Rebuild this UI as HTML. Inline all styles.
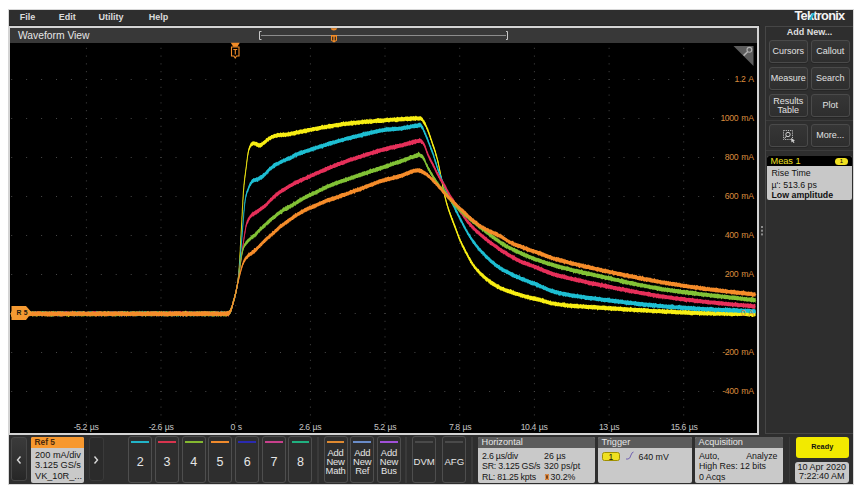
<!DOCTYPE html>
<html><head><meta charset="utf-8">
<style>
*{margin:0;padding:0;box-sizing:border-box}
html,body{width:864px;height:492px;background:#fff;overflow:hidden;font-family:"Liberation Sans",sans-serif}
.a{position:absolute}
#frame{left:9px;top:10px;width:844px;height:474px;background:#2e2e2e;box-shadow:0 0 0 1px #d8d8d8}
.menu{top:11px;font-size:9px;font-weight:bold;color:#dcdcdc;line-height:12px}
#wv{left:8px;top:26px;width:751px;height:409px;border:2px solid #d4d4d4;background:#000}
#tbar{left:10px;top:28px;width:747px;height:14.6px;background:#383838}
.ttl{left:18px;top:29px;font-size:10.3px;color:#e6e6e6;line-height:14px}
.ylab{font-size:8.7px;color:#d98a3c;line-height:8px;text-align:right;width:60px;letter-spacing:-0.4px;word-spacing:1.2px}
.xlab{font-size:8.7px;color:#c4c4c4;line-height:8px;text-align:center;width:50px;letter-spacing:-0.4px;word-spacing:0.8px}
.rbtn{width:38.5px;height:22.5px;border:1px solid #4a4a4a;border-radius:3px;background:linear-gradient(#363636,#2e2e2e);box-shadow:0 1px 0 #262626;color:#e2e2e2;font-size:9px;text-align:center;display:flex;align-items:center;justify-content:center;line-height:9px;padding-top:1px}
.ch{top:436px;width:24px;height:47px;border:1px solid #4e4e4e;border-radius:3px;background:#2e2e2e;color:#e6e6e6;text-align:center}
.ch i{position:absolute;left:2.2px;right:2.2px;top:4.2px;height:1.8px;display:block}
.ch b{position:absolute;left:0;right:0;top:18px;font-weight:normal;font-size:12.5px;line-height:14px}
.ch s{position:absolute;left:0;right:0;top:12.3px;text-decoration:none;font-size:9.4px;line-height:8.7px;letter-spacing:-0.2px}
.badge{top:437px;height:46px;background:#c9c9c9;border-radius:2px;overflow:hidden;color:#151515;font-size:8.8px;line-height:10.6px}
.badge .h{height:10.5px;background:#5b5b5b;color:#e6e6e6;font-size:9.2px;line-height:10.5px;padding-left:3.5px}
.sep{top:437px;width:2px;height:46px;background:#262626}
</style></head><body>
<div id="frame" class="a"></div>
<div class="a" style="left:9px;top:10px;width:844px;height:15px;background:#2e2e2e"></div>
<div class="a" style="left:9px;top:25px;width:751px;height:1.5px;background:#242424"></div>
<div class="a menu" style="left:19.8px">File</div>
<div class="a menu" style="left:58.8px">Edit</div>
<div class="a menu" style="left:98.5px">Utility</div>
<div class="a menu" style="left:148.8px">Help</div>

<div id="wv" class="a"></div>
<div id="tbar" class="a"></div>
<div class="a ttl">Waveform View</div>

<svg class="a" style="left:0;top:0" width="864" height="492" viewBox="0 0 864 492">
<g fill="#484848"><rect x="85.9" y="47.8" width="1" height="1"/><rect x="85.9" y="55.6" width="1" height="1"/><rect x="85.9" y="63.4" width="1" height="1"/><rect x="85.9" y="71.2" width="1" height="1"/><rect x="85.9" y="79.0" width="1" height="1"/><rect x="85.9" y="86.8" width="1" height="1"/><rect x="85.9" y="94.6" width="1" height="1"/><rect x="85.9" y="102.4" width="1" height="1"/><rect x="85.9" y="110.2" width="1" height="1"/><rect x="85.9" y="118.0" width="1" height="1"/><rect x="85.9" y="125.8" width="1" height="1"/><rect x="85.9" y="133.6" width="1" height="1"/><rect x="85.9" y="141.4" width="1" height="1"/><rect x="85.9" y="149.2" width="1" height="1"/><rect x="85.9" y="157.0" width="1" height="1"/><rect x="85.9" y="164.8" width="1" height="1"/><rect x="85.9" y="172.6" width="1" height="1"/><rect x="85.9" y="180.4" width="1" height="1"/><rect x="85.9" y="188.2" width="1" height="1"/><rect x="85.9" y="196.0" width="1" height="1"/><rect x="85.9" y="203.8" width="1" height="1"/><rect x="85.9" y="211.6" width="1" height="1"/><rect x="85.9" y="219.4" width="1" height="1"/><rect x="85.9" y="227.2" width="1" height="1"/><rect x="85.9" y="235.0" width="1" height="1"/><rect x="85.9" y="242.8" width="1" height="1"/><rect x="85.9" y="250.6" width="1" height="1"/><rect x="85.9" y="258.4" width="1" height="1"/><rect x="85.9" y="266.2" width="1" height="1"/><rect x="85.9" y="274.0" width="1" height="1"/><rect x="85.9" y="281.8" width="1" height="1"/><rect x="85.9" y="289.6" width="1" height="1"/><rect x="85.9" y="297.4" width="1" height="1"/><rect x="85.9" y="305.2" width="1" height="1"/><rect x="85.9" y="313.0" width="1" height="1"/><rect x="85.9" y="320.8" width="1" height="1"/><rect x="85.9" y="328.6" width="1" height="1"/><rect x="85.9" y="336.4" width="1" height="1"/><rect x="85.9" y="344.2" width="1" height="1"/><rect x="85.9" y="352.0" width="1" height="1"/><rect x="85.9" y="359.8" width="1" height="1"/><rect x="85.9" y="367.6" width="1" height="1"/><rect x="85.9" y="375.4" width="1" height="1"/><rect x="85.9" y="383.2" width="1" height="1"/><rect x="85.9" y="391.0" width="1" height="1"/><rect x="85.9" y="398.8" width="1" height="1"/><rect x="85.9" y="406.6" width="1" height="1"/><rect x="85.9" y="414.4" width="1" height="1"/><rect x="85.9" y="422.2" width="1" height="1"/><rect x="85.9" y="430.0" width="1" height="1"/><rect x="160.5" y="47.8" width="1" height="1"/><rect x="160.5" y="55.6" width="1" height="1"/><rect x="160.5" y="63.4" width="1" height="1"/><rect x="160.5" y="71.2" width="1" height="1"/><rect x="160.5" y="79.0" width="1" height="1"/><rect x="160.5" y="86.8" width="1" height="1"/><rect x="160.5" y="94.6" width="1" height="1"/><rect x="160.5" y="102.4" width="1" height="1"/><rect x="160.5" y="110.2" width="1" height="1"/><rect x="160.5" y="118.0" width="1" height="1"/><rect x="160.5" y="125.8" width="1" height="1"/><rect x="160.5" y="133.6" width="1" height="1"/><rect x="160.5" y="141.4" width="1" height="1"/><rect x="160.5" y="149.2" width="1" height="1"/><rect x="160.5" y="157.0" width="1" height="1"/><rect x="160.5" y="164.8" width="1" height="1"/><rect x="160.5" y="172.6" width="1" height="1"/><rect x="160.5" y="180.4" width="1" height="1"/><rect x="160.5" y="188.2" width="1" height="1"/><rect x="160.5" y="196.0" width="1" height="1"/><rect x="160.5" y="203.8" width="1" height="1"/><rect x="160.5" y="211.6" width="1" height="1"/><rect x="160.5" y="219.4" width="1" height="1"/><rect x="160.5" y="227.2" width="1" height="1"/><rect x="160.5" y="235.0" width="1" height="1"/><rect x="160.5" y="242.8" width="1" height="1"/><rect x="160.5" y="250.6" width="1" height="1"/><rect x="160.5" y="258.4" width="1" height="1"/><rect x="160.5" y="266.2" width="1" height="1"/><rect x="160.5" y="274.0" width="1" height="1"/><rect x="160.5" y="281.8" width="1" height="1"/><rect x="160.5" y="289.6" width="1" height="1"/><rect x="160.5" y="297.4" width="1" height="1"/><rect x="160.5" y="305.2" width="1" height="1"/><rect x="160.5" y="313.0" width="1" height="1"/><rect x="160.5" y="320.8" width="1" height="1"/><rect x="160.5" y="328.6" width="1" height="1"/><rect x="160.5" y="336.4" width="1" height="1"/><rect x="160.5" y="344.2" width="1" height="1"/><rect x="160.5" y="352.0" width="1" height="1"/><rect x="160.5" y="359.8" width="1" height="1"/><rect x="160.5" y="367.6" width="1" height="1"/><rect x="160.5" y="375.4" width="1" height="1"/><rect x="160.5" y="383.2" width="1" height="1"/><rect x="160.5" y="391.0" width="1" height="1"/><rect x="160.5" y="398.8" width="1" height="1"/><rect x="160.5" y="406.6" width="1" height="1"/><rect x="160.5" y="414.4" width="1" height="1"/><rect x="160.5" y="422.2" width="1" height="1"/><rect x="160.5" y="430.0" width="1" height="1"/><rect x="235.2" y="47.8" width="1" height="1"/><rect x="235.2" y="55.6" width="1" height="1"/><rect x="235.2" y="63.4" width="1" height="1"/><rect x="235.2" y="71.2" width="1" height="1"/><rect x="235.2" y="79.0" width="1" height="1"/><rect x="235.2" y="86.8" width="1" height="1"/><rect x="235.2" y="94.6" width="1" height="1"/><rect x="235.2" y="102.4" width="1" height="1"/><rect x="235.2" y="110.2" width="1" height="1"/><rect x="235.2" y="118.0" width="1" height="1"/><rect x="235.2" y="125.8" width="1" height="1"/><rect x="235.2" y="133.6" width="1" height="1"/><rect x="235.2" y="141.4" width="1" height="1"/><rect x="235.2" y="149.2" width="1" height="1"/><rect x="235.2" y="157.0" width="1" height="1"/><rect x="235.2" y="164.8" width="1" height="1"/><rect x="235.2" y="172.6" width="1" height="1"/><rect x="235.2" y="180.4" width="1" height="1"/><rect x="235.2" y="188.2" width="1" height="1"/><rect x="235.2" y="196.0" width="1" height="1"/><rect x="235.2" y="203.8" width="1" height="1"/><rect x="235.2" y="211.6" width="1" height="1"/><rect x="235.2" y="219.4" width="1" height="1"/><rect x="235.2" y="227.2" width="1" height="1"/><rect x="235.2" y="235.0" width="1" height="1"/><rect x="235.2" y="242.8" width="1" height="1"/><rect x="235.2" y="250.6" width="1" height="1"/><rect x="235.2" y="258.4" width="1" height="1"/><rect x="235.2" y="266.2" width="1" height="1"/><rect x="235.2" y="274.0" width="1" height="1"/><rect x="235.2" y="281.8" width="1" height="1"/><rect x="235.2" y="289.6" width="1" height="1"/><rect x="235.2" y="297.4" width="1" height="1"/><rect x="235.2" y="305.2" width="1" height="1"/><rect x="235.2" y="313.0" width="1" height="1"/><rect x="235.2" y="320.8" width="1" height="1"/><rect x="235.2" y="328.6" width="1" height="1"/><rect x="235.2" y="336.4" width="1" height="1"/><rect x="235.2" y="344.2" width="1" height="1"/><rect x="235.2" y="352.0" width="1" height="1"/><rect x="235.2" y="359.8" width="1" height="1"/><rect x="235.2" y="367.6" width="1" height="1"/><rect x="235.2" y="375.4" width="1" height="1"/><rect x="235.2" y="383.2" width="1" height="1"/><rect x="235.2" y="391.0" width="1" height="1"/><rect x="235.2" y="398.8" width="1" height="1"/><rect x="235.2" y="406.6" width="1" height="1"/><rect x="235.2" y="414.4" width="1" height="1"/><rect x="235.2" y="422.2" width="1" height="1"/><rect x="235.2" y="430.0" width="1" height="1"/><rect x="309.9" y="47.8" width="1" height="1"/><rect x="309.9" y="55.6" width="1" height="1"/><rect x="309.9" y="63.4" width="1" height="1"/><rect x="309.9" y="71.2" width="1" height="1"/><rect x="309.9" y="79.0" width="1" height="1"/><rect x="309.9" y="86.8" width="1" height="1"/><rect x="309.9" y="94.6" width="1" height="1"/><rect x="309.9" y="102.4" width="1" height="1"/><rect x="309.9" y="110.2" width="1" height="1"/><rect x="309.9" y="118.0" width="1" height="1"/><rect x="309.9" y="125.8" width="1" height="1"/><rect x="309.9" y="133.6" width="1" height="1"/><rect x="309.9" y="141.4" width="1" height="1"/><rect x="309.9" y="149.2" width="1" height="1"/><rect x="309.9" y="157.0" width="1" height="1"/><rect x="309.9" y="164.8" width="1" height="1"/><rect x="309.9" y="172.6" width="1" height="1"/><rect x="309.9" y="180.4" width="1" height="1"/><rect x="309.9" y="188.2" width="1" height="1"/><rect x="309.9" y="196.0" width="1" height="1"/><rect x="309.9" y="203.8" width="1" height="1"/><rect x="309.9" y="211.6" width="1" height="1"/><rect x="309.9" y="219.4" width="1" height="1"/><rect x="309.9" y="227.2" width="1" height="1"/><rect x="309.9" y="235.0" width="1" height="1"/><rect x="309.9" y="242.8" width="1" height="1"/><rect x="309.9" y="250.6" width="1" height="1"/><rect x="309.9" y="258.4" width="1" height="1"/><rect x="309.9" y="266.2" width="1" height="1"/><rect x="309.9" y="274.0" width="1" height="1"/><rect x="309.9" y="281.8" width="1" height="1"/><rect x="309.9" y="289.6" width="1" height="1"/><rect x="309.9" y="297.4" width="1" height="1"/><rect x="309.9" y="305.2" width="1" height="1"/><rect x="309.9" y="313.0" width="1" height="1"/><rect x="309.9" y="320.8" width="1" height="1"/><rect x="309.9" y="328.6" width="1" height="1"/><rect x="309.9" y="336.4" width="1" height="1"/><rect x="309.9" y="344.2" width="1" height="1"/><rect x="309.9" y="352.0" width="1" height="1"/><rect x="309.9" y="359.8" width="1" height="1"/><rect x="309.9" y="367.6" width="1" height="1"/><rect x="309.9" y="375.4" width="1" height="1"/><rect x="309.9" y="383.2" width="1" height="1"/><rect x="309.9" y="391.0" width="1" height="1"/><rect x="309.9" y="398.8" width="1" height="1"/><rect x="309.9" y="406.6" width="1" height="1"/><rect x="309.9" y="414.4" width="1" height="1"/><rect x="309.9" y="422.2" width="1" height="1"/><rect x="309.9" y="430.0" width="1" height="1"/><rect x="384.5" y="47.8" width="1" height="1"/><rect x="384.5" y="55.6" width="1" height="1"/><rect x="384.5" y="63.4" width="1" height="1"/><rect x="384.5" y="71.2" width="1" height="1"/><rect x="384.5" y="79.0" width="1" height="1"/><rect x="384.5" y="86.8" width="1" height="1"/><rect x="384.5" y="94.6" width="1" height="1"/><rect x="384.5" y="102.4" width="1" height="1"/><rect x="384.5" y="110.2" width="1" height="1"/><rect x="384.5" y="118.0" width="1" height="1"/><rect x="384.5" y="125.8" width="1" height="1"/><rect x="384.5" y="133.6" width="1" height="1"/><rect x="384.5" y="141.4" width="1" height="1"/><rect x="384.5" y="149.2" width="1" height="1"/><rect x="384.5" y="157.0" width="1" height="1"/><rect x="384.5" y="164.8" width="1" height="1"/><rect x="384.5" y="172.6" width="1" height="1"/><rect x="384.5" y="180.4" width="1" height="1"/><rect x="384.5" y="188.2" width="1" height="1"/><rect x="384.5" y="196.0" width="1" height="1"/><rect x="384.5" y="203.8" width="1" height="1"/><rect x="384.5" y="211.6" width="1" height="1"/><rect x="384.5" y="219.4" width="1" height="1"/><rect x="384.5" y="227.2" width="1" height="1"/><rect x="384.5" y="235.0" width="1" height="1"/><rect x="384.5" y="242.8" width="1" height="1"/><rect x="384.5" y="250.6" width="1" height="1"/><rect x="384.5" y="258.4" width="1" height="1"/><rect x="384.5" y="266.2" width="1" height="1"/><rect x="384.5" y="274.0" width="1" height="1"/><rect x="384.5" y="281.8" width="1" height="1"/><rect x="384.5" y="289.6" width="1" height="1"/><rect x="384.5" y="297.4" width="1" height="1"/><rect x="384.5" y="305.2" width="1" height="1"/><rect x="384.5" y="313.0" width="1" height="1"/><rect x="384.5" y="320.8" width="1" height="1"/><rect x="384.5" y="328.6" width="1" height="1"/><rect x="384.5" y="336.4" width="1" height="1"/><rect x="384.5" y="344.2" width="1" height="1"/><rect x="384.5" y="352.0" width="1" height="1"/><rect x="384.5" y="359.8" width="1" height="1"/><rect x="384.5" y="367.6" width="1" height="1"/><rect x="384.5" y="375.4" width="1" height="1"/><rect x="384.5" y="383.2" width="1" height="1"/><rect x="384.5" y="391.0" width="1" height="1"/><rect x="384.5" y="398.8" width="1" height="1"/><rect x="384.5" y="406.6" width="1" height="1"/><rect x="384.5" y="414.4" width="1" height="1"/><rect x="384.5" y="422.2" width="1" height="1"/><rect x="384.5" y="430.0" width="1" height="1"/><rect x="459.2" y="47.8" width="1" height="1"/><rect x="459.2" y="55.6" width="1" height="1"/><rect x="459.2" y="63.4" width="1" height="1"/><rect x="459.2" y="71.2" width="1" height="1"/><rect x="459.2" y="79.0" width="1" height="1"/><rect x="459.2" y="86.8" width="1" height="1"/><rect x="459.2" y="94.6" width="1" height="1"/><rect x="459.2" y="102.4" width="1" height="1"/><rect x="459.2" y="110.2" width="1" height="1"/><rect x="459.2" y="118.0" width="1" height="1"/><rect x="459.2" y="125.8" width="1" height="1"/><rect x="459.2" y="133.6" width="1" height="1"/><rect x="459.2" y="141.4" width="1" height="1"/><rect x="459.2" y="149.2" width="1" height="1"/><rect x="459.2" y="157.0" width="1" height="1"/><rect x="459.2" y="164.8" width="1" height="1"/><rect x="459.2" y="172.6" width="1" height="1"/><rect x="459.2" y="180.4" width="1" height="1"/><rect x="459.2" y="188.2" width="1" height="1"/><rect x="459.2" y="196.0" width="1" height="1"/><rect x="459.2" y="203.8" width="1" height="1"/><rect x="459.2" y="211.6" width="1" height="1"/><rect x="459.2" y="219.4" width="1" height="1"/><rect x="459.2" y="227.2" width="1" height="1"/><rect x="459.2" y="235.0" width="1" height="1"/><rect x="459.2" y="242.8" width="1" height="1"/><rect x="459.2" y="250.6" width="1" height="1"/><rect x="459.2" y="258.4" width="1" height="1"/><rect x="459.2" y="266.2" width="1" height="1"/><rect x="459.2" y="274.0" width="1" height="1"/><rect x="459.2" y="281.8" width="1" height="1"/><rect x="459.2" y="289.6" width="1" height="1"/><rect x="459.2" y="297.4" width="1" height="1"/><rect x="459.2" y="305.2" width="1" height="1"/><rect x="459.2" y="313.0" width="1" height="1"/><rect x="459.2" y="320.8" width="1" height="1"/><rect x="459.2" y="328.6" width="1" height="1"/><rect x="459.2" y="336.4" width="1" height="1"/><rect x="459.2" y="344.2" width="1" height="1"/><rect x="459.2" y="352.0" width="1" height="1"/><rect x="459.2" y="359.8" width="1" height="1"/><rect x="459.2" y="367.6" width="1" height="1"/><rect x="459.2" y="375.4" width="1" height="1"/><rect x="459.2" y="383.2" width="1" height="1"/><rect x="459.2" y="391.0" width="1" height="1"/><rect x="459.2" y="398.8" width="1" height="1"/><rect x="459.2" y="406.6" width="1" height="1"/><rect x="459.2" y="414.4" width="1" height="1"/><rect x="459.2" y="422.2" width="1" height="1"/><rect x="459.2" y="430.0" width="1" height="1"/><rect x="533.9" y="47.8" width="1" height="1"/><rect x="533.9" y="55.6" width="1" height="1"/><rect x="533.9" y="63.4" width="1" height="1"/><rect x="533.9" y="71.2" width="1" height="1"/><rect x="533.9" y="79.0" width="1" height="1"/><rect x="533.9" y="86.8" width="1" height="1"/><rect x="533.9" y="94.6" width="1" height="1"/><rect x="533.9" y="102.4" width="1" height="1"/><rect x="533.9" y="110.2" width="1" height="1"/><rect x="533.9" y="118.0" width="1" height="1"/><rect x="533.9" y="125.8" width="1" height="1"/><rect x="533.9" y="133.6" width="1" height="1"/><rect x="533.9" y="141.4" width="1" height="1"/><rect x="533.9" y="149.2" width="1" height="1"/><rect x="533.9" y="157.0" width="1" height="1"/><rect x="533.9" y="164.8" width="1" height="1"/><rect x="533.9" y="172.6" width="1" height="1"/><rect x="533.9" y="180.4" width="1" height="1"/><rect x="533.9" y="188.2" width="1" height="1"/><rect x="533.9" y="196.0" width="1" height="1"/><rect x="533.9" y="203.8" width="1" height="1"/><rect x="533.9" y="211.6" width="1" height="1"/><rect x="533.9" y="219.4" width="1" height="1"/><rect x="533.9" y="227.2" width="1" height="1"/><rect x="533.9" y="235.0" width="1" height="1"/><rect x="533.9" y="242.8" width="1" height="1"/><rect x="533.9" y="250.6" width="1" height="1"/><rect x="533.9" y="258.4" width="1" height="1"/><rect x="533.9" y="266.2" width="1" height="1"/><rect x="533.9" y="274.0" width="1" height="1"/><rect x="533.9" y="281.8" width="1" height="1"/><rect x="533.9" y="289.6" width="1" height="1"/><rect x="533.9" y="297.4" width="1" height="1"/><rect x="533.9" y="305.2" width="1" height="1"/><rect x="533.9" y="313.0" width="1" height="1"/><rect x="533.9" y="320.8" width="1" height="1"/><rect x="533.9" y="328.6" width="1" height="1"/><rect x="533.9" y="336.4" width="1" height="1"/><rect x="533.9" y="344.2" width="1" height="1"/><rect x="533.9" y="352.0" width="1" height="1"/><rect x="533.9" y="359.8" width="1" height="1"/><rect x="533.9" y="367.6" width="1" height="1"/><rect x="533.9" y="375.4" width="1" height="1"/><rect x="533.9" y="383.2" width="1" height="1"/><rect x="533.9" y="391.0" width="1" height="1"/><rect x="533.9" y="398.8" width="1" height="1"/><rect x="533.9" y="406.6" width="1" height="1"/><rect x="533.9" y="414.4" width="1" height="1"/><rect x="533.9" y="422.2" width="1" height="1"/><rect x="533.9" y="430.0" width="1" height="1"/><rect x="608.6" y="47.8" width="1" height="1"/><rect x="608.6" y="55.6" width="1" height="1"/><rect x="608.6" y="63.4" width="1" height="1"/><rect x="608.6" y="71.2" width="1" height="1"/><rect x="608.6" y="79.0" width="1" height="1"/><rect x="608.6" y="86.8" width="1" height="1"/><rect x="608.6" y="94.6" width="1" height="1"/><rect x="608.6" y="102.4" width="1" height="1"/><rect x="608.6" y="110.2" width="1" height="1"/><rect x="608.6" y="118.0" width="1" height="1"/><rect x="608.6" y="125.8" width="1" height="1"/><rect x="608.6" y="133.6" width="1" height="1"/><rect x="608.6" y="141.4" width="1" height="1"/><rect x="608.6" y="149.2" width="1" height="1"/><rect x="608.6" y="157.0" width="1" height="1"/><rect x="608.6" y="164.8" width="1" height="1"/><rect x="608.6" y="172.6" width="1" height="1"/><rect x="608.6" y="180.4" width="1" height="1"/><rect x="608.6" y="188.2" width="1" height="1"/><rect x="608.6" y="196.0" width="1" height="1"/><rect x="608.6" y="203.8" width="1" height="1"/><rect x="608.6" y="211.6" width="1" height="1"/><rect x="608.6" y="219.4" width="1" height="1"/><rect x="608.6" y="227.2" width="1" height="1"/><rect x="608.6" y="235.0" width="1" height="1"/><rect x="608.6" y="242.8" width="1" height="1"/><rect x="608.6" y="250.6" width="1" height="1"/><rect x="608.6" y="258.4" width="1" height="1"/><rect x="608.6" y="266.2" width="1" height="1"/><rect x="608.6" y="274.0" width="1" height="1"/><rect x="608.6" y="281.8" width="1" height="1"/><rect x="608.6" y="289.6" width="1" height="1"/><rect x="608.6" y="297.4" width="1" height="1"/><rect x="608.6" y="305.2" width="1" height="1"/><rect x="608.6" y="313.0" width="1" height="1"/><rect x="608.6" y="320.8" width="1" height="1"/><rect x="608.6" y="328.6" width="1" height="1"/><rect x="608.6" y="336.4" width="1" height="1"/><rect x="608.6" y="344.2" width="1" height="1"/><rect x="608.6" y="352.0" width="1" height="1"/><rect x="608.6" y="359.8" width="1" height="1"/><rect x="608.6" y="367.6" width="1" height="1"/><rect x="608.6" y="375.4" width="1" height="1"/><rect x="608.6" y="383.2" width="1" height="1"/><rect x="608.6" y="391.0" width="1" height="1"/><rect x="608.6" y="398.8" width="1" height="1"/><rect x="608.6" y="406.6" width="1" height="1"/><rect x="608.6" y="414.4" width="1" height="1"/><rect x="608.6" y="422.2" width="1" height="1"/><rect x="608.6" y="430.0" width="1" height="1"/><rect x="683.2" y="47.8" width="1" height="1"/><rect x="683.2" y="55.6" width="1" height="1"/><rect x="683.2" y="63.4" width="1" height="1"/><rect x="683.2" y="71.2" width="1" height="1"/><rect x="683.2" y="79.0" width="1" height="1"/><rect x="683.2" y="86.8" width="1" height="1"/><rect x="683.2" y="94.6" width="1" height="1"/><rect x="683.2" y="102.4" width="1" height="1"/><rect x="683.2" y="110.2" width="1" height="1"/><rect x="683.2" y="118.0" width="1" height="1"/><rect x="683.2" y="125.8" width="1" height="1"/><rect x="683.2" y="133.6" width="1" height="1"/><rect x="683.2" y="141.4" width="1" height="1"/><rect x="683.2" y="149.2" width="1" height="1"/><rect x="683.2" y="157.0" width="1" height="1"/><rect x="683.2" y="164.8" width="1" height="1"/><rect x="683.2" y="172.6" width="1" height="1"/><rect x="683.2" y="180.4" width="1" height="1"/><rect x="683.2" y="188.2" width="1" height="1"/><rect x="683.2" y="196.0" width="1" height="1"/><rect x="683.2" y="203.8" width="1" height="1"/><rect x="683.2" y="211.6" width="1" height="1"/><rect x="683.2" y="219.4" width="1" height="1"/><rect x="683.2" y="227.2" width="1" height="1"/><rect x="683.2" y="235.0" width="1" height="1"/><rect x="683.2" y="242.8" width="1" height="1"/><rect x="683.2" y="250.6" width="1" height="1"/><rect x="683.2" y="258.4" width="1" height="1"/><rect x="683.2" y="266.2" width="1" height="1"/><rect x="683.2" y="274.0" width="1" height="1"/><rect x="683.2" y="281.8" width="1" height="1"/><rect x="683.2" y="289.6" width="1" height="1"/><rect x="683.2" y="297.4" width="1" height="1"/><rect x="683.2" y="305.2" width="1" height="1"/><rect x="683.2" y="313.0" width="1" height="1"/><rect x="683.2" y="320.8" width="1" height="1"/><rect x="683.2" y="328.6" width="1" height="1"/><rect x="683.2" y="336.4" width="1" height="1"/><rect x="683.2" y="344.2" width="1" height="1"/><rect x="683.2" y="352.0" width="1" height="1"/><rect x="683.2" y="359.8" width="1" height="1"/><rect x="683.2" y="367.6" width="1" height="1"/><rect x="683.2" y="375.4" width="1" height="1"/><rect x="683.2" y="383.2" width="1" height="1"/><rect x="683.2" y="391.0" width="1" height="1"/><rect x="683.2" y="398.8" width="1" height="1"/><rect x="683.2" y="406.6" width="1" height="1"/><rect x="683.2" y="414.4" width="1" height="1"/><rect x="683.2" y="422.2" width="1" height="1"/><rect x="683.2" y="430.0" width="1" height="1"/><rect x="11.2" y="79.0" width="1" height="1"/><rect x="26.1" y="79.0" width="1" height="1"/><rect x="41.1" y="79.0" width="1" height="1"/><rect x="56.0" y="79.0" width="1" height="1"/><rect x="70.9" y="79.0" width="1" height="1"/><rect x="85.9" y="79.0" width="1" height="1"/><rect x="100.8" y="79.0" width="1" height="1"/><rect x="115.7" y="79.0" width="1" height="1"/><rect x="130.7" y="79.0" width="1" height="1"/><rect x="145.6" y="79.0" width="1" height="1"/><rect x="160.5" y="79.0" width="1" height="1"/><rect x="175.5" y="79.0" width="1" height="1"/><rect x="190.4" y="79.0" width="1" height="1"/><rect x="205.3" y="79.0" width="1" height="1"/><rect x="220.3" y="79.0" width="1" height="1"/><rect x="235.2" y="79.0" width="1" height="1"/><rect x="250.1" y="79.0" width="1" height="1"/><rect x="265.1" y="79.0" width="1" height="1"/><rect x="280.0" y="79.0" width="1" height="1"/><rect x="294.9" y="79.0" width="1" height="1"/><rect x="309.9" y="79.0" width="1" height="1"/><rect x="324.8" y="79.0" width="1" height="1"/><rect x="339.7" y="79.0" width="1" height="1"/><rect x="354.7" y="79.0" width="1" height="1"/><rect x="369.6" y="79.0" width="1" height="1"/><rect x="384.5" y="79.0" width="1" height="1"/><rect x="399.5" y="79.0" width="1" height="1"/><rect x="414.4" y="79.0" width="1" height="1"/><rect x="429.4" y="79.0" width="1" height="1"/><rect x="444.3" y="79.0" width="1" height="1"/><rect x="459.2" y="79.0" width="1" height="1"/><rect x="474.2" y="79.0" width="1" height="1"/><rect x="489.1" y="79.0" width="1" height="1"/><rect x="504.0" y="79.0" width="1" height="1"/><rect x="519.0" y="79.0" width="1" height="1"/><rect x="533.9" y="79.0" width="1" height="1"/><rect x="548.8" y="79.0" width="1" height="1"/><rect x="563.8" y="79.0" width="1" height="1"/><rect x="578.7" y="79.0" width="1" height="1"/><rect x="593.6" y="79.0" width="1" height="1"/><rect x="608.6" y="79.0" width="1" height="1"/><rect x="623.5" y="79.0" width="1" height="1"/><rect x="638.4" y="79.0" width="1" height="1"/><rect x="653.4" y="79.0" width="1" height="1"/><rect x="668.3" y="79.0" width="1" height="1"/><rect x="683.2" y="79.0" width="1" height="1"/><rect x="698.2" y="79.0" width="1" height="1"/><rect x="713.1" y="79.0" width="1" height="1"/><rect x="728.0" y="79.0" width="1" height="1"/><rect x="743.0" y="79.0" width="1" height="1"/><rect x="11.2" y="118.0" width="1" height="1"/><rect x="26.1" y="118.0" width="1" height="1"/><rect x="41.1" y="118.0" width="1" height="1"/><rect x="56.0" y="118.0" width="1" height="1"/><rect x="70.9" y="118.0" width="1" height="1"/><rect x="85.9" y="118.0" width="1" height="1"/><rect x="100.8" y="118.0" width="1" height="1"/><rect x="115.7" y="118.0" width="1" height="1"/><rect x="130.7" y="118.0" width="1" height="1"/><rect x="145.6" y="118.0" width="1" height="1"/><rect x="160.5" y="118.0" width="1" height="1"/><rect x="175.5" y="118.0" width="1" height="1"/><rect x="190.4" y="118.0" width="1" height="1"/><rect x="205.3" y="118.0" width="1" height="1"/><rect x="220.3" y="118.0" width="1" height="1"/><rect x="235.2" y="118.0" width="1" height="1"/><rect x="250.1" y="118.0" width="1" height="1"/><rect x="265.1" y="118.0" width="1" height="1"/><rect x="280.0" y="118.0" width="1" height="1"/><rect x="294.9" y="118.0" width="1" height="1"/><rect x="309.9" y="118.0" width="1" height="1"/><rect x="324.8" y="118.0" width="1" height="1"/><rect x="339.7" y="118.0" width="1" height="1"/><rect x="354.7" y="118.0" width="1" height="1"/><rect x="369.6" y="118.0" width="1" height="1"/><rect x="384.5" y="118.0" width="1" height="1"/><rect x="399.5" y="118.0" width="1" height="1"/><rect x="414.4" y="118.0" width="1" height="1"/><rect x="429.4" y="118.0" width="1" height="1"/><rect x="444.3" y="118.0" width="1" height="1"/><rect x="459.2" y="118.0" width="1" height="1"/><rect x="474.2" y="118.0" width="1" height="1"/><rect x="489.1" y="118.0" width="1" height="1"/><rect x="504.0" y="118.0" width="1" height="1"/><rect x="519.0" y="118.0" width="1" height="1"/><rect x="533.9" y="118.0" width="1" height="1"/><rect x="548.8" y="118.0" width="1" height="1"/><rect x="563.8" y="118.0" width="1" height="1"/><rect x="578.7" y="118.0" width="1" height="1"/><rect x="593.6" y="118.0" width="1" height="1"/><rect x="608.6" y="118.0" width="1" height="1"/><rect x="623.5" y="118.0" width="1" height="1"/><rect x="638.4" y="118.0" width="1" height="1"/><rect x="653.4" y="118.0" width="1" height="1"/><rect x="668.3" y="118.0" width="1" height="1"/><rect x="683.2" y="118.0" width="1" height="1"/><rect x="698.2" y="118.0" width="1" height="1"/><rect x="713.1" y="118.0" width="1" height="1"/><rect x="728.0" y="118.0" width="1" height="1"/><rect x="743.0" y="118.0" width="1" height="1"/><rect x="11.2" y="157.0" width="1" height="1"/><rect x="26.1" y="157.0" width="1" height="1"/><rect x="41.1" y="157.0" width="1" height="1"/><rect x="56.0" y="157.0" width="1" height="1"/><rect x="70.9" y="157.0" width="1" height="1"/><rect x="85.9" y="157.0" width="1" height="1"/><rect x="100.8" y="157.0" width="1" height="1"/><rect x="115.7" y="157.0" width="1" height="1"/><rect x="130.7" y="157.0" width="1" height="1"/><rect x="145.6" y="157.0" width="1" height="1"/><rect x="160.5" y="157.0" width="1" height="1"/><rect x="175.5" y="157.0" width="1" height="1"/><rect x="190.4" y="157.0" width="1" height="1"/><rect x="205.3" y="157.0" width="1" height="1"/><rect x="220.3" y="157.0" width="1" height="1"/><rect x="235.2" y="157.0" width="1" height="1"/><rect x="250.1" y="157.0" width="1" height="1"/><rect x="265.1" y="157.0" width="1" height="1"/><rect x="280.0" y="157.0" width="1" height="1"/><rect x="294.9" y="157.0" width="1" height="1"/><rect x="309.9" y="157.0" width="1" height="1"/><rect x="324.8" y="157.0" width="1" height="1"/><rect x="339.7" y="157.0" width="1" height="1"/><rect x="354.7" y="157.0" width="1" height="1"/><rect x="369.6" y="157.0" width="1" height="1"/><rect x="384.5" y="157.0" width="1" height="1"/><rect x="399.5" y="157.0" width="1" height="1"/><rect x="414.4" y="157.0" width="1" height="1"/><rect x="429.4" y="157.0" width="1" height="1"/><rect x="444.3" y="157.0" width="1" height="1"/><rect x="459.2" y="157.0" width="1" height="1"/><rect x="474.2" y="157.0" width="1" height="1"/><rect x="489.1" y="157.0" width="1" height="1"/><rect x="504.0" y="157.0" width="1" height="1"/><rect x="519.0" y="157.0" width="1" height="1"/><rect x="533.9" y="157.0" width="1" height="1"/><rect x="548.8" y="157.0" width="1" height="1"/><rect x="563.8" y="157.0" width="1" height="1"/><rect x="578.7" y="157.0" width="1" height="1"/><rect x="593.6" y="157.0" width="1" height="1"/><rect x="608.6" y="157.0" width="1" height="1"/><rect x="623.5" y="157.0" width="1" height="1"/><rect x="638.4" y="157.0" width="1" height="1"/><rect x="653.4" y="157.0" width="1" height="1"/><rect x="668.3" y="157.0" width="1" height="1"/><rect x="683.2" y="157.0" width="1" height="1"/><rect x="698.2" y="157.0" width="1" height="1"/><rect x="713.1" y="157.0" width="1" height="1"/><rect x="728.0" y="157.0" width="1" height="1"/><rect x="743.0" y="157.0" width="1" height="1"/><rect x="11.2" y="196.0" width="1" height="1"/><rect x="26.1" y="196.0" width="1" height="1"/><rect x="41.1" y="196.0" width="1" height="1"/><rect x="56.0" y="196.0" width="1" height="1"/><rect x="70.9" y="196.0" width="1" height="1"/><rect x="85.9" y="196.0" width="1" height="1"/><rect x="100.8" y="196.0" width="1" height="1"/><rect x="115.7" y="196.0" width="1" height="1"/><rect x="130.7" y="196.0" width="1" height="1"/><rect x="145.6" y="196.0" width="1" height="1"/><rect x="160.5" y="196.0" width="1" height="1"/><rect x="175.5" y="196.0" width="1" height="1"/><rect x="190.4" y="196.0" width="1" height="1"/><rect x="205.3" y="196.0" width="1" height="1"/><rect x="220.3" y="196.0" width="1" height="1"/><rect x="235.2" y="196.0" width="1" height="1"/><rect x="250.1" y="196.0" width="1" height="1"/><rect x="265.1" y="196.0" width="1" height="1"/><rect x="280.0" y="196.0" width="1" height="1"/><rect x="294.9" y="196.0" width="1" height="1"/><rect x="309.9" y="196.0" width="1" height="1"/><rect x="324.8" y="196.0" width="1" height="1"/><rect x="339.7" y="196.0" width="1" height="1"/><rect x="354.7" y="196.0" width="1" height="1"/><rect x="369.6" y="196.0" width="1" height="1"/><rect x="384.5" y="196.0" width="1" height="1"/><rect x="399.5" y="196.0" width="1" height="1"/><rect x="414.4" y="196.0" width="1" height="1"/><rect x="429.4" y="196.0" width="1" height="1"/><rect x="444.3" y="196.0" width="1" height="1"/><rect x="459.2" y="196.0" width="1" height="1"/><rect x="474.2" y="196.0" width="1" height="1"/><rect x="489.1" y="196.0" width="1" height="1"/><rect x="504.0" y="196.0" width="1" height="1"/><rect x="519.0" y="196.0" width="1" height="1"/><rect x="533.9" y="196.0" width="1" height="1"/><rect x="548.8" y="196.0" width="1" height="1"/><rect x="563.8" y="196.0" width="1" height="1"/><rect x="578.7" y="196.0" width="1" height="1"/><rect x="593.6" y="196.0" width="1" height="1"/><rect x="608.6" y="196.0" width="1" height="1"/><rect x="623.5" y="196.0" width="1" height="1"/><rect x="638.4" y="196.0" width="1" height="1"/><rect x="653.4" y="196.0" width="1" height="1"/><rect x="668.3" y="196.0" width="1" height="1"/><rect x="683.2" y="196.0" width="1" height="1"/><rect x="698.2" y="196.0" width="1" height="1"/><rect x="713.1" y="196.0" width="1" height="1"/><rect x="728.0" y="196.0" width="1" height="1"/><rect x="743.0" y="196.0" width="1" height="1"/><rect x="11.2" y="235.0" width="1" height="1"/><rect x="26.1" y="235.0" width="1" height="1"/><rect x="41.1" y="235.0" width="1" height="1"/><rect x="56.0" y="235.0" width="1" height="1"/><rect x="70.9" y="235.0" width="1" height="1"/><rect x="85.9" y="235.0" width="1" height="1"/><rect x="100.8" y="235.0" width="1" height="1"/><rect x="115.7" y="235.0" width="1" height="1"/><rect x="130.7" y="235.0" width="1" height="1"/><rect x="145.6" y="235.0" width="1" height="1"/><rect x="160.5" y="235.0" width="1" height="1"/><rect x="175.5" y="235.0" width="1" height="1"/><rect x="190.4" y="235.0" width="1" height="1"/><rect x="205.3" y="235.0" width="1" height="1"/><rect x="220.3" y="235.0" width="1" height="1"/><rect x="235.2" y="235.0" width="1" height="1"/><rect x="250.1" y="235.0" width="1" height="1"/><rect x="265.1" y="235.0" width="1" height="1"/><rect x="280.0" y="235.0" width="1" height="1"/><rect x="294.9" y="235.0" width="1" height="1"/><rect x="309.9" y="235.0" width="1" height="1"/><rect x="324.8" y="235.0" width="1" height="1"/><rect x="339.7" y="235.0" width="1" height="1"/><rect x="354.7" y="235.0" width="1" height="1"/><rect x="369.6" y="235.0" width="1" height="1"/><rect x="384.5" y="235.0" width="1" height="1"/><rect x="399.5" y="235.0" width="1" height="1"/><rect x="414.4" y="235.0" width="1" height="1"/><rect x="429.4" y="235.0" width="1" height="1"/><rect x="444.3" y="235.0" width="1" height="1"/><rect x="459.2" y="235.0" width="1" height="1"/><rect x="474.2" y="235.0" width="1" height="1"/><rect x="489.1" y="235.0" width="1" height="1"/><rect x="504.0" y="235.0" width="1" height="1"/><rect x="519.0" y="235.0" width="1" height="1"/><rect x="533.9" y="235.0" width="1" height="1"/><rect x="548.8" y="235.0" width="1" height="1"/><rect x="563.8" y="235.0" width="1" height="1"/><rect x="578.7" y="235.0" width="1" height="1"/><rect x="593.6" y="235.0" width="1" height="1"/><rect x="608.6" y="235.0" width="1" height="1"/><rect x="623.5" y="235.0" width="1" height="1"/><rect x="638.4" y="235.0" width="1" height="1"/><rect x="653.4" y="235.0" width="1" height="1"/><rect x="668.3" y="235.0" width="1" height="1"/><rect x="683.2" y="235.0" width="1" height="1"/><rect x="698.2" y="235.0" width="1" height="1"/><rect x="713.1" y="235.0" width="1" height="1"/><rect x="728.0" y="235.0" width="1" height="1"/><rect x="743.0" y="235.0" width="1" height="1"/><rect x="11.2" y="274.0" width="1" height="1"/><rect x="26.1" y="274.0" width="1" height="1"/><rect x="41.1" y="274.0" width="1" height="1"/><rect x="56.0" y="274.0" width="1" height="1"/><rect x="70.9" y="274.0" width="1" height="1"/><rect x="85.9" y="274.0" width="1" height="1"/><rect x="100.8" y="274.0" width="1" height="1"/><rect x="115.7" y="274.0" width="1" height="1"/><rect x="130.7" y="274.0" width="1" height="1"/><rect x="145.6" y="274.0" width="1" height="1"/><rect x="160.5" y="274.0" width="1" height="1"/><rect x="175.5" y="274.0" width="1" height="1"/><rect x="190.4" y="274.0" width="1" height="1"/><rect x="205.3" y="274.0" width="1" height="1"/><rect x="220.3" y="274.0" width="1" height="1"/><rect x="235.2" y="274.0" width="1" height="1"/><rect x="250.1" y="274.0" width="1" height="1"/><rect x="265.1" y="274.0" width="1" height="1"/><rect x="280.0" y="274.0" width="1" height="1"/><rect x="294.9" y="274.0" width="1" height="1"/><rect x="309.9" y="274.0" width="1" height="1"/><rect x="324.8" y="274.0" width="1" height="1"/><rect x="339.7" y="274.0" width="1" height="1"/><rect x="354.7" y="274.0" width="1" height="1"/><rect x="369.6" y="274.0" width="1" height="1"/><rect x="384.5" y="274.0" width="1" height="1"/><rect x="399.5" y="274.0" width="1" height="1"/><rect x="414.4" y="274.0" width="1" height="1"/><rect x="429.4" y="274.0" width="1" height="1"/><rect x="444.3" y="274.0" width="1" height="1"/><rect x="459.2" y="274.0" width="1" height="1"/><rect x="474.2" y="274.0" width="1" height="1"/><rect x="489.1" y="274.0" width="1" height="1"/><rect x="504.0" y="274.0" width="1" height="1"/><rect x="519.0" y="274.0" width="1" height="1"/><rect x="533.9" y="274.0" width="1" height="1"/><rect x="548.8" y="274.0" width="1" height="1"/><rect x="563.8" y="274.0" width="1" height="1"/><rect x="578.7" y="274.0" width="1" height="1"/><rect x="593.6" y="274.0" width="1" height="1"/><rect x="608.6" y="274.0" width="1" height="1"/><rect x="623.5" y="274.0" width="1" height="1"/><rect x="638.4" y="274.0" width="1" height="1"/><rect x="653.4" y="274.0" width="1" height="1"/><rect x="668.3" y="274.0" width="1" height="1"/><rect x="683.2" y="274.0" width="1" height="1"/><rect x="698.2" y="274.0" width="1" height="1"/><rect x="713.1" y="274.0" width="1" height="1"/><rect x="728.0" y="274.0" width="1" height="1"/><rect x="743.0" y="274.0" width="1" height="1"/><rect x="11.2" y="313.0" width="1" height="1"/><rect x="26.1" y="313.0" width="1" height="1"/><rect x="41.1" y="313.0" width="1" height="1"/><rect x="56.0" y="313.0" width="1" height="1"/><rect x="70.9" y="313.0" width="1" height="1"/><rect x="85.9" y="313.0" width="1" height="1"/><rect x="100.8" y="313.0" width="1" height="1"/><rect x="115.7" y="313.0" width="1" height="1"/><rect x="130.7" y="313.0" width="1" height="1"/><rect x="145.6" y="313.0" width="1" height="1"/><rect x="160.5" y="313.0" width="1" height="1"/><rect x="175.5" y="313.0" width="1" height="1"/><rect x="190.4" y="313.0" width="1" height="1"/><rect x="205.3" y="313.0" width="1" height="1"/><rect x="220.3" y="313.0" width="1" height="1"/><rect x="235.2" y="313.0" width="1" height="1"/><rect x="250.1" y="313.0" width="1" height="1"/><rect x="265.1" y="313.0" width="1" height="1"/><rect x="280.0" y="313.0" width="1" height="1"/><rect x="294.9" y="313.0" width="1" height="1"/><rect x="309.9" y="313.0" width="1" height="1"/><rect x="324.8" y="313.0" width="1" height="1"/><rect x="339.7" y="313.0" width="1" height="1"/><rect x="354.7" y="313.0" width="1" height="1"/><rect x="369.6" y="313.0" width="1" height="1"/><rect x="384.5" y="313.0" width="1" height="1"/><rect x="399.5" y="313.0" width="1" height="1"/><rect x="414.4" y="313.0" width="1" height="1"/><rect x="429.4" y="313.0" width="1" height="1"/><rect x="444.3" y="313.0" width="1" height="1"/><rect x="459.2" y="313.0" width="1" height="1"/><rect x="474.2" y="313.0" width="1" height="1"/><rect x="489.1" y="313.0" width="1" height="1"/><rect x="504.0" y="313.0" width="1" height="1"/><rect x="519.0" y="313.0" width="1" height="1"/><rect x="533.9" y="313.0" width="1" height="1"/><rect x="548.8" y="313.0" width="1" height="1"/><rect x="563.8" y="313.0" width="1" height="1"/><rect x="578.7" y="313.0" width="1" height="1"/><rect x="593.6" y="313.0" width="1" height="1"/><rect x="608.6" y="313.0" width="1" height="1"/><rect x="623.5" y="313.0" width="1" height="1"/><rect x="638.4" y="313.0" width="1" height="1"/><rect x="653.4" y="313.0" width="1" height="1"/><rect x="668.3" y="313.0" width="1" height="1"/><rect x="683.2" y="313.0" width="1" height="1"/><rect x="698.2" y="313.0" width="1" height="1"/><rect x="713.1" y="313.0" width="1" height="1"/><rect x="728.0" y="313.0" width="1" height="1"/><rect x="743.0" y="313.0" width="1" height="1"/><rect x="11.2" y="352.0" width="1" height="1"/><rect x="26.1" y="352.0" width="1" height="1"/><rect x="41.1" y="352.0" width="1" height="1"/><rect x="56.0" y="352.0" width="1" height="1"/><rect x="70.9" y="352.0" width="1" height="1"/><rect x="85.9" y="352.0" width="1" height="1"/><rect x="100.8" y="352.0" width="1" height="1"/><rect x="115.7" y="352.0" width="1" height="1"/><rect x="130.7" y="352.0" width="1" height="1"/><rect x="145.6" y="352.0" width="1" height="1"/><rect x="160.5" y="352.0" width="1" height="1"/><rect x="175.5" y="352.0" width="1" height="1"/><rect x="190.4" y="352.0" width="1" height="1"/><rect x="205.3" y="352.0" width="1" height="1"/><rect x="220.3" y="352.0" width="1" height="1"/><rect x="235.2" y="352.0" width="1" height="1"/><rect x="250.1" y="352.0" width="1" height="1"/><rect x="265.1" y="352.0" width="1" height="1"/><rect x="280.0" y="352.0" width="1" height="1"/><rect x="294.9" y="352.0" width="1" height="1"/><rect x="309.9" y="352.0" width="1" height="1"/><rect x="324.8" y="352.0" width="1" height="1"/><rect x="339.7" y="352.0" width="1" height="1"/><rect x="354.7" y="352.0" width="1" height="1"/><rect x="369.6" y="352.0" width="1" height="1"/><rect x="384.5" y="352.0" width="1" height="1"/><rect x="399.5" y="352.0" width="1" height="1"/><rect x="414.4" y="352.0" width="1" height="1"/><rect x="429.4" y="352.0" width="1" height="1"/><rect x="444.3" y="352.0" width="1" height="1"/><rect x="459.2" y="352.0" width="1" height="1"/><rect x="474.2" y="352.0" width="1" height="1"/><rect x="489.1" y="352.0" width="1" height="1"/><rect x="504.0" y="352.0" width="1" height="1"/><rect x="519.0" y="352.0" width="1" height="1"/><rect x="533.9" y="352.0" width="1" height="1"/><rect x="548.8" y="352.0" width="1" height="1"/><rect x="563.8" y="352.0" width="1" height="1"/><rect x="578.7" y="352.0" width="1" height="1"/><rect x="593.6" y="352.0" width="1" height="1"/><rect x="608.6" y="352.0" width="1" height="1"/><rect x="623.5" y="352.0" width="1" height="1"/><rect x="638.4" y="352.0" width="1" height="1"/><rect x="653.4" y="352.0" width="1" height="1"/><rect x="668.3" y="352.0" width="1" height="1"/><rect x="683.2" y="352.0" width="1" height="1"/><rect x="698.2" y="352.0" width="1" height="1"/><rect x="713.1" y="352.0" width="1" height="1"/><rect x="728.0" y="352.0" width="1" height="1"/><rect x="743.0" y="352.0" width="1" height="1"/><rect x="11.2" y="391.0" width="1" height="1"/><rect x="26.1" y="391.0" width="1" height="1"/><rect x="41.1" y="391.0" width="1" height="1"/><rect x="56.0" y="391.0" width="1" height="1"/><rect x="70.9" y="391.0" width="1" height="1"/><rect x="85.9" y="391.0" width="1" height="1"/><rect x="100.8" y="391.0" width="1" height="1"/><rect x="115.7" y="391.0" width="1" height="1"/><rect x="130.7" y="391.0" width="1" height="1"/><rect x="145.6" y="391.0" width="1" height="1"/><rect x="160.5" y="391.0" width="1" height="1"/><rect x="175.5" y="391.0" width="1" height="1"/><rect x="190.4" y="391.0" width="1" height="1"/><rect x="205.3" y="391.0" width="1" height="1"/><rect x="220.3" y="391.0" width="1" height="1"/><rect x="235.2" y="391.0" width="1" height="1"/><rect x="250.1" y="391.0" width="1" height="1"/><rect x="265.1" y="391.0" width="1" height="1"/><rect x="280.0" y="391.0" width="1" height="1"/><rect x="294.9" y="391.0" width="1" height="1"/><rect x="309.9" y="391.0" width="1" height="1"/><rect x="324.8" y="391.0" width="1" height="1"/><rect x="339.7" y="391.0" width="1" height="1"/><rect x="354.7" y="391.0" width="1" height="1"/><rect x="369.6" y="391.0" width="1" height="1"/><rect x="384.5" y="391.0" width="1" height="1"/><rect x="399.5" y="391.0" width="1" height="1"/><rect x="414.4" y="391.0" width="1" height="1"/><rect x="429.4" y="391.0" width="1" height="1"/><rect x="444.3" y="391.0" width="1" height="1"/><rect x="459.2" y="391.0" width="1" height="1"/><rect x="474.2" y="391.0" width="1" height="1"/><rect x="489.1" y="391.0" width="1" height="1"/><rect x="504.0" y="391.0" width="1" height="1"/><rect x="519.0" y="391.0" width="1" height="1"/><rect x="533.9" y="391.0" width="1" height="1"/><rect x="548.8" y="391.0" width="1" height="1"/><rect x="563.8" y="391.0" width="1" height="1"/><rect x="578.7" y="391.0" width="1" height="1"/><rect x="593.6" y="391.0" width="1" height="1"/><rect x="608.6" y="391.0" width="1" height="1"/><rect x="623.5" y="391.0" width="1" height="1"/><rect x="638.4" y="391.0" width="1" height="1"/><rect x="653.4" y="391.0" width="1" height="1"/><rect x="668.3" y="391.0" width="1" height="1"/><rect x="683.2" y="391.0" width="1" height="1"/><rect x="698.2" y="391.0" width="1" height="1"/><rect x="713.1" y="391.0" width="1" height="1"/><rect x="728.0" y="391.0" width="1" height="1"/><rect x="743.0" y="391.0" width="1" height="1"/></g>
<!-- overview bar -->
<path d="M261.5 31.5 h-2 v8 h2" fill="none" stroke="#c8c8c8" stroke-width="1"/>
<line x1="261" y1="35.5" x2="506" y2="35.5" stroke="#8c8c8c" stroke-width="1"/>
<path d="M506 31.5 h1.5 v8 h-1.5" fill="none" stroke="#c8c8c8" stroke-width="1"/>
<path d="M330.6 28.2 h6.6 q-0.6 2.4 -3.3 2.4 q-2.7 0 -3.3 -2.4 z" fill="#f28c28"/>
<path d="M331 35 h6 v5.6 l-3 1.8 l-3 -1.8 z" fill="#f28c28"/><rect x="332.2" y="36.6" width="1.1" height="3.8" fill="#1a1a1a"/><rect x="334.7" y="36.6" width="1.1" height="3.8" fill="#1a1a1a"/>
<!-- trigger marker -->
<path d="M230.8 42.8 h9 l-2.5 4 h-4 z" fill="#f28c28"/>
<path d="M231.5 47 h7.5 v9 h-2.5 l-1.3 2 l-1.3 -2 h-2.4 z" fill="#000" stroke="#f28c28" stroke-width="1.1"/>
<path d="M233.3 49.5 h4 M235.3 49.5 v5" stroke="#f28c28" stroke-width="1.1"/>
<!-- magnifier -->
<path d="M733.5 46 H753.5 V66 Z" fill="#5c5c5c"/>
<circle cx="749.4" cy="49.8" r="2.4" fill="none" stroke="#b0b0b0" stroke-width="1.1"/>
<line x1="747.6" y1="51.7" x2="743.6" y2="55.6" stroke="#b0b0b0" stroke-width="1.5"/>
<clipPath id="gc"><rect x="10" y="42.6" width="747" height="390.4"/></clipPath><g clip-path="url(#gc)" fill="none" stroke-linejoin="round" stroke-linecap="round">
<path d="M11.0,312.0 11.7,311.9 12.4,311.9 13.1,311.6 13.8,311.8 14.5,311.6 15.2,312.0 15.9,311.4 16.6,311.8 17.3,311.7 18.0,311.8 18.7,311.9 19.4,312.0 20.1,311.6 20.8,312.0 21.5,311.7 22.2,311.4 22.9,311.8 23.6,311.1 24.3,311.4 25.0,311.1 25.7,311.9 26.4,311.4 27.1,311.9 27.8,312.0 28.5,312.0 29.2,310.8 29.9,311.8 30.6,312.0 31.3,312.0 32.0,311.3 32.7,311.8 33.4,311.6 34.1,311.6 34.8,311.5 35.5,311.6 36.2,312.0 36.9,311.6 37.6,311.8 38.3,312.0 39.0,312.0 39.7,312.0 40.4,311.4 41.1,312.0 41.8,311.4 42.5,311.3 43.2,311.6 43.9,312.0 44.6,311.7 45.3,311.0 46.0,311.7 46.7,311.5 47.4,312.0 48.1,311.8 48.8,312.0 49.5,311.7 50.2,312.0 50.9,311.7 51.6,311.3 52.3,311.7 53.0,311.9 53.7,311.8 54.4,312.0 55.1,311.5 55.8,311.8 56.5,312.0 57.2,311.6 57.9,311.5 58.6,311.4 59.3,311.7 60.0,311.7 60.7,311.1 61.4,311.8 62.1,312.0 62.8,311.4 63.5,311.7 64.2,311.9 64.9,311.9 65.6,311.9 66.3,311.3 67.0,311.8 67.7,311.9 68.4,311.9 69.1,312.0 69.8,312.0 70.5,311.5 71.2,312.0 71.9,311.8 72.6,311.5 73.3,311.7 74.0,312.0 74.7,311.7 75.4,311.9 76.1,311.5 76.8,312.0 77.5,311.8 78.2,311.4 78.9,311.9 79.6,311.2 80.3,311.0 81.0,311.9 81.7,311.6 82.4,312.0 83.1,310.9 83.8,311.6 84.5,311.7 85.2,311.9 85.9,311.8 86.6,312.0 87.3,311.9 88.0,311.7 88.7,311.8 89.4,311.5 90.1,312.0 90.8,312.0 91.5,311.5 92.2,311.9 92.9,311.6 93.6,311.6 94.3,312.0 95.0,312.0 95.7,311.8 96.4,312.0 97.1,311.1 97.8,311.5 98.5,311.9 99.2,311.0 99.9,311.6 100.6,311.2 101.3,311.7 102.0,311.6 102.7,311.7 103.4,312.0 104.1,311.3 104.8,311.4 105.5,311.3 106.2,312.0 106.9,311.9 107.6,312.0 108.3,311.6 109.0,311.5 109.7,311.8 110.4,312.0 111.1,311.7 111.8,311.7 112.5,311.4 113.2,311.4 113.9,312.0 114.6,311.6 115.3,312.0 116.0,311.7 116.7,311.9 117.4,311.8 118.1,312.0 118.8,311.9 119.5,311.9 120.2,311.4 120.9,311.6 121.6,311.2 122.3,311.7 123.0,311.5 123.7,311.9 124.4,311.3 125.1,311.3 125.8,311.9 126.5,311.7 127.2,311.2 127.9,311.7 128.6,312.0 129.3,312.0 130.0,311.7 130.7,311.8 131.4,311.8 132.1,312.0 132.8,311.5 133.5,311.4 134.2,311.4 134.9,311.8 135.6,311.9 136.3,312.0 137.0,311.8 137.7,311.8 138.4,311.7 139.1,311.9 139.8,312.0 140.5,312.0 141.2,311.5 141.9,311.7 142.6,311.9 143.3,311.8 144.0,311.4 144.7,311.6 145.4,311.6 146.1,312.0 146.8,311.8 147.5,311.7 148.2,311.6 148.9,311.6 149.6,311.8 150.3,311.3 151.0,311.4 151.7,311.6 152.4,311.8 153.1,311.6 153.8,311.1 154.5,311.3 155.2,311.5 155.9,311.2 156.6,311.6 157.3,311.5 158.0,312.0 158.7,311.6 159.4,311.2 160.1,311.0 160.8,311.9 161.5,312.0 162.2,311.9 162.9,312.0 163.6,311.6 164.3,311.3 165.0,312.0 165.7,311.6 166.4,311.2 167.1,311.8 167.8,312.0 168.5,311.8 169.2,311.6 169.9,311.7 170.6,311.6 171.3,311.6 172.0,312.0 172.7,311.7 173.4,311.9 174.1,311.9 174.8,311.0 175.5,311.4 176.2,311.6 176.9,312.0 177.6,312.0 178.3,311.3 179.0,311.8 179.7,311.7 180.4,312.0 181.1,312.0 181.8,311.9 182.5,311.5 183.2,312.0 183.9,310.9 184.6,311.7 185.3,311.1 186.0,310.4 186.7,311.8 187.4,311.4 188.1,312.0 188.8,311.5 189.5,311.6 190.2,311.5 190.9,312.0 191.6,312.0 192.3,312.0 193.0,312.0 193.7,311.6 194.4,311.8 195.1,311.9 195.8,311.5 196.5,311.8 197.2,311.7 197.9,311.5 198.6,311.4 199.3,312.0 200.0,312.0 200.7,311.4 201.4,311.2 202.1,311.3 202.8,311.8 203.5,311.7 204.2,311.9 204.9,310.7 205.6,311.9 206.3,312.0 207.0,312.0 207.7,311.5 208.4,311.9 209.1,312.0 209.8,311.5 210.5,311.9 211.2,312.0 211.9,311.3 212.6,311.8 213.3,311.9 214.0,311.1 214.7,311.3 215.4,311.6 216.1,311.6 216.8,311.7 217.5,312.0 218.2,311.9 218.9,311.9 219.6,311.9 220.3,312.0 221.0,311.3 221.7,311.8 222.4,312.0 223.1,311.8 223.8,311.7 224.5,311.2 225.2,311.8 225.9,312.0 226.6,311.9 227.3,311.5 228.0,312.1 228.6,311.4 229.0,311.1 229.5,310.6 229.9,310.1 230.3,309.5 230.6,308.2 230.9,308.2 231.2,307.3 231.5,306.6 231.7,306.0 231.9,305.4 232.0,304.3 232.2,304.2 232.4,303.4 232.6,302.9 232.8,302.3 232.9,301.2 233.1,300.8 233.3,299.3 233.5,299.5 233.7,298.9 233.9,297.8 234.1,297.5 234.3,296.3 234.5,295.7 234.6,294.9 234.8,294.5 235.0,293.7 235.2,292.8 235.3,292.7 235.5,291.9 235.7,290.5 235.8,290.7 236.0,289.9 236.1,288.8 236.3,288.8 236.4,287.4 236.6,286.9 236.7,286.3 236.8,285.6 237.0,285.1 237.1,284.5 237.2,283.9 237.3,283.2 237.5,282.4 237.6,281.8 237.7,281.2 237.8,280.4 237.9,279.8 237.9,278.9 238.0,277.5 238.1,277.4 238.2,277.0 238.3,275.5 238.4,275.5 238.4,274.0 238.5,273.6 238.6,273.1 238.6,272.5 238.7,272.1 238.8,270.6 238.8,270.6 238.9,269.7 238.9,269.1 239.0,267.6 239.0,267.9 239.1,266.9 239.1,266.0 239.2,265.9 239.2,265.1 239.3,263.9 239.3,263.7 239.4,262.5 239.4,261.8 239.5,261.2 239.5,260.5 239.5,260.1 239.6,259.3 239.6,258.8 239.7,258.0 239.7,257.3 239.8,256.2 239.8,255.4 239.8,255.0 239.9,254.6 239.9,253.9 239.9,252.8 240.0,251.7 240.0,251.5 240.1,251.1 240.1,250.3 240.1,249.6 240.2,248.6 240.2,248.3 240.3,247.1 240.3,246.6 240.3,245.9 240.4,245.4 240.4,244.0 240.4,243.6 240.5,243.2 240.5,242.2 240.5,241.9 240.6,241.3 240.6,240.2 240.7,238.8 240.7,239.2 240.7,237.8 240.8,237.6 240.8,237.2 240.8,235.7 240.9,235.6 240.9,234.6 241.0,233.8 241.0,233.2 241.0,232.9 241.1,231.8 241.1,231.4 241.1,230.7 241.2,230.2 241.2,229.3 241.3,228.4 241.3,228.0 241.3,226.9 241.4,226.1 241.4,226.0 241.5,224.9 241.5,223.9 241.5,224.0 241.6,222.9 241.6,222.1 241.7,221.4 241.7,220.9 241.7,219.7 241.8,219.4 241.8,218.9 241.8,218.3 241.9,217.3 241.9,216.7 241.9,216.2 242.0,215.3 242.0,214.8 242.1,213.6 242.1,213.4 242.1,212.7 242.2,211.6 242.2,210.9 242.2,210.7 242.3,209.1 242.3,209.0 242.4,208.0 242.4,207.0 242.4,207.2 242.5,205.9 242.5,205.0 242.5,204.5 242.6,204.0 242.6,203.1 242.7,202.8 242.7,201.9 242.7,201.2 242.8,200.6 242.8,199.8 242.9,199.3 242.9,198.3 242.9,197.5 243.0,196.5 243.0,195.8 243.1,195.8 243.1,195.2 243.2,194.6 243.2,193.8 243.3,193.2 243.3,191.6 243.3,191.3 243.4,190.3 243.4,189.9 243.5,189.0 243.5,188.6 243.6,187.9 243.7,187.1 243.7,186.2 243.8,186.0 243.8,184.8 243.9,183.4 243.9,183.9 244.0,182.9 244.1,182.2 244.1,181.5 244.2,181.2 244.3,179.9 244.4,179.5 244.4,178.6 244.5,178.2 244.6,177.7 244.7,176.7 244.8,175.5 244.8,175.6 244.9,175.1 245.0,174.4 245.1,173.7 245.2,172.4 245.3,172.3 245.4,171.6 245.5,170.3 245.6,169.3 245.7,169.5 245.8,168.5 245.9,168.1 245.9,167.1 246.0,166.4 246.1,166.0 246.2,164.8 246.3,164.4 246.4,163.9 246.5,163.2 246.5,162.5 246.6,161.5 246.7,160.7 246.8,160.4 246.9,159.5 247.0,159.0 247.1,158.4 247.1,157.0 247.2,157.0 247.3,155.7 247.4,155.3 247.5,154.8 247.6,153.2 247.7,153.5 247.8,152.8 247.9,152.1 248.1,151.3 248.2,150.6 248.3,149.6 248.5,149.3 248.6,148.5 248.8,148.0 249.0,146.8 249.2,146.6 249.4,146.0 249.7,145.4 250.0,144.6 250.3,143.9 250.7,142.7 251.1,142.8 251.5,142.3 252.0,141.8 252.6,141.4 253.3,141.2 254.0,141.5 254.7,141.5 255.3,141.7 256.0,142.1 256.6,141.8 257.2,142.6 257.8,142.6 258.5,142.9 259.2,143.5 259.9,142.8 260.6,143.0 261.2,143.1 261.8,141.5 262.4,142.2 262.9,141.2 263.4,140.9 264.0,140.7 264.5,139.9 265.0,139.9 265.5,139.5 266.0,138.3 266.5,137.9 267.1,138.2 267.6,137.7 268.2,136.7 268.8,136.6 269.4,136.4 270.0,136.1 270.6,135.9 271.2,135.1 271.8,134.9 272.5,135.0 273.1,134.4 273.8,134.2 274.4,133.8 275.1,133.9 275.8,133.8 276.5,133.6 277.2,133.1 277.8,132.7 278.5,133.1 279.2,133.3 279.9,133.1 280.6,132.3 281.3,133.0 282.0,132.8 282.7,132.7 283.4,131.9 284.1,132.9 284.8,132.5 285.5,132.7 286.2,132.6 286.9,132.8 287.6,132.4 288.3,131.3 289.0,132.5 289.7,132.1 290.4,131.9 291.1,131.2 291.7,131.4 292.4,131.6 293.1,131.4 293.8,131.0 294.4,131.0 295.1,131.1 295.8,130.5 296.5,129.8 297.2,130.6 297.9,130.5 298.6,130.3 299.2,129.6 299.9,130.1 300.6,129.2 301.3,129.4 302.0,129.6 302.7,129.5 303.4,129.0 304.1,128.8 304.7,128.4 305.4,128.6 306.1,128.7 306.8,128.4 307.5,127.9 308.2,128.0 308.9,128.1 309.5,128.0 310.2,127.9 310.9,127.5 311.6,127.7 312.3,127.2 313.0,127.1 313.7,127.0 314.4,127.2 315.0,126.8 315.7,126.7 316.4,126.8 317.1,126.3 317.8,126.6 318.5,126.3 319.2,125.9 319.9,125.9 320.5,125.9 321.2,125.4 321.9,124.8 322.6,124.7 323.3,125.6 324.0,125.4 324.7,124.6 325.4,125.2 326.1,124.6 326.7,124.9 327.4,124.7 328.1,124.3 328.8,123.8 329.5,123.8 330.2,124.1 330.9,123.9 331.6,124.1 332.3,123.9 333.0,123.6 333.6,123.7 334.3,123.5 335.0,123.2 335.7,123.3 336.4,122.9 337.1,122.7 337.8,123.2 338.5,122.7 339.2,122.8 339.9,122.8 340.6,122.4 341.3,121.9 342.0,122.1 342.6,122.3 343.3,121.1 344.0,121.8 344.7,122.2 345.4,121.8 346.1,121.0 346.8,121.9 347.5,121.7 348.2,121.2 348.9,121.5 349.6,121.3 350.3,121.3 351.0,120.5 351.7,120.6 352.4,121.1 353.1,120.9 353.8,120.2 354.5,120.8 355.2,121.0 355.9,120.8 356.6,120.6 357.3,120.7 358.0,119.9 358.7,120.5 359.3,120.3 360.0,120.4 360.7,120.2 361.4,120.3 362.1,119.2 362.8,119.7 363.5,120.1 364.2,119.7 364.9,119.2 365.6,120.1 366.3,119.1 367.0,119.5 367.7,119.3 368.4,119.6 369.1,119.7 369.8,118.7 370.5,119.5 371.2,118.8 371.9,119.4 372.6,119.4 373.3,119.3 374.0,119.3 374.7,119.0 375.4,118.9 376.1,118.3 376.8,119.1 377.5,118.1 378.2,118.0 378.9,118.3 379.6,118.5 380.3,118.5 381.0,118.0 381.7,118.7 382.4,118.6 383.1,118.4 383.8,118.5 384.5,118.3 385.2,118.4 385.8,117.8 386.5,118.1 387.2,117.1 387.9,118.2 388.6,118.1 389.3,117.9 390.0,117.7 390.7,117.5 391.4,117.9 392.1,117.5 392.8,117.8 393.5,117.8 394.2,117.1 394.9,117.5 395.6,117.7 396.3,117.5 397.0,117.0 397.7,116.7 398.4,117.3 399.1,117.3 399.8,117.2 400.5,117.2 401.2,116.8 401.9,116.6 402.6,117.0 403.3,117.2 404.0,117.0 404.7,117.0 405.4,116.8 406.1,116.1 406.8,116.9 407.5,116.3 408.2,116.7 408.9,116.8 409.6,116.8 410.3,116.1 411.0,116.8 411.7,116.1 412.4,116.4 413.1,116.3 413.8,116.1 414.5,116.5 415.2,116.3 415.9,115.6 416.6,116.2 417.3,116.5 418.0,116.4 418.7,116.5 419.4,116.2 420.1,116.5 420.8,115.9 421.3,116.8 421.8,117.3 422.3,117.8 422.7,117.8 423.1,119.0 423.5,119.6 423.9,120.2 424.3,120.2 424.6,120.7 425.0,122.1 425.3,122.1 425.6,122.5 425.9,123.8 426.2,124.6 426.5,124.9 426.7,125.9 427.0,126.2 427.3,126.9 427.5,127.5 427.8,128.5 428.0,128.7 428.3,128.5 428.5,130.0 428.8,130.9 429.0,131.4 429.3,132.1 429.5,132.5 429.7,133.5 430.0,134.4 430.2,134.6 430.4,135.3 430.7,136.2 430.9,136.0 431.1,137.0 431.3,138.2 431.5,139.0 431.8,139.6 432.0,139.5 432.2,140.8 432.4,141.3 432.6,142.1 432.9,143.0 433.1,143.3 433.3,144.1 433.6,144.7 433.8,145.1 434.0,145.9 434.2,146.3 434.5,147.6 434.7,147.8 434.9,148.8 435.1,149.2 435.3,150.0 435.5,150.9 435.7,150.4 435.9,152.0 436.1,152.8 436.3,153.7 436.5,154.2 436.7,154.4 436.9,155.5 437.1,155.5 437.2,156.9 437.4,157.7 437.6,158.4 437.7,158.5 437.9,159.6 438.0,160.1 438.2,160.6 438.4,161.4 438.5,161.5 438.7,162.8 438.8,163.8 439.0,164.5 439.1,164.4 439.2,165.5 439.4,166.6 439.5,167.1 439.7,167.6 439.8,168.5 439.9,169.2 440.1,169.9 440.2,170.7 440.3,171.4 440.5,171.6 440.6,172.8 440.7,173.1 440.9,173.7 441.0,174.8 441.1,175.2 441.3,175.7 441.4,176.8 441.5,177.1 441.7,177.7 441.8,177.8 441.9,178.7 442.1,180.3 442.2,180.7 442.3,181.7 442.4,182.4 442.6,182.4 442.7,183.2 442.8,184.0 443.0,185.2 443.1,185.2 443.2,186.5 443.4,186.9 443.5,187.8 443.7,188.3 443.8,189.3 443.9,189.8 444.1,190.4 444.2,190.3 444.4,191.6 444.5,192.4 444.7,193.3 444.8,194.1 445.0,194.3 445.1,195.2 445.3,195.8 445.4,196.7 445.6,196.9 445.8,197.5 445.9,198.3 446.1,199.2 446.3,199.7 446.5,200.3 446.7,201.5 446.9,201.6 447.1,202.7 447.3,203.1 447.5,203.7 447.7,204.7 447.9,205.4 448.1,205.9 448.3,206.6 448.5,207.4 448.8,208.2 449.0,208.6 449.2,209.3 449.5,210.2 449.7,210.9 449.9,211.3 450.1,212.0 450.4,212.3 450.6,213.4 450.8,213.8 451.0,214.3 451.3,215.2 451.5,215.0 451.8,216.4 452.0,217.1 452.3,218.0 452.5,217.9 452.8,218.6 453.0,219.1 453.3,220.3 453.5,221.1 453.8,221.7 454.1,222.3 454.3,223.3 454.6,223.8 454.8,224.3 455.1,225.3 455.3,225.5 455.6,225.5 455.8,227.0 456.0,227.4 456.3,228.1 456.5,229.2 456.8,229.5 457.0,230.4 457.2,230.8 457.5,231.4 457.7,231.8 458.0,233.2 458.2,233.6 458.5,234.0 458.7,235.1 459.0,235.3 459.3,236.5 459.5,237.1 459.8,237.5 460.1,237.9 460.4,238.9 460.6,239.5 460.9,240.2 461.2,240.9 461.5,241.1 461.8,241.7 462.1,242.7 462.4,243.3 462.7,243.7 463.0,244.6 463.3,245.2 463.6,245.8 464.0,245.6 464.3,247.1 464.6,247.0 464.9,248.0 465.2,248.8 465.6,249.5 465.9,250.1 466.2,250.9 466.5,251.6 466.9,252.1 467.2,251.9 467.5,253.3 467.8,253.0 468.2,254.5 468.5,255.0 468.8,255.6 469.1,256.5 469.5,257.0 469.8,257.1 470.1,257.5 470.5,258.5 470.8,258.6 471.2,259.7 471.5,260.0 471.9,260.9 472.3,261.7 472.7,261.9 473.1,263.0 473.5,263.6 473.9,264.3 474.3,264.6 474.7,264.5 475.2,265.9 475.6,266.4 476.1,266.6 476.5,267.3 477.0,268.0 477.4,268.2 477.9,269.1 478.4,268.8 478.9,269.2 479.4,270.5 479.8,270.7 480.3,271.5 480.8,271.8 481.3,272.5 481.8,272.4 482.3,273.6 482.9,272.9 483.4,274.0 483.9,274.5 484.4,275.0 485.0,275.7 485.5,275.9 486.0,276.4 486.6,276.9 487.1,277.3 487.7,277.7 488.2,278.4 488.8,278.5 489.3,278.7 489.9,279.5 490.5,279.2 491.0,280.3 491.6,280.8 492.2,281.3 492.7,280.9 493.3,281.7 493.9,282.1 494.5,282.6 495.1,282.8 495.7,283.4 496.3,283.6 496.9,284.4 497.5,284.0 498.2,284.4 498.8,284.2 499.4,285.2 500.0,285.9 500.7,286.2 501.3,286.5 502.0,286.8 502.6,287.1 503.2,286.9 503.9,286.7 504.5,288.0 505.2,287.9 505.8,288.4 506.5,288.6 507.2,288.5 507.8,288.9 508.5,289.1 509.1,289.5 509.8,289.6 510.5,289.1 511.1,289.2 511.8,289.9 512.4,290.7 513.1,289.8 513.8,290.8 514.4,291.3 515.1,291.6 515.8,291.6 516.5,292.0 517.1,292.0 517.8,292.1 518.5,292.5 519.1,292.7 519.8,292.5 520.5,293.3 521.1,293.0 521.8,293.6 522.5,293.4 523.2,293.9 523.8,294.0 524.5,294.3 525.2,294.6 525.9,294.8 526.5,294.8 527.2,294.8 527.9,294.8 528.6,294.8 529.2,295.7 529.9,295.5 530.6,295.8 531.3,295.8 532.0,296.3 532.7,296.2 533.3,296.1 534.0,296.4 534.7,295.9 535.4,296.8 536.1,296.3 536.7,297.5 537.4,297.1 538.1,297.5 538.8,297.3 539.5,297.7 540.1,297.4 540.8,298.3 541.5,298.6 542.2,298.3 542.9,297.7 543.5,298.5 544.2,299.3 544.9,299.4 545.5,299.5 546.2,299.7 546.9,299.7 547.5,300.4 548.2,300.1 548.9,300.8 549.6,300.9 550.2,300.0 550.9,300.9 551.6,301.4 552.3,301.6 553.0,301.6 553.7,301.4 554.3,301.8 555.0,301.7 555.7,301.4 556.4,301.9 557.1,302.2 557.8,302.5 558.5,302.1 559.2,302.6 559.9,302.8 560.6,302.7 561.3,302.7 562.0,302.9 562.7,302.2 563.4,302.6 564.1,302.5 564.8,302.2 565.5,303.2 566.2,303.4 566.8,303.3 567.5,303.2 568.2,303.6 568.9,303.7 569.6,303.7 570.3,302.9 571.0,303.8 571.7,303.5 572.4,303.7 573.1,303.9 573.8,303.8 574.5,303.7 575.2,304.0 575.9,303.8 576.6,303.7 577.3,303.8 578.0,303.7 578.7,304.4 579.4,304.4 580.1,304.2 580.8,303.9 581.5,304.6 582.2,304.5 582.9,304.6 583.6,303.9 584.3,304.4 585.0,304.9 585.7,304.5 586.4,304.5 587.1,305.0 587.8,305.0 588.5,304.7 589.2,305.0 589.9,305.1 590.6,305.0 591.3,304.5 592.0,305.4 592.7,304.7 593.4,305.0 594.1,304.8 594.8,305.0 595.5,305.0 596.2,305.5 596.9,304.9 597.6,305.4 598.3,305.2 599.0,305.7 599.7,305.5 600.4,305.8 601.1,305.8 601.8,305.7 602.5,305.5 603.2,305.5 603.9,305.6 604.6,305.5 605.3,305.9 606.0,305.5 606.7,306.3 607.3,306.2 608.0,306.2 608.7,306.0 609.4,306.3 610.1,306.1 610.8,305.9 611.5,306.3 612.2,306.6 612.9,306.3 613.6,306.3 614.3,306.7 615.0,305.7 615.7,306.6 616.4,306.7 617.1,306.5 617.8,307.0 618.5,306.5 619.2,306.9 619.9,306.6 620.6,306.2 621.3,307.1 622.0,306.7 622.7,307.3 623.4,307.2 624.1,307.1 624.8,307.1 625.5,307.3 626.2,307.1 626.9,307.6 627.6,307.3 628.3,307.4 629.0,307.6 629.7,307.8 630.4,306.5 631.1,307.6 631.8,307.3 632.5,308.0 633.2,308.0 633.9,307.7 634.6,307.7 635.3,307.5 636.0,308.0 636.7,308.0 637.4,308.0 638.1,308.1 638.8,308.1 639.5,307.7 640.2,308.2 640.9,308.0 641.6,307.8 642.3,308.5 643.0,307.9 643.7,308.1 644.4,308.0 645.1,307.9 645.8,308.4 646.5,308.2 647.2,308.6 647.9,308.0 648.6,308.4 649.3,308.9 650.0,308.9 650.7,309.0 651.4,309.0 652.1,308.9 652.8,309.2 653.5,308.4 654.2,308.4 654.9,309.2 655.6,308.9 656.3,309.3 657.0,309.0 657.7,309.4 658.4,309.1 659.1,308.7 659.8,309.0 660.5,309.3 661.2,309.3 661.9,309.6 662.5,308.4 663.2,309.3 663.9,309.6 664.6,309.0 665.3,309.7 666.0,309.7 666.7,309.2 667.4,309.2 668.1,309.1 668.8,310.0 669.5,309.9 670.2,309.3 670.9,309.7 671.6,308.8 672.3,309.8 673.0,309.6 673.7,310.0 674.4,309.8 675.1,309.6 675.8,309.7 676.5,310.3 677.2,310.3 677.9,310.0 678.6,310.2 679.3,310.3 680.0,310.1 680.7,309.9 681.4,310.6 682.1,310.3 682.8,310.0 683.5,310.0 684.2,310.5 684.9,309.8 685.6,310.1 686.3,310.0 687.0,310.7 687.7,310.6 688.4,309.9 689.1,310.2 689.8,310.6 690.5,310.5 691.2,310.9 691.9,310.9 692.6,310.2 693.3,310.9 694.0,310.5 694.7,310.5 695.4,311.0 696.1,311.0 696.8,310.5 697.5,310.7 698.2,311.0 698.9,311.0 699.6,311.0 700.3,311.0 701.0,311.1 701.7,310.5 702.4,311.3 703.1,311.2 703.8,311.2 704.5,310.4 705.2,311.4 705.9,311.2 706.6,310.8 707.3,310.5 708.0,310.3 708.7,311.0 709.4,311.2 710.1,311.0 710.8,311.2 711.5,311.6 712.2,311.1 712.9,311.4 713.6,311.4 714.3,310.5 715.0,310.4 715.7,311.4 716.4,310.9 717.1,311.4 717.8,311.1 718.5,311.0 719.2,311.1 719.9,311.9 720.6,311.3 721.3,311.8 722.0,310.8 722.7,311.1 723.4,311.9 724.1,311.4 724.8,311.9 725.5,311.9 726.2,311.0 726.9,311.3 727.6,312.0 728.3,311.4 729.0,311.6 729.7,311.8 730.4,311.6 731.1,311.4 731.8,311.9 732.5,311.4 733.2,312.0 733.9,311.2 734.6,311.7 735.3,312.0 736.0,311.6 736.7,311.5 737.4,311.5 738.1,311.4 738.8,310.9 739.5,311.9 740.2,311.8 740.9,311.8 741.6,312.0 742.3,311.7 743.0,312.0 743.7,312.0 744.4,311.8 745.1,311.9 745.8,312.0 746.5,311.3 747.2,312.0 747.9,311.5 748.6,312.1 749.3,311.7 750.0,312.1 750.7,312.0 751.4,311.5 752.1,311.8 752.8,311.7 753.5,311.9 754.2,311.4 754.9,311.8 755.6,312.1 755.6,315.9 754.9,316.2 754.2,316.5 753.5,316.4 752.8,317.0 752.1,317.0 751.4,316.5 750.7,316.0 750.0,316.0 749.3,317.0 748.6,316.5 747.9,316.0 747.2,316.5 746.5,316.0 745.8,316.0 745.1,315.9 744.4,315.9 743.7,315.7 743.0,315.7 742.3,315.7 741.6,315.9 740.9,315.7 740.2,316.0 739.5,315.9 738.8,316.0 738.1,315.8 737.4,316.5 736.7,315.9 736.0,315.7 735.3,315.7 734.6,316.1 733.9,316.0 733.2,315.9 732.5,316.5 731.8,316.1 731.1,316.7 730.4,315.8 729.7,316.0 729.0,315.8 728.3,315.5 727.6,316.0 726.9,316.2 726.2,315.5 725.5,315.6 724.8,316.3 724.1,315.9 723.4,315.6 722.7,315.7 722.0,315.6 721.3,315.5 720.6,315.6 719.9,315.9 719.2,315.7 718.5,315.5 717.8,315.5 717.1,315.7 716.4,315.4 715.7,316.0 715.0,315.6 714.3,315.9 713.6,316.2 712.9,315.2 712.2,315.3 711.5,315.7 710.8,315.5 710.1,315.7 709.4,315.2 708.7,315.1 708.0,315.7 707.3,315.7 706.6,315.4 705.9,315.2 705.2,315.4 704.5,315.4 703.8,315.3 703.1,315.8 702.4,315.1 701.7,315.4 701.0,315.3 700.3,315.3 699.6,316.2 698.9,315.1 698.2,314.8 697.5,315.2 696.8,314.8 696.1,315.0 695.4,314.7 694.7,314.9 694.0,314.7 693.3,315.1 692.6,315.3 691.9,315.8 691.2,315.1 690.5,315.3 689.8,314.9 689.1,314.8 688.4,314.7 687.7,314.9 687.0,314.4 686.3,314.7 685.6,314.8 684.9,314.7 684.2,314.6 683.5,314.5 682.8,314.4 682.1,314.7 681.4,314.4 680.7,314.8 680.0,314.2 679.3,314.1 678.6,314.6 677.9,314.8 677.2,314.1 676.5,314.4 675.8,314.4 675.1,314.3 674.4,314.1 673.7,314.1 673.0,314.2 672.3,314.0 671.6,314.3 670.9,313.7 670.2,313.6 669.5,313.8 668.8,313.6 668.1,313.6 667.4,313.5 666.7,314.4 666.0,313.8 665.3,314.1 664.6,314.0 663.9,313.8 663.2,313.6 662.5,314.1 661.9,313.2 661.2,313.6 660.5,313.2 659.8,313.3 659.1,313.3 658.4,313.0 657.7,313.0 657.0,313.4 656.3,313.5 655.6,313.0 654.9,313.1 654.2,313.2 653.5,313.0 652.8,313.7 652.1,313.1 651.4,312.7 650.7,312.7 650.0,312.8 649.3,312.7 648.6,312.5 647.9,312.6 647.2,312.9 646.5,313.1 645.8,312.6 645.1,312.3 644.4,312.4 643.7,312.8 643.0,312.4 642.3,312.2 641.6,312.8 640.9,312.3 640.2,312.5 639.5,312.1 638.8,312.1 638.1,312.5 637.4,312.6 636.7,312.3 636.0,311.9 635.3,311.9 634.6,312.4 633.9,312.5 633.2,311.8 632.5,311.7 631.8,311.5 631.1,311.8 630.4,312.0 629.7,312.0 629.0,311.6 628.3,311.3 627.6,311.9 626.9,311.7 626.2,311.4 625.5,311.6 624.8,312.0 624.1,311.3 623.4,311.9 622.7,311.4 622.0,311.1 621.3,311.2 620.6,311.0 619.9,310.8 619.2,311.2 618.5,311.1 617.8,310.8 617.1,310.6 616.4,310.9 615.7,310.8 615.0,311.3 614.3,310.5 613.6,310.9 612.9,310.4 612.2,310.8 611.5,311.3 610.8,310.8 610.1,310.4 609.4,310.2 608.7,310.5 608.0,310.4 607.3,309.9 606.7,310.1 606.0,310.5 605.3,310.4 604.6,310.2 603.9,309.8 603.2,309.9 602.5,310.1 601.8,309.8 601.1,310.0 600.4,309.7 599.7,309.8 599.0,309.7 598.3,309.7 597.6,310.8 596.9,309.6 596.2,309.3 595.5,309.4 594.8,309.5 594.1,309.6 593.4,309.2 592.7,309.7 592.0,309.2 591.3,309.3 590.6,309.2 589.9,308.8 589.2,309.0 588.5,309.7 587.8,308.9 587.1,309.1 586.4,308.9 585.7,308.7 585.0,308.9 584.3,308.6 583.6,308.6 582.9,308.6 582.2,309.0 581.5,308.5 580.8,308.2 580.1,308.2 579.4,308.3 578.7,308.7 578.0,308.6 577.3,308.6 576.6,308.3 575.9,308.4 575.2,307.9 574.5,308.6 573.8,307.9 573.1,307.9 572.4,307.7 571.7,308.8 571.0,308.1 570.3,307.8 569.6,307.7 568.9,307.7 568.2,307.5 567.5,308.2 566.8,307.3 566.2,307.1 565.5,307.7 564.8,307.4 564.1,307.3 563.4,306.9 562.7,306.8 562.0,306.6 561.3,307.2 560.6,306.6 559.9,306.5 559.2,306.3 558.5,306.3 557.8,306.6 557.1,306.1 556.4,305.9 555.7,306.4 555.0,306.1 554.3,305.6 553.7,305.6 553.0,305.6 552.3,305.3 551.6,305.6 550.9,305.3 550.2,305.3 549.6,304.8 548.9,304.7 548.2,304.2 547.5,304.1 546.9,304.3 546.2,303.8 545.5,303.6 544.9,303.2 544.2,303.6 543.5,303.5 542.9,303.0 542.2,303.1 541.5,302.3 540.8,302.2 540.1,302.2 539.5,301.7 538.8,301.6 538.1,302.0 537.4,301.3 536.7,301.5 536.1,301.0 535.4,301.0 534.7,301.0 534.0,300.4 533.3,301.0 532.7,300.5 532.0,300.2 531.3,300.1 530.6,300.0 529.9,300.8 529.2,299.3 528.6,299.2 527.9,299.5 527.2,299.3 526.5,298.6 525.9,299.5 525.2,298.3 524.5,298.4 523.8,298.0 523.2,297.6 522.5,298.2 521.8,297.3 521.1,297.7 520.5,297.6 519.8,296.7 519.1,296.6 518.5,296.6 517.8,296.0 517.1,295.9 516.5,295.7 515.8,295.9 515.1,295.5 514.4,295.3 513.8,295.2 513.1,294.9 512.4,294.4 511.8,294.4 511.1,294.3 510.5,293.7 509.8,294.1 509.1,293.2 508.5,293.2 507.8,293.3 507.2,293.0 506.5,292.4 505.8,292.5 505.2,292.0 504.5,291.7 503.9,291.5 503.2,291.5 502.6,290.7 502.0,290.7 501.3,290.4 500.7,290.5 500.0,290.3 499.4,289.4 498.8,289.2 498.2,288.8 497.5,289.3 496.9,288.8 496.3,287.8 495.7,287.6 495.1,287.2 494.5,286.8 493.9,286.7 493.3,285.9 492.7,285.6 492.2,286.2 491.6,284.9 491.0,284.8 490.5,284.7 489.9,284.2 489.3,283.2 488.8,283.6 488.2,282.3 487.7,281.8 487.1,281.3 486.6,281.9 486.0,280.9 485.5,280.9 485.0,279.6 484.4,279.3 483.9,279.3 483.4,278.3 482.9,278.6 482.3,277.6 481.8,276.7 481.3,276.7 480.8,275.7 480.3,275.8 479.8,275.7 479.4,274.2 478.9,274.3 478.4,273.2 477.9,273.1 477.4,272.3 477.0,272.1 476.5,271.6 476.1,270.8 475.6,270.0 475.2,269.5 474.7,269.1 474.3,268.9 473.9,268.0 473.5,267.6 473.1,266.7 472.7,266.1 472.3,265.5 471.9,265.4 471.5,264.6 471.2,263.7 470.8,263.4 470.5,262.9 470.1,262.9 469.8,261.5 469.5,260.7 469.1,260.4 468.8,260.0 468.5,259.5 468.2,258.2 467.8,258.0 467.5,257.4 467.2,256.6 466.9,256.1 466.5,255.6 466.2,254.7 465.9,254.1 465.6,253.8 465.2,253.2 464.9,252.9 464.6,252.2 464.3,250.8 464.0,250.6 463.6,249.8 463.3,249.7 463.0,248.2 462.7,247.6 462.4,248.0 462.1,246.7 461.8,246.8 461.5,245.5 461.2,244.5 460.9,244.0 460.6,243.3 460.4,242.7 460.1,242.0 459.8,241.8 459.5,241.4 459.3,240.5 459.0,239.9 458.7,238.8 458.5,238.4 458.2,238.3 458.0,237.1 457.7,236.2 457.5,236.1 457.2,234.8 457.0,234.4 456.8,233.5 456.5,232.9 456.3,232.5 456.0,231.6 455.8,231.5 455.6,230.5 455.3,229.5 455.1,230.1 454.8,228.4 454.6,227.7 454.3,227.0 454.1,227.5 453.8,225.8 453.5,225.3 453.3,224.4 453.0,223.8 452.8,223.0 452.5,222.8 452.3,221.9 452.0,221.0 451.8,220.6 451.5,219.7 451.3,219.4 451.0,218.5 450.8,217.9 450.6,217.2 450.4,216.5 450.1,216.1 449.9,215.7 449.7,214.8 449.5,214.0 449.2,213.5 449.0,213.2 448.8,212.0 448.5,211.4 448.3,211.0 448.1,210.2 447.9,209.8 447.7,208.6 447.5,207.9 447.3,207.2 447.1,206.8 446.9,206.0 446.7,205.1 446.5,204.5 446.3,203.8 446.1,203.5 445.9,202.6 445.8,202.0 445.6,201.1 445.4,200.4 445.3,199.8 445.1,199.1 445.0,198.9 444.8,198.0 444.7,197.6 444.5,197.0 444.4,196.2 444.2,195.1 444.1,194.7 443.9,194.2 443.8,193.1 443.7,192.2 443.5,191.7 443.4,191.1 443.2,190.5 443.1,189.5 443.0,189.0 442.8,189.7 442.7,187.8 442.6,186.9 442.4,186.4 442.3,186.7 442.2,185.1 442.1,184.3 441.9,183.9 441.8,182.7 441.7,182.5 441.5,181.7 441.4,180.6 441.3,179.9 441.1,179.3 441.0,179.0 440.9,178.4 440.7,177.1 440.6,176.6 440.5,175.8 440.3,176.1 440.2,174.5 440.1,173.8 439.9,173.4 439.8,172.9 439.7,171.7 439.5,171.0 439.4,171.0 439.2,169.8 439.1,169.1 439.0,168.2 438.8,167.8 438.7,166.9 438.5,166.1 438.4,165.4 438.2,164.8 438.0,164.5 437.9,163.3 437.7,163.2 437.6,162.4 437.4,161.5 437.2,160.9 437.1,160.0 436.9,159.3 436.7,158.7 436.5,158.0 436.3,157.8 436.1,156.6 435.9,156.8 435.7,155.2 435.5,156.3 435.3,154.1 435.1,153.2 434.9,152.6 434.7,151.9 434.5,151.6 434.2,150.7 434.0,150.3 433.8,149.3 433.6,149.1 433.3,148.2 433.1,147.6 432.9,146.8 432.6,146.4 432.4,145.9 432.2,145.1 432.0,144.0 431.8,143.6 431.5,142.8 431.3,142.1 431.1,141.3 430.9,140.8 430.7,140.1 430.4,140.1 430.2,139.2 430.0,138.2 429.7,137.6 429.5,136.8 429.3,136.3 429.0,135.4 428.8,134.7 428.5,134.1 428.3,133.3 428.0,133.2 427.8,132.1 427.5,131.6 427.3,131.2 427.0,130.2 426.7,129.5 426.5,129.3 426.2,128.7 425.9,127.6 425.6,126.9 425.3,126.5 425.0,126.2 424.6,125.3 424.3,125.4 423.9,124.5 423.5,123.7 423.1,123.4 422.7,122.6 422.3,121.6 421.8,121.1 421.3,120.9 420.8,120.2 420.1,120.6 419.4,120.5 418.7,120.8 418.0,120.4 417.3,120.4 416.6,120.1 415.9,120.8 415.2,120.9 414.5,120.6 413.8,120.7 413.1,120.5 412.4,120.6 411.7,120.5 411.0,121.4 410.3,121.0 409.6,120.9 408.9,121.0 408.2,121.1 407.5,121.5 406.8,121.0 406.1,121.0 405.4,120.8 404.7,120.8 404.0,121.8 403.3,120.9 402.6,121.3 401.9,121.4 401.2,121.3 400.5,121.4 399.8,121.1 399.1,121.8 398.4,121.6 397.7,121.7 397.0,122.4 396.3,122.0 395.6,122.3 394.9,121.7 394.2,121.6 393.5,121.5 392.8,121.9 392.1,121.5 391.4,121.8 390.7,121.7 390.0,121.8 389.3,122.6 388.6,122.6 387.9,122.1 387.2,121.9 386.5,122.0 385.8,122.4 385.2,122.1 384.5,122.5 383.8,122.5 383.1,123.4 382.4,122.4 381.7,122.9 381.0,123.0 380.3,122.9 379.6,122.9 378.9,122.9 378.2,122.9 377.5,122.7 376.8,123.0 376.1,123.4 375.4,122.8 374.7,123.1 374.0,122.9 373.3,123.3 372.6,123.3 371.9,123.9 371.2,123.8 370.5,124.0 369.8,123.4 369.1,123.6 368.4,124.3 367.7,123.5 367.0,123.9 366.3,123.7 365.6,124.3 364.9,123.7 364.2,123.7 363.5,124.0 362.8,124.4 362.1,124.3 361.4,124.3 360.7,124.1 360.0,124.2 359.3,124.9 358.7,125.0 358.0,124.5 357.3,124.7 356.6,124.6 355.9,125.4 355.2,125.1 354.5,124.8 353.8,124.8 353.1,125.4 352.4,125.8 351.7,125.8 351.0,125.3 350.3,125.5 349.6,125.4 348.9,126.0 348.2,125.5 347.5,125.7 346.8,125.8 346.1,125.8 345.4,126.3 344.7,126.3 344.0,125.8 343.3,126.1 342.6,126.3 342.0,126.6 341.3,126.5 340.6,126.9 339.9,126.5 339.2,126.9 338.5,127.4 337.8,127.2 337.1,127.4 336.4,127.2 335.7,127.2 335.0,127.2 334.3,127.3 333.6,127.6 333.0,128.7 332.3,128.1 331.6,128.4 330.9,127.8 330.2,129.3 329.5,128.4 328.8,128.7 328.1,128.5 327.4,128.5 326.7,128.9 326.1,129.4 325.4,128.9 324.7,129.2 324.0,129.5 323.3,129.3 322.6,129.6 321.9,129.6 321.2,129.6 320.5,130.0 319.9,129.8 319.2,130.4 318.5,130.6 317.8,130.8 317.1,130.9 316.4,130.9 315.7,130.6 315.0,130.7 314.4,130.9 313.7,131.2 313.0,131.6 312.3,131.2 311.6,132.1 310.9,131.8 310.2,131.6 309.5,131.9 308.9,132.8 308.2,132.1 307.5,132.2 306.8,133.4 306.1,132.8 305.4,133.6 304.7,133.3 304.1,133.1 303.4,133.2 302.7,134.1 302.0,133.4 301.3,133.9 300.6,133.6 299.9,134.1 299.2,134.6 298.6,134.4 297.9,134.6 297.2,134.3 296.5,134.6 295.8,135.2 295.1,135.3 294.4,135.7 293.8,135.6 293.1,135.6 292.4,135.6 291.7,135.4 291.1,135.7 290.4,136.6 289.7,135.9 289.0,136.6 288.3,136.5 287.6,136.4 286.9,136.3 286.2,136.7 285.5,137.2 284.8,136.7 284.1,136.7 283.4,137.2 282.7,136.7 282.0,137.1 281.3,137.6 280.6,136.7 279.9,137.5 279.2,137.0 278.5,137.1 277.8,137.4 277.2,137.5 276.5,138.1 275.8,137.6 275.1,137.9 274.4,138.0 273.8,138.4 273.1,138.8 272.5,138.6 271.8,139.2 271.2,139.2 270.6,140.5 270.0,140.0 269.4,140.2 268.8,140.9 268.2,142.1 267.6,141.6 267.1,141.9 266.5,142.9 266.0,143.2 265.5,143.8 265.0,144.1 264.5,144.8 264.0,144.8 263.4,145.0 262.9,145.6 262.4,146.2 261.8,146.9 261.2,146.8 260.6,147.8 259.9,147.6 259.2,147.6 258.5,147.8 257.8,146.8 257.2,146.9 256.6,146.7 256.0,146.3 255.3,145.6 254.7,145.5 254.0,145.5 253.3,145.1 252.6,145.9 252.0,145.8 251.5,146.3 251.1,147.2 250.7,147.3 250.3,147.9 250.0,148.7 249.7,149.4 249.4,149.7 249.2,150.4 249.0,151.1 248.8,152.0 248.6,152.9 248.5,153.0 248.3,154.0 248.2,155.4 248.1,155.0 247.9,157.0 247.8,156.4 247.7,157.2 247.6,158.4 247.5,158.5 247.4,159.4 247.3,160.5 247.2,161.4 247.1,161.5 247.1,162.3 247.0,162.6 246.9,163.9 246.8,164.3 246.7,165.6 246.6,165.8 246.5,166.1 246.5,167.0 246.4,167.9 246.3,168.5 246.2,168.9 246.1,169.9 246.0,170.7 245.9,171.6 245.9,172.3 245.8,172.4 245.7,173.8 245.6,174.0 245.5,174.7 245.4,175.7 245.3,176.2 245.2,177.2 245.1,178.0 245.0,178.3 244.9,179.1 244.8,179.9 244.8,180.5 244.7,180.7 244.6,181.5 244.5,182.4 244.4,183.5 244.4,183.6 244.3,184.3 244.2,184.9 244.1,185.6 244.1,186.6 244.0,187.5 243.9,187.7 243.9,188.8 243.8,189.3 243.8,189.9 243.7,190.5 243.7,192.1 243.6,192.6 243.5,192.8 243.5,193.6 243.4,194.1 243.4,195.0 243.3,195.5 243.3,196.1 243.3,196.8 243.2,198.1 243.2,198.3 243.1,199.4 243.1,200.1 243.0,200.7 243.0,200.9 242.9,201.8 242.9,203.2 242.9,203.5 242.8,204.0 242.8,204.8 242.7,206.1 242.7,205.8 242.7,207.2 242.6,207.3 242.6,208.0 242.5,208.6 242.5,209.4 242.5,211.1 242.4,210.7 242.4,211.6 242.4,212.7 242.3,213.8 242.3,213.8 242.2,214.2 242.2,215.2 242.2,215.6 242.1,216.5 242.1,217.4 242.1,217.8 242.0,218.5 242.0,219.1 241.9,219.8 241.9,221.0 241.9,221.2 241.8,221.9 241.8,222.6 241.8,223.4 241.7,224.4 241.7,224.9 241.7,226.1 241.6,226.6 241.6,226.9 241.5,228.2 241.5,228.8 241.5,229.1 241.4,229.8 241.4,230.6 241.3,232.1 241.3,231.8 241.3,232.4 241.2,233.6 241.2,233.9 241.1,234.7 241.1,235.5 241.1,236.7 241.0,236.9 241.0,237.4 241.0,238.4 240.9,239.1 240.9,239.4 240.8,241.1 240.8,240.9 240.8,241.8 240.7,242.8 240.7,243.0 240.7,244.5 240.6,244.4 240.6,245.0 240.5,246.1 240.5,246.4 240.5,247.9 240.4,248.0 240.4,248.9 240.4,249.2 240.3,249.9 240.3,250.7 240.3,251.5 240.2,252.3 240.2,253.0 240.1,253.9 240.1,254.0 240.1,255.3 240.0,255.6 240.0,256.6 239.9,257.4 239.9,257.7 239.9,259.0 239.8,259.4 239.8,260.1 239.8,260.3 239.7,261.5 239.7,261.9 239.6,263.0 239.6,263.8 239.5,264.1 239.5,264.6 239.5,265.5 239.4,266.5 239.4,266.8 239.3,267.4 239.3,268.2 239.2,268.9 239.2,270.4 239.1,270.4 239.1,271.3 239.0,271.5 239.0,272.3 238.9,273.2 238.9,273.9 238.8,274.9 238.8,275.5 238.7,276.3 238.6,276.7 238.6,277.5 238.5,277.9 238.4,279.6 238.4,279.2 238.3,280.0 238.2,281.5 238.1,281.4 238.0,282.3 237.9,283.2 237.9,283.7 237.8,284.5 237.7,284.9 237.6,286.1 237.5,286.2 237.3,286.9 237.2,287.9 237.1,289.1 237.0,289.6 236.8,289.6 236.7,290.6 236.6,291.4 236.4,292.2 236.3,292.7 236.1,294.1 236.0,293.8 235.8,294.5 235.7,295.6 235.5,296.4 235.3,297.1 235.2,297.2 235.0,298.1 234.8,298.9 234.6,300.2 234.5,300.3 234.3,300.9 234.1,301.6 233.9,302.1 233.7,303.0 233.5,303.4 233.3,304.3 233.1,304.7 232.9,305.9 232.8,306.2 232.6,307.1 232.4,307.2 232.2,308.0 232.0,308.9 231.9,309.4 231.7,310.4 231.5,310.6 231.2,311.7 230.9,312.2 230.6,312.7 230.3,313.8 229.9,313.8 229.5,314.8 229.0,315.0 228.6,316.2 228.0,316.1 227.3,315.9 226.6,315.6 225.9,316.7 225.2,315.9 224.5,316.0 223.8,316.3 223.1,316.2 222.4,315.6 221.7,316.0 221.0,316.1 220.3,316.0 219.6,316.1 218.9,316.1 218.2,316.4 217.5,315.9 216.8,316.4 216.1,316.1 215.4,316.1 214.7,315.7 214.0,315.9 213.3,316.0 212.6,316.7 211.9,315.9 211.2,316.0 210.5,316.0 209.8,315.7 209.1,315.9 208.4,316.5 207.7,316.0 207.0,315.9 206.3,315.9 205.6,316.7 204.9,315.6 204.2,315.9 203.5,315.9 202.8,315.6 202.1,316.7 201.4,315.7 200.7,315.7 200.0,315.9 199.3,316.2 198.6,315.9 197.9,315.7 197.2,316.0 196.5,315.6 195.8,315.6 195.1,316.3 194.4,315.6 193.7,316.2 193.0,316.2 192.3,315.6 191.6,316.1 190.9,315.7 190.2,316.1 189.5,315.7 188.8,315.9 188.1,315.8 187.4,316.2 186.7,316.6 186.0,315.8 185.3,316.0 184.6,315.9 183.9,316.0 183.2,315.8 182.5,315.8 181.8,315.6 181.1,316.1 180.4,316.2 179.7,316.1 179.0,315.8 178.3,315.9 177.6,316.3 176.9,315.8 176.2,316.6 175.5,315.6 174.8,315.8 174.1,315.7 173.4,315.8 172.7,316.2 172.0,316.4 171.3,316.3 170.6,315.9 169.9,315.8 169.2,316.0 168.5,316.3 167.8,316.1 167.1,316.1 166.4,315.6 165.7,316.0 165.0,315.8 164.3,315.7 163.6,315.6 162.9,315.7 162.2,316.0 161.5,316.2 160.8,315.8 160.1,315.7 159.4,315.7 158.7,315.8 158.0,315.7 157.3,316.0 156.6,316.6 155.9,315.7 155.2,315.6 154.5,315.6 153.8,316.3 153.1,315.9 152.4,315.7 151.7,316.3 151.0,315.7 150.3,316.6 149.6,315.6 148.9,315.9 148.2,315.6 147.5,315.8 146.8,315.8 146.1,315.8 145.4,316.6 144.7,315.8 144.0,316.0 143.3,316.1 142.6,315.6 141.9,315.8 141.2,316.1 140.5,315.7 139.8,316.0 139.1,316.0 138.4,315.7 137.7,316.0 137.0,315.6 136.3,315.9 135.6,315.7 134.9,316.4 134.2,315.6 133.5,315.9 132.8,315.8 132.1,315.6 131.4,316.0 130.7,315.7 130.0,316.0 129.3,316.0 128.6,316.1 127.9,316.1 127.2,316.0 126.5,316.7 125.8,316.1 125.1,315.7 124.4,315.7 123.7,315.7 123.0,316.1 122.3,315.8 121.6,315.9 120.9,316.2 120.2,315.7 119.5,316.2 118.8,315.9 118.1,316.1 117.4,315.6 116.7,315.6 116.0,315.7 115.3,316.4 114.6,315.8 113.9,315.7 113.2,315.6 112.5,316.6 111.8,315.6 111.1,315.6 110.4,316.0 109.7,315.8 109.0,315.9 108.3,315.7 107.6,315.9 106.9,316.6 106.2,315.6 105.5,315.9 104.8,316.2 104.1,315.7 103.4,315.8 102.7,316.0 102.0,316.2 101.3,316.4 100.6,315.6 99.9,315.9 99.2,315.6 98.5,315.9 97.8,315.9 97.1,315.8 96.4,316.1 95.7,315.6 95.0,316.5 94.3,315.8 93.6,315.6 92.9,315.6 92.2,315.6 91.5,316.0 90.8,316.2 90.1,315.6 89.4,316.0 88.7,315.7 88.0,316.3 87.3,315.6 86.6,316.3 85.9,316.1 85.2,316.1 84.5,316.3 83.8,315.8 83.1,316.1 82.4,315.6 81.7,316.9 81.0,315.6 80.3,315.9 79.6,316.2 78.9,316.0 78.2,316.0 77.5,316.3 76.8,315.8 76.1,315.6 75.4,315.8 74.7,315.7 74.0,316.3 73.3,315.6 72.6,316.2 71.9,316.3 71.2,315.6 70.5,315.7 69.8,316.1 69.1,316.5 68.4,317.0 67.7,315.9 67.0,316.4 66.3,315.8 65.6,315.8 64.9,315.6 64.2,315.7 63.5,315.9 62.8,316.1 62.1,316.6 61.4,316.3 60.7,315.8 60.0,315.6 59.3,315.6 58.6,315.9 57.9,315.9 57.2,316.0 56.5,315.8 55.8,315.9 55.1,316.2 54.4,315.9 53.7,315.8 53.0,316.4 52.3,316.1 51.6,316.2 50.9,316.9 50.2,315.9 49.5,315.7 48.8,316.3 48.1,315.9 47.4,316.4 46.7,315.8 46.0,316.4 45.3,316.2 44.6,315.6 43.9,315.7 43.2,315.9 42.5,315.8 41.8,315.7 41.1,316.1 40.4,316.0 39.7,316.0 39.0,315.6 38.3,315.6 37.6,316.0 36.9,316.9 36.2,316.1 35.5,315.6 34.8,315.7 34.1,316.0 33.4,315.8 32.7,315.9 32.0,315.9 31.3,315.8 30.6,315.8 29.9,315.7 29.2,316.1 28.5,315.6 27.8,315.8 27.1,316.0 26.4,316.2 25.7,316.2 25.0,316.5 24.3,315.7 23.6,315.9 22.9,316.7 22.2,315.6 21.5,316.1 20.8,315.7 20.1,315.8 19.4,315.9 18.7,316.3 18.0,315.6 17.3,315.7 16.6,315.6 15.9,316.1 15.2,316.3 14.5,316.9 13.8,316.9 13.1,315.9 12.4,316.3 11.7,316.3 11.0,316.3Z" fill="#f8ee14" stroke="none"/><path d="M11.0,313.8 12.5,313.8 14.0,313.8 15.5,313.8 17.0,313.8 18.5,313.8 20.0,313.8 21.5,313.8 23.0,313.8 24.5,313.8 26.0,313.8 27.5,313.8 29.0,313.8 30.5,313.8 32.0,313.8 33.5,313.8 35.0,313.8 36.5,313.8 38.0,313.8 39.5,313.8 41.0,313.8 42.5,313.8 44.0,313.8 45.5,313.8 47.0,313.8 48.5,313.8 50.0,313.8 51.5,313.8 53.0,313.8 54.5,313.8 56.0,313.8 57.5,313.8 59.0,313.8 60.5,313.8 62.0,313.8 63.5,313.8 65.0,313.8 66.5,313.8 68.0,313.8 69.5,313.8 71.0,313.8 72.5,313.8 74.0,313.8 75.5,313.8 77.0,313.8 78.5,313.8 80.0,313.8 81.5,313.8 83.0,313.8 84.5,313.8 86.0,313.8 87.5,313.8 89.0,313.8 90.5,313.8 92.0,313.8 93.5,313.8 95.0,313.8 96.5,313.8 98.0,313.8 99.5,313.8 101.0,313.8 102.5,313.8 104.0,313.8 105.5,313.8 107.0,313.8 108.5,313.8 110.0,313.8 111.5,313.8 113.0,313.8 114.5,313.8 116.0,313.8 117.5,313.8 119.0,313.8 120.5,313.8 122.0,313.8 123.5,313.8 125.0,313.8 126.5,313.8 128.0,313.8 129.5,313.8 131.0,313.8 132.5,313.8 134.0,313.8 135.5,313.8 137.0,313.8 138.5,313.8 140.0,313.8 141.5,313.8 143.0,313.8 144.5,313.8 146.0,313.8 147.5,313.8 149.0,313.8 150.5,313.8 152.0,313.8 153.5,313.8 155.0,313.8 156.5,313.8 158.0,313.8 159.5,313.8 161.0,313.8 162.5,313.8 164.0,313.8 165.5,313.8 167.0,313.8 168.5,313.8 170.0,313.8 171.5,313.8 173.0,313.8 174.5,313.8 176.0,313.8 177.5,313.8 179.0,313.8 180.5,313.8 182.0,313.8 183.5,313.8 185.0,313.8 186.5,313.8 188.0,313.8 189.5,313.8 191.0,313.8 192.5,313.8 194.0,313.8 195.5,313.8 197.0,313.8 198.5,313.8 200.0,313.8 201.5,313.8 203.0,313.8 204.5,313.8 206.0,313.8 207.5,313.8 209.0,313.8 210.5,313.8 212.0,313.8 213.5,313.8 215.0,313.8 216.5,313.8 218.0,313.8 219.5,313.8 221.0,313.8 222.5,313.8 224.0,313.8 225.5,313.8 227.0,313.8 228.4,313.7 229.4,312.6 230.3,311.3 231.0,310.0 231.5,308.6 231.9,307.2 232.3,305.7 232.7,304.3 233.1,302.8 233.5,301.4 233.9,299.9 234.3,298.5 234.7,297.0 235.1,295.6 235.4,294.1 235.8,292.7 236.1,291.2 236.4,289.8 236.7,288.3 237.0,286.8 237.3,285.3 237.5,283.9 237.7,282.4 237.9,280.9 238.1,279.4 238.3,277.9 238.5,276.4 238.6,274.9 238.8,273.4 238.9,271.9 239.0,270.4 239.1,268.9 239.2,267.4 239.3,265.9 239.4,264.4 239.5,263.0 239.6,261.5 239.7,260.0 239.8,258.5 239.8,257.0 239.9,255.5 240.0,254.0 240.1,252.5 240.2,251.0 240.3,249.5 240.3,248.0 240.4,246.5 240.5,245.0 240.6,243.5 240.6,242.0 240.7,240.5 240.8,239.0 240.9,237.5 241.0,236.0 241.1,234.5 241.1,233.0 241.2,231.5 241.3,230.0 241.4,228.5 241.5,227.0 241.5,225.5 241.6,224.0 241.7,222.5 241.8,221.0 241.9,219.5 241.9,218.0 242.0,216.5 242.1,215.0 242.2,213.5 242.3,212.0 242.3,210.5 242.4,209.0 242.5,207.5 242.6,206.0 242.7,204.5 242.8,203.0 242.8,201.5 242.9,200.0 243.0,198.5 243.1,197.1 243.2,195.6 243.3,194.1 243.4,192.6 243.5,191.1 243.6,189.6 243.8,188.1 243.9,186.6 244.0,185.1 244.2,183.6 244.3,182.1 244.5,180.6 244.7,179.1 244.8,177.6 245.0,176.1 245.2,174.7 245.4,173.2 245.6,171.7 245.8,170.2 246.0,168.7 246.2,167.2 246.4,165.7 246.6,164.2 246.7,162.8 246.9,161.3 247.1,159.8 247.3,158.3 247.5,156.8 247.7,155.3 248.0,153.8 248.2,152.4 248.5,150.9 248.9,149.4 249.4,148.0 249.9,146.6 250.7,145.3 251.6,144.1 252.8,143.3 254.3,143.5 255.7,143.8 257.0,144.5 258.4,145.2 259.9,145.4 261.3,144.9 262.5,144.0 263.7,143.1 264.8,142.0 265.9,141.0 267.0,140.0 268.2,139.1 269.5,138.3 270.8,137.6 272.1,136.9 273.5,136.4 274.9,135.9 276.4,135.5 277.8,135.2 279.3,135.0 280.8,134.9 282.3,134.9 283.8,134.8 285.3,134.7 286.8,134.6 288.3,134.4 289.8,134.1 291.2,133.8 292.7,133.4 294.2,133.1 295.6,132.7 297.1,132.4 298.6,132.1 300.0,131.8 301.5,131.6 303.0,131.3 304.4,131.0 305.9,130.7 307.4,130.4 308.9,130.1 310.3,129.8 311.8,129.5 313.3,129.3 314.8,129.0 316.2,128.7 317.7,128.4 319.2,128.1 320.6,127.9 322.1,127.6 323.6,127.3 325.1,127.1 326.6,126.8 328.0,126.5 329.5,126.3 331.0,126.0 332.5,125.8 333.9,125.5 335.4,125.3 336.9,125.1 338.4,124.8 339.9,124.6 341.4,124.4 342.8,124.2 344.3,124.0 345.8,123.8 347.3,123.7 348.8,123.5 350.3,123.3 351.8,123.2 353.3,123.0 354.8,122.9 356.3,122.7 357.8,122.6 359.2,122.4 360.7,122.3 362.2,122.1 363.7,122.0 365.2,121.9 366.7,121.7 368.2,121.6 369.7,121.5 371.2,121.4 372.7,121.2 374.2,121.1 375.7,121.0 377.2,120.8 378.7,120.7 380.2,120.6 381.7,120.5 383.2,120.3 384.7,120.2 386.1,120.1 387.6,120.0 389.1,119.9 390.6,119.8 392.1,119.7 393.6,119.6 395.1,119.6 396.6,119.5 398.1,119.4 399.6,119.3 401.1,119.2 402.6,119.1 404.1,119.0 405.6,118.9 407.1,118.9 408.6,118.8 410.1,118.7 411.6,118.6 413.1,118.5 414.6,118.4 416.1,118.4 417.6,118.3 419.1,118.3 420.6,118.2 421.7,119.2 422.7,120.3 423.6,121.5 424.4,122.8 425.1,124.1 425.8,125.5 426.4,126.8 427.0,128.2 427.5,129.6 428.1,131.0 428.6,132.4 429.1,133.8 429.6,135.2 430.1,136.6 430.6,138.1 431.1,139.5 431.6,140.9 432.0,142.3 432.5,143.8 433.0,145.2 433.5,146.6 434.0,148.0 434.5,149.4 434.9,150.8 435.4,152.3 435.8,153.7 436.2,155.2 436.6,156.6 437.0,158.1 437.4,159.5 437.8,161.0 438.1,162.4 438.4,163.9 438.7,165.4 439.1,166.8 439.4,168.3 439.7,169.8 440.0,171.2 440.2,172.7 440.5,174.2 440.8,175.6 441.1,177.1 441.4,178.6 441.7,180.1 441.9,181.5 442.2,183.0 442.5,184.5 442.8,186.0 443.1,187.4 443.4,188.9 443.7,190.4 444.0,191.8 444.3,193.3 444.6,194.8 444.9,196.2 445.2,197.7 445.6,199.2 445.9,200.6 446.3,202.1 446.7,203.5 447.1,205.0 447.6,206.4 448.0,207.8 448.5,209.2 449.0,210.7 449.5,212.1 450.0,213.5 450.4,214.9 450.9,216.3 451.5,217.7 452.0,219.2 452.5,220.6 453.1,221.9 453.6,223.3 454.2,224.7 454.7,226.1 455.2,227.5 455.8,228.9 456.3,230.4 456.8,231.8 457.3,233.2 457.8,234.6 458.4,236.0 458.9,237.4 459.5,238.8 460.1,240.1 460.7,241.5 461.3,242.9 461.9,244.2 462.6,245.6 463.2,246.9 463.9,248.3 464.6,249.6 465.3,251.0 466.0,252.3 466.7,253.6 467.4,254.9 468.1,256.3 468.8,257.6 469.5,258.9 470.2,260.2 470.9,261.5 471.7,262.8 472.5,264.1 473.3,265.3 474.2,266.5 475.2,267.7 476.1,268.9 477.1,270.0 478.1,271.1 479.1,272.2 480.2,273.3 481.3,274.3 482.3,275.4 483.5,276.4 484.6,277.4 485.7,278.3 486.9,279.3 488.1,280.2 489.2,281.1 490.5,282.0 491.7,282.9 492.9,283.7 494.2,284.6 495.5,285.3 496.8,286.1 498.1,286.8 499.4,287.5 500.8,288.1 502.1,288.7 503.5,289.3 504.9,289.9 506.3,290.4 507.7,290.9 509.1,291.4 510.5,291.9 512.0,292.4 513.4,292.9 514.8,293.3 516.3,293.8 517.7,294.2 519.1,294.6 520.6,295.1 522.0,295.5 523.4,295.9 524.9,296.3 526.3,296.7 527.8,297.1 529.2,297.4 530.7,297.8 532.2,298.1 533.6,298.5 535.1,298.8 536.5,299.2 538.0,299.5 539.5,299.9 540.9,300.2 542.4,300.6 543.8,301.0 545.3,301.4 546.7,301.9 548.1,302.3 549.6,302.7 551.0,303.1 552.5,303.4 553.9,303.7 555.4,304.0 556.9,304.2 558.4,304.4 559.9,304.6 561.4,304.7 562.9,304.9 564.4,305.1 565.9,305.2 567.3,305.3 568.8,305.5 570.3,305.6 571.8,305.7 573.3,305.8 574.8,305.9 576.3,306.0 577.8,306.2 579.3,306.3 580.8,306.4 582.3,306.5 583.8,306.6 585.3,306.7 586.8,306.8 588.3,306.9 589.8,307.0 591.3,307.1 592.8,307.2 594.3,307.3 595.8,307.4 597.3,307.5 598.8,307.6 600.3,307.7 601.8,307.8 603.3,307.9 604.8,308.0 606.3,308.1 607.7,308.2 609.2,308.3 610.7,308.3 612.2,308.4 613.7,308.5 615.2,308.6 616.7,308.7 618.2,308.8 619.7,308.9 621.2,309.0 622.7,309.1 624.2,309.2 625.7,309.3 627.2,309.4 628.7,309.5 630.2,309.6 631.7,309.7 633.2,309.8 634.7,309.9 636.2,310.0 637.7,310.1 639.2,310.1 640.7,310.2 642.2,310.3 643.7,310.4 645.2,310.5 646.7,310.6 648.2,310.7 649.7,310.8 651.2,310.8 652.7,310.9 654.2,311.0 655.7,311.1 657.2,311.2 658.7,311.2 660.2,311.3 661.7,311.4 663.1,311.5 664.6,311.5 666.1,311.6 667.6,311.7 669.1,311.8 670.6,311.8 672.1,311.9 673.6,312.0 675.1,312.0 676.6,312.1 678.1,312.2 679.6,312.3 681.1,312.3 682.6,312.4 684.1,312.5 685.6,312.5 687.1,312.6 688.6,312.6 690.1,312.7 691.6,312.8 693.1,312.8 694.6,312.9 696.1,312.9 697.6,313.0 699.1,313.0 700.6,313.1 702.1,313.2 703.6,313.2 705.1,313.3 706.6,313.3 708.1,313.3 709.6,313.4 711.1,313.4 712.6,313.5 714.1,313.5 715.6,313.5 717.1,313.6 718.6,313.6 720.1,313.6 721.6,313.6 723.1,313.7 724.6,313.7 726.1,313.7 727.6,313.7 729.1,313.8 730.6,313.8 732.1,313.8 733.6,313.8 735.1,313.8 736.6,313.8 738.1,313.8 739.6,313.9 741.1,313.9 742.6,313.9 744.1,313.9 745.6,313.9 747.1,313.9 748.6,313.9 750.1,313.9 751.6,314.0 753.1,314.0 754.6,314.0" stroke="#f8ee14" stroke-width="1.1" stroke-opacity="0.8"/>
<path d="M11.0,311.9 11.7,311.6 12.4,311.6 13.1,311.5 13.8,311.9 14.5,311.6 15.2,311.5 15.9,311.9 16.6,312.0 17.3,311.4 18.0,311.5 18.7,311.9 19.4,311.3 20.1,312.0 20.8,311.7 21.5,311.7 22.2,312.0 22.9,311.7 23.6,311.6 24.3,311.7 25.0,311.6 25.7,312.0 26.4,311.6 27.1,311.8 27.8,311.8 28.5,311.5 29.2,311.8 29.9,311.6 30.6,311.0 31.3,311.4 32.0,311.9 32.7,311.9 33.4,311.9 34.1,312.0 34.8,311.3 35.5,311.6 36.2,311.6 36.9,311.7 37.6,311.4 38.3,311.9 39.0,311.9 39.7,311.5 40.4,311.9 41.1,311.9 41.8,311.8 42.5,311.1 43.2,311.6 43.9,311.4 44.6,311.8 45.3,311.7 46.0,311.7 46.7,312.0 47.4,312.0 48.1,311.2 48.8,312.0 49.5,311.3 50.2,311.9 50.9,311.9 51.6,312.0 52.3,311.0 53.0,311.8 53.7,311.8 54.4,312.0 55.1,312.0 55.8,311.6 56.5,311.5 57.2,311.4 57.9,311.5 58.6,311.8 59.3,311.6 60.0,311.8 60.7,311.4 61.4,311.5 62.1,311.1 62.8,311.9 63.5,311.3 64.2,311.9 64.9,311.9 65.6,311.1 66.3,310.9 67.0,311.2 67.7,311.9 68.4,312.0 69.1,311.9 69.8,311.9 70.5,311.7 71.2,311.0 71.9,311.9 72.6,311.6 73.3,311.4 74.0,311.8 74.7,312.0 75.4,311.9 76.1,311.3 76.8,311.8 77.5,311.0 78.2,311.5 78.9,311.2 79.6,311.9 80.3,311.8 81.0,311.8 81.7,311.5 82.4,311.6 83.1,311.7 83.8,311.5 84.5,311.7 85.2,312.0 85.9,311.7 86.6,311.7 87.3,312.0 88.0,311.6 88.7,312.0 89.4,311.6 90.1,311.3 90.8,311.3 91.5,311.7 92.2,311.4 92.9,311.9 93.6,312.0 94.3,311.8 95.0,311.8 95.7,311.4 96.4,310.8 97.1,311.6 97.8,310.9 98.5,312.0 99.2,312.0 99.9,311.7 100.6,311.1 101.3,311.5 102.0,312.0 102.7,312.0 103.4,311.8 104.1,312.0 104.8,311.7 105.5,311.8 106.2,312.0 106.9,311.7 107.6,311.7 108.3,312.0 109.0,312.0 109.7,311.5 110.4,311.3 111.1,312.0 111.8,311.4 112.5,311.5 113.2,311.7 113.9,311.8 114.6,312.0 115.3,311.9 116.0,312.0 116.7,311.8 117.4,312.0 118.1,311.0 118.8,310.9 119.5,312.0 120.2,311.8 120.9,311.5 121.6,311.4 122.3,311.0 123.0,311.9 123.7,311.0 124.4,311.8 125.1,312.0 125.8,311.8 126.5,311.7 127.2,311.5 127.9,311.8 128.6,312.0 129.3,312.0 130.0,311.4 130.7,311.6 131.4,311.5 132.1,311.7 132.8,311.9 133.5,311.7 134.2,311.9 134.9,311.6 135.6,311.9 136.3,311.8 137.0,311.6 137.7,312.0 138.4,311.0 139.1,312.0 139.8,310.5 140.5,311.5 141.2,311.8 141.9,311.8 142.6,310.6 143.3,312.0 144.0,312.0 144.7,311.1 145.4,311.4 146.1,311.1 146.8,311.9 147.5,311.7 148.2,310.8 148.9,312.0 149.6,311.9 150.3,311.7 151.0,312.0 151.7,311.5 152.4,311.6 153.1,311.7 153.8,311.8 154.5,311.5 155.2,311.5 155.9,312.0 156.6,311.4 157.3,311.4 158.0,311.4 158.7,311.7 159.4,312.0 160.1,311.8 160.8,312.0 161.5,312.0 162.2,311.9 162.9,311.7 163.6,311.0 164.3,311.9 165.0,311.7 165.7,311.4 166.4,311.7 167.1,311.7 167.8,311.7 168.5,311.9 169.2,312.0 169.9,311.9 170.6,311.5 171.3,311.4 172.0,311.9 172.7,310.8 173.4,311.7 174.1,312.0 174.8,311.6 175.5,311.9 176.2,311.4 176.9,311.6 177.6,312.0 178.3,311.9 179.0,312.0 179.7,311.5 180.4,311.6 181.1,311.9 181.8,312.0 182.5,311.9 183.2,311.8 183.9,311.6 184.6,312.0 185.3,311.8 186.0,311.9 186.7,311.3 187.4,311.5 188.1,311.7 188.8,311.8 189.5,311.3 190.2,312.0 190.9,311.6 191.6,311.4 192.3,311.6 193.0,311.7 193.7,312.0 194.4,312.0 195.1,311.6 195.8,311.8 196.5,311.5 197.2,311.8 197.9,311.1 198.6,311.9 199.3,311.9 200.0,311.9 200.7,311.7 201.4,311.8 202.1,312.0 202.8,311.2 203.5,311.7 204.2,311.8 204.9,311.9 205.6,311.3 206.3,312.0 207.0,311.6 207.7,311.6 208.4,312.0 209.1,311.2 209.8,311.7 210.5,311.6 211.2,311.9 211.9,311.9 212.6,311.7 213.3,311.6 214.0,311.7 214.7,311.8 215.4,310.7 216.1,312.0 216.8,311.9 217.5,311.7 218.2,311.3 218.9,311.5 219.6,312.0 220.3,311.9 221.0,311.1 221.7,310.8 222.4,311.6 223.1,311.5 223.8,311.7 224.5,311.9 225.2,311.8 225.9,312.0 226.6,311.3 227.3,311.8 228.0,312.0 228.6,311.2 229.0,310.8 229.5,310.5 229.9,310.0 230.3,308.7 230.6,308.7 230.9,308.3 231.2,307.3 231.5,306.9 231.7,305.9 231.9,305.7 232.0,304.9 232.2,303.3 232.4,303.7 232.6,302.7 232.8,302.2 232.9,301.2 233.1,300.3 233.3,300.0 233.5,299.0 233.7,298.4 233.9,298.3 234.1,297.1 234.3,296.4 234.5,296.2 234.6,295.0 234.8,294.6 235.0,293.8 235.2,293.5 235.3,292.0 235.5,292.1 235.7,291.2 235.8,290.8 236.0,289.9 236.1,289.0 236.3,288.1 236.4,287.8 236.6,286.8 236.7,286.2 236.8,285.8 237.0,284.7 237.1,284.5 237.2,283.2 237.3,283.0 237.4,282.4 237.5,281.5 237.7,280.8 237.8,280.0 237.9,279.1 238.0,279.0 238.1,278.4 238.2,277.7 238.2,276.8 238.3,275.6 238.4,275.5 238.5,274.6 238.6,273.6 238.7,272.9 238.8,272.7 238.8,271.3 238.9,271.2 239.0,270.5 239.0,270.1 239.1,268.6 239.2,268.0 239.3,267.7 239.3,267.0 239.4,266.0 239.4,265.9 239.5,264.7 239.6,264.2 239.6,263.1 239.7,262.6 239.8,262.1 239.8,261.2 239.9,260.4 239.9,259.7 240.0,259.5 240.1,258.4 240.1,258.2 240.2,257.2 240.2,256.1 240.3,256.0 240.3,255.2 240.4,254.6 240.4,253.1 240.5,253.0 240.6,252.1 240.6,251.8 240.7,251.2 240.7,250.2 240.8,249.7 240.8,248.4 240.9,248.0 240.9,247.3 241.0,247.0 241.1,246.0 241.1,245.5 241.2,244.7 241.2,243.4 241.3,242.7 241.3,242.9 241.4,242.2 241.4,241.5 241.5,240.7 241.5,239.9 241.6,238.9 241.7,238.5 241.7,237.9 241.8,237.3 241.8,236.6 241.9,235.8 241.9,234.7 242.0,234.5 242.0,233.7 242.1,233.1 242.2,231.9 242.2,231.3 242.3,230.5 242.3,230.2 242.4,229.3 242.4,228.4 242.5,228.1 242.6,227.3 242.6,226.0 242.7,225.3 242.7,225.4 242.8,224.7 242.8,223.5 242.9,223.3 243.0,222.4 243.0,220.9 243.1,220.7 243.1,220.5 243.2,219.4 243.2,218.6 243.3,218.4 243.3,217.6 243.4,215.9 243.5,215.9 243.5,215.7 243.6,214.7 243.6,214.2 243.7,213.0 243.7,212.7 243.8,212.1 243.8,211.3 243.9,210.2 244.0,209.6 244.0,209.2 244.1,208.5 244.1,207.5 244.2,207.2 244.3,206.5 244.3,205.7 244.4,205.2 244.5,204.1 244.5,203.1 244.6,202.1 244.7,202.2 244.8,201.5 244.8,200.9 244.9,199.7 245.0,199.4 245.1,198.9 245.2,198.2 245.3,197.5 245.4,196.4 245.5,195.9 245.7,195.1 245.8,194.5 245.9,194.1 246.1,192.9 246.3,192.8 246.4,191.6 246.6,191.0 246.8,190.4 247.1,190.0 247.3,189.3 247.6,188.8 247.9,187.7 248.1,186.5 248.4,186.7 248.6,185.4 248.9,184.9 249.2,183.9 249.4,183.8 249.7,182.8 250.0,182.2 250.4,181.7 250.7,181.7 251.1,180.9 251.4,179.7 251.9,179.8 252.3,179.1 252.8,178.9 253.4,178.1 254.0,178.2 254.7,178.2 255.4,177.9 256.1,177.8 256.8,176.9 257.4,177.4 258.1,177.1 258.7,176.6 259.3,176.2 259.9,175.5 260.5,175.3 261.1,175.1 261.7,175.1 262.3,174.6 262.9,173.4 263.4,172.8 264.0,173.3 264.5,172.7 265.0,172.0 265.5,171.7 266.0,171.3 266.4,170.2 266.9,170.1 267.4,169.2 267.9,169.0 268.3,168.2 268.8,168.3 269.3,166.8 269.8,166.7 270.3,166.9 270.8,165.9 271.3,166.0 271.9,165.4 272.4,164.9 273.0,164.0 273.6,163.6 274.1,162.9 274.7,163.1 275.3,162.3 275.9,162.7 276.5,161.8 277.1,162.2 277.8,161.8 278.4,161.4 279.0,160.9 279.6,160.7 280.2,160.3 280.9,160.1 281.5,159.5 282.1,159.4 282.8,159.2 283.4,158.3 284.0,158.5 284.7,158.4 285.3,157.9 286.0,157.7 286.6,157.1 287.3,157.1 287.9,156.2 288.6,156.2 289.2,156.6 289.9,156.1 290.5,155.6 291.2,155.5 291.8,155.5 292.4,154.4 293.0,153.8 293.5,154.1 294.1,153.5 294.7,153.1 295.3,152.6 295.9,152.4 296.6,152.4 297.2,152.2 297.9,152.0 298.6,151.6 299.2,151.4 299.9,150.5 300.5,150.8 301.2,150.1 301.9,150.6 302.5,150.6 303.2,149.9 303.9,150.0 304.5,149.6 305.2,149.5 305.8,149.3 306.5,148.9 307.2,148.9 307.8,148.3 308.5,148.6 309.2,148.3 309.8,148.0 310.5,147.5 311.2,146.9 311.8,147.3 312.5,147.1 313.2,145.9 313.8,146.8 314.5,146.4 315.2,145.3 315.8,146.1 316.5,145.7 317.2,145.4 317.8,145.4 318.5,144.9 319.2,144.8 319.8,144.2 320.5,144.6 321.2,143.5 321.8,144.3 322.5,143.9 323.2,143.8 323.8,143.1 324.5,143.5 325.2,143.1 325.8,142.5 326.5,142.7 327.2,142.0 327.8,141.9 328.5,141.4 329.2,141.5 329.9,141.0 330.5,141.1 331.2,141.1 331.9,140.9 332.5,140.6 333.2,140.2 333.9,140.6 334.6,140.4 335.2,139.8 335.9,140.0 336.6,139.5 337.2,139.5 337.9,138.9 338.6,138.2 339.3,138.9 339.9,138.8 340.6,138.6 341.3,138.3 342.0,138.0 342.6,137.8 343.3,137.9 344.0,137.7 344.7,137.1 345.3,137.1 346.0,137.1 346.7,136.5 347.4,136.2 348.0,136.5 348.7,135.9 349.4,136.2 350.1,135.4 350.7,135.9 351.4,135.6 352.1,134.9 352.8,135.1 353.4,134.5 354.1,134.9 354.8,134.5 355.5,134.3 356.2,134.5 356.8,134.2 357.5,134.1 358.2,133.7 358.9,133.6 359.6,133.4 360.2,133.4 360.9,132.9 361.6,133.0 362.3,132.5 362.9,132.3 363.6,131.6 364.3,132.4 365.0,131.1 365.7,132.0 366.3,131.4 367.0,131.8 367.7,131.0 368.4,131.4 369.1,131.0 369.8,131.1 370.4,130.9 371.1,129.3 371.8,130.7 372.5,130.3 373.2,130.2 373.9,130.1 374.5,129.9 375.2,129.6 375.9,129.7 376.6,128.9 377.3,129.3 378.0,129.2 378.6,129.1 379.3,128.3 380.0,128.7 380.7,128.5 381.4,128.7 382.1,127.8 382.8,128.4 383.5,128.3 384.1,127.7 384.8,127.8 385.5,127.6 386.2,127.5 386.9,126.6 387.6,127.6 388.3,126.9 389.0,127.4 389.7,127.2 390.4,127.2 391.1,127.4 391.8,127.0 392.5,126.4 393.2,126.9 393.9,126.8 394.6,126.7 395.3,126.7 396.0,126.7 396.7,127.1 397.4,127.0 398.1,126.9 398.8,126.4 399.5,126.5 400.2,126.8 400.9,126.5 401.6,126.3 402.3,126.3 402.9,126.0 403.6,125.8 404.3,125.6 405.0,125.6 405.7,125.7 406.4,125.5 407.1,124.3 407.8,125.1 408.5,125.3 409.1,125.2 409.8,125.0 410.5,124.3 411.2,124.6 411.9,124.4 412.6,123.9 413.3,124.2 414.0,123.9 414.7,123.5 415.3,123.7 416.0,123.0 416.7,123.9 417.4,123.4 418.1,123.2 418.8,122.8 419.5,122.8 420.2,122.6 420.8,123.4 421.2,123.4 421.6,124.5 422.0,124.5 422.3,125.6 422.7,126.0 423.0,126.1 423.3,126.9 423.6,128.0 423.9,128.9 424.1,129.4 424.4,130.2 424.7,130.5 425.0,131.5 425.2,131.0 425.5,132.8 425.8,133.5 426.1,132.9 426.3,134.4 426.6,135.2 426.9,135.8 427.1,136.1 427.4,137.1 427.6,137.1 427.9,138.0 428.2,139.1 428.4,139.4 428.7,140.6 428.9,140.8 429.1,141.7 429.4,142.4 429.6,142.9 429.9,143.6 430.1,144.5 430.4,144.8 430.6,145.5 430.9,146.0 431.2,146.6 431.4,147.4 431.7,148.0 431.9,149.0 432.2,149.4 432.4,149.6 432.7,150.8 432.9,151.4 433.1,152.0 433.4,152.8 433.6,153.5 433.8,153.7 434.0,154.4 434.2,154.6 434.4,156.3 434.6,157.0 434.8,157.3 435.0,158.4 435.2,159.1 435.5,159.3 435.7,160.0 435.9,160.6 436.1,161.5 436.3,161.8 436.5,162.6 436.7,163.3 436.9,164.0 437.1,164.3 437.3,165.6 437.5,165.9 437.8,166.7 438.0,167.8 438.2,168.2 438.4,168.0 438.7,169.6 438.9,170.2 439.1,170.5 439.4,171.5 439.6,172.0 439.9,172.6 440.1,173.7 440.4,174.0 440.6,173.9 440.9,174.9 441.1,176.0 441.4,176.5 441.6,176.6 441.9,177.4 442.2,178.7 442.4,179.3 442.7,180.0 442.9,180.3 443.2,181.3 443.5,181.7 443.7,181.5 444.0,183.4 444.3,183.7 444.6,184.6 444.9,185.3 445.2,185.3 445.5,185.8 445.8,186.7 446.1,187.5 446.4,187.9 446.7,189.0 447.0,189.5 447.3,190.2 447.6,190.5 447.9,191.5 448.2,192.2 448.5,192.8 448.8,193.4 449.1,193.6 449.3,194.8 449.6,194.2 449.9,195.8 450.2,196.8 450.5,196.9 450.8,197.9 451.1,198.6 451.4,199.0 451.7,199.6 452.0,200.4 452.3,200.9 452.6,201.5 452.9,202.2 453.2,202.8 453.5,202.9 453.8,204.1 454.2,204.7 454.5,205.5 454.8,206.1 455.1,206.3 455.4,207.0 455.7,207.9 456.0,208.7 456.3,208.8 456.6,209.2 456.9,210.4 457.2,210.6 457.6,211.8 457.9,211.5 458.2,212.4 458.5,213.7 458.8,214.3 459.1,215.0 459.5,215.3 459.8,216.0 460.1,216.1 460.4,217.0 460.7,217.9 461.1,218.5 461.4,218.5 461.7,219.5 462.0,220.5 462.3,220.3 462.7,221.8 463.0,222.2 463.3,223.1 463.6,223.1 463.9,224.0 464.3,224.4 464.6,225.5 464.9,225.8 465.2,226.3 465.6,227.1 465.9,228.0 466.2,228.4 466.6,229.1 466.9,229.8 467.3,229.5 467.6,231.0 468.0,231.3 468.3,232.1 468.7,232.9 469.1,232.7 469.4,234.1 469.8,234.1 470.2,234.3 470.6,235.3 470.9,236.1 471.3,237.0 471.7,237.3 472.1,238.1 472.5,238.5 472.9,239.0 473.3,239.5 473.7,240.0 474.1,240.2 474.5,241.1 475.0,241.4 475.4,242.1 475.8,242.8 476.3,243.8 476.7,244.3 477.1,244.4 477.6,244.9 478.0,245.8 478.5,245.9 479.0,246.9 479.4,247.6 479.9,247.9 480.4,247.9 480.8,248.8 481.3,249.6 481.8,249.9 482.3,250.5 482.7,251.1 483.2,251.2 483.7,251.5 484.2,252.3 484.7,252.6 485.2,253.5 485.7,254.1 486.2,254.6 486.7,255.1 487.2,255.4 487.7,255.4 488.2,256.6 488.7,256.7 489.2,257.4 489.7,257.2 490.2,258.6 490.7,258.4 491.2,259.3 491.8,259.8 492.3,260.1 492.8,260.8 493.4,260.5 493.9,261.2 494.4,261.4 495.0,262.2 495.5,263.0 496.1,263.1 496.6,263.7 497.2,264.2 497.8,264.0 498.4,265.0 498.9,265.1 499.5,264.7 500.1,266.3 500.7,266.6 501.3,266.5 501.9,267.2 502.5,267.2 503.1,267.7 503.7,268.4 504.3,268.6 504.9,268.9 505.5,269.3 506.2,269.2 506.8,269.7 507.4,269.6 508.0,270.6 508.7,270.6 509.3,271.2 509.9,271.3 510.5,271.7 511.2,271.9 511.8,272.3 512.4,272.2 513.1,272.6 513.7,273.3 514.3,273.8 515.0,273.8 515.6,274.4 516.2,274.2 516.9,274.3 517.5,274.9 518.2,275.0 518.8,275.5 519.4,275.3 520.1,275.4 520.7,276.7 521.4,276.9 522.0,276.9 522.7,277.0 523.3,276.7 524.0,278.0 524.6,277.2 525.3,278.3 525.9,278.7 526.6,278.7 527.3,278.8 527.9,279.5 528.6,279.3 529.2,279.9 529.9,280.1 530.5,280.3 531.2,280.6 531.8,280.9 532.5,280.5 533.1,281.1 533.8,281.6 534.5,280.7 535.1,281.9 535.8,282.1 536.4,282.3 537.1,282.0 537.7,282.7 538.3,283.1 539.0,283.3 539.6,283.9 540.3,284.3 540.9,284.1 541.5,285.0 542.2,285.2 542.8,285.3 543.4,285.1 544.1,285.6 544.7,286.4 545.4,286.0 546.0,286.6 546.6,287.0 547.3,287.2 547.9,287.4 548.6,287.9 549.3,288.2 549.9,288.2 550.6,288.5 551.2,288.6 551.9,289.1 552.6,288.3 553.2,289.1 553.9,289.6 554.6,289.5 555.2,290.2 555.9,290.0 556.6,290.0 557.3,290.5 558.0,290.4 558.6,290.4 559.3,291.3 560.0,290.9 560.7,291.1 561.4,291.6 562.0,291.5 562.7,291.9 563.4,291.8 564.1,291.8 564.8,291.9 565.5,291.9 566.2,292.4 566.9,292.3 567.6,292.8 568.2,292.3 568.9,293.1 569.6,293.1 570.3,293.3 571.0,293.2 571.7,293.4 572.4,293.7 573.1,293.1 573.8,293.9 574.5,293.6 575.2,293.9 575.8,294.2 576.5,294.3 577.2,293.6 577.9,293.8 578.6,294.5 579.3,294.5 580.0,294.7 580.7,294.5 581.4,294.4 582.1,294.9 582.8,295.2 583.5,294.8 584.2,295.0 584.9,295.3 585.5,295.5 586.2,295.6 586.9,295.8 587.6,295.8 588.3,295.7 589.0,296.0 589.7,296.0 590.4,296.1 591.1,296.1 591.8,295.9 592.5,296.3 593.2,296.4 593.9,296.6 594.6,296.6 595.3,295.7 596.0,296.6 596.7,297.0 597.3,297.0 598.0,296.7 598.7,297.3 599.4,296.5 600.1,297.0 600.8,297.3 601.5,297.4 602.2,297.7 602.9,297.4 603.6,297.9 604.3,297.8 605.0,298.1 605.7,297.7 606.4,298.1 607.1,298.0 607.8,297.5 608.5,298.0 609.2,297.5 609.8,298.1 610.5,298.7 611.2,298.5 611.9,298.9 612.6,298.6 613.3,298.8 614.0,299.0 614.7,298.9 615.4,298.8 616.1,298.5 616.8,299.5 617.5,299.3 618.2,299.1 618.9,299.6 619.6,299.8 620.3,299.5 621.0,299.4 621.7,299.7 622.4,299.3 623.0,300.1 623.7,300.2 624.4,300.5 625.1,300.0 625.8,300.4 626.5,300.6 627.2,300.5 627.9,299.7 628.6,300.7 629.3,300.9 630.0,300.4 630.7,300.6 631.4,300.8 632.1,301.2 632.8,301.2 633.5,301.2 634.2,301.5 634.9,300.9 635.6,301.0 636.3,301.5 637.0,301.8 637.7,301.7 638.3,301.7 639.0,301.7 639.7,302.1 640.4,302.0 641.1,302.3 641.8,301.7 642.5,301.9 643.2,302.2 643.9,302.6 644.6,302.4 645.3,302.6 646.0,302.5 646.7,302.5 647.4,302.9 648.1,302.6 648.8,303.1 649.5,302.5 650.2,302.4 650.9,303.3 651.6,302.8 652.3,303.3 653.0,303.3 653.7,302.8 654.4,303.6 655.1,303.1 655.8,303.1 656.5,303.5 657.2,303.9 657.9,304.0 658.5,304.1 659.2,304.0 659.9,303.4 660.6,303.4 661.3,304.3 662.0,304.1 662.7,303.9 663.4,304.3 664.1,304.4 664.8,304.5 665.5,304.4 666.2,304.3 666.9,304.6 667.6,304.9 668.3,304.2 669.0,304.9 669.7,304.6 670.4,304.8 671.1,304.6 671.8,304.2 672.5,304.3 673.2,304.6 673.9,305.1 674.6,305.4 675.3,305.4 676.0,305.5 676.7,305.2 677.4,305.4 678.1,305.1 678.8,305.1 679.5,304.7 680.2,304.7 680.9,305.8 681.6,305.2 682.3,305.7 683.0,305.6 683.7,306.1 684.4,305.7 685.1,305.6 685.8,305.8 686.5,305.9 687.2,306.2 687.9,305.8 688.6,305.7 689.3,306.3 690.0,305.8 690.7,306.3 691.4,305.7 692.1,306.3 692.8,306.5 693.5,305.5 694.2,306.2 694.8,306.3 695.5,306.5 696.2,306.8 696.9,306.9 697.6,306.2 698.3,306.5 699.0,306.8 699.7,306.3 700.4,306.9 701.1,306.9 701.8,307.0 702.5,306.7 703.2,307.1 703.9,306.8 704.6,307.3 705.3,307.1 706.0,307.2 706.7,307.3 707.4,306.7 708.1,307.1 708.8,307.5 709.5,307.1 710.2,306.7 710.9,306.9 711.6,306.7 712.3,307.3 713.0,307.3 713.7,307.6 714.4,307.9 715.1,307.8 715.8,307.6 716.5,307.8 717.2,307.8 717.9,308.0 718.6,307.0 719.3,307.9 720.0,307.5 720.7,308.0 721.4,308.1 722.1,307.9 722.8,308.0 723.5,307.7 724.2,308.2 724.9,307.8 725.6,306.8 726.3,308.1 727.0,307.4 727.7,307.5 728.4,308.1 729.1,308.1 729.8,307.6 730.5,308.1 731.2,308.4 731.9,308.2 732.6,308.3 733.3,307.8 734.0,308.1 734.7,308.0 735.4,308.2 736.1,308.3 736.8,308.1 737.5,308.2 738.2,308.4 738.9,308.8 739.6,308.7 740.3,308.5 741.0,308.6 741.7,308.3 742.4,308.7 743.1,309.0 743.8,308.6 744.5,308.9 745.2,308.2 745.9,308.8 746.6,309.1 747.3,308.5 748.0,308.8 748.7,308.8 749.4,308.7 750.1,309.0 750.8,309.0 751.5,309.2 752.2,309.3 752.9,308.7 753.6,308.9 754.3,308.7 755.0,309.4 755.7,309.4 755.7,313.5 755.0,313.2 754.3,313.1 753.6,313.7 752.9,313.4 752.2,312.9 751.5,312.9 750.8,313.6 750.1,312.9 749.4,313.7 748.7,313.3 748.0,312.8 747.3,312.7 746.6,312.8 745.9,312.7 745.2,312.6 744.5,313.8 743.8,312.6 743.1,312.5 742.4,312.7 741.7,312.9 741.0,312.8 740.3,312.6 739.6,312.9 738.9,312.7 738.2,312.9 737.5,312.7 736.8,312.5 736.1,312.5 735.4,312.6 734.7,312.4 734.0,312.2 733.3,312.9 732.6,312.3 731.9,312.4 731.2,312.3 730.5,312.3 729.8,312.4 729.1,312.2 728.4,312.8 727.7,312.6 727.0,312.0 726.3,312.0 725.6,312.9 724.9,311.8 724.2,312.1 723.5,312.1 722.8,311.9 722.1,312.4 721.4,312.0 720.7,311.8 720.0,311.8 719.3,312.1 718.6,311.8 717.9,311.7 717.2,311.6 716.5,311.9 715.8,312.5 715.1,312.4 714.4,311.6 713.7,311.7 713.0,311.7 712.3,311.3 711.6,311.4 710.9,311.3 710.2,311.6 709.5,311.5 708.8,311.1 708.1,311.2 707.4,311.4 706.7,311.6 706.0,311.7 705.3,311.5 704.6,311.1 703.9,311.3 703.2,311.3 702.5,310.9 701.8,311.2 701.1,310.7 700.4,310.6 699.7,311.1 699.0,311.7 698.3,311.1 697.6,310.6 696.9,310.9 696.2,311.5 695.5,310.7 694.8,310.9 694.2,310.9 693.5,310.8 692.8,310.2 692.1,310.9 691.4,310.8 690.7,310.3 690.0,310.5 689.3,310.2 688.6,310.1 687.9,310.1 687.2,310.5 686.5,310.1 685.8,309.9 685.1,310.3 684.4,309.7 683.7,309.7 683.0,310.4 682.3,310.2 681.6,309.8 680.9,310.3 680.2,309.7 679.5,309.3 678.8,309.7 678.1,309.4 677.4,309.4 676.7,309.2 676.0,309.0 675.3,309.2 674.6,309.1 673.9,309.2 673.2,309.6 672.5,309.1 671.8,309.2 671.1,308.7 670.4,309.4 669.7,309.6 669.0,308.7 668.3,308.9 667.6,308.8 666.9,308.9 666.2,308.5 665.5,308.5 664.8,308.2 664.1,308.7 663.4,308.2 662.7,308.4 662.0,308.0 661.3,308.0 660.6,308.0 659.9,307.9 659.2,308.2 658.5,307.7 657.9,309.1 657.2,307.5 656.5,307.6 655.8,307.6 655.1,307.4 654.4,308.5 653.7,307.4 653.0,307.8 652.3,308.0 651.6,307.0 650.9,307.6 650.2,307.3 649.5,306.8 648.8,307.6 648.1,307.4 647.4,306.8 646.7,306.6 646.0,306.7 645.3,307.2 644.6,307.2 643.9,306.5 643.2,307.6 642.5,306.2 641.8,306.0 641.1,306.5 640.4,306.4 639.7,306.2 639.0,306.6 638.3,306.2 637.7,305.9 637.0,305.9 636.3,305.9 635.6,305.3 634.9,306.3 634.2,305.3 633.5,305.1 632.8,305.1 632.1,305.1 631.4,305.3 630.7,304.8 630.0,305.3 629.3,305.0 628.6,305.3 627.9,304.7 627.2,304.9 626.5,305.4 625.8,304.9 625.1,304.3 624.4,304.4 623.7,304.0 623.0,304.1 622.4,304.0 621.7,303.7 621.0,304.3 620.3,303.6 619.6,303.8 618.9,303.7 618.2,304.2 617.5,303.3 616.8,303.4 616.1,303.2 615.4,303.5 614.7,303.7 614.0,303.1 613.3,303.0 612.6,302.9 611.9,302.9 611.2,302.6 610.5,302.7 609.8,302.5 609.2,302.9 608.5,302.5 607.8,302.6 607.1,301.9 606.4,302.0 605.7,301.9 605.0,302.5 604.3,302.3 603.6,302.0 602.9,302.0 602.2,301.5 601.5,302.3 600.8,301.3 600.1,301.3 599.4,301.0 598.7,301.5 598.0,301.2 597.3,300.9 596.7,301.2 596.0,300.8 595.3,300.7 594.6,300.5 593.9,300.4 593.2,300.2 592.5,300.3 591.8,300.5 591.1,300.8 590.4,300.7 589.7,300.0 589.0,300.2 588.3,299.9 587.6,299.7 586.9,299.9 586.2,300.1 585.5,299.9 584.9,299.9 584.2,299.1 583.5,299.0 582.8,298.8 582.1,299.0 581.4,299.5 580.7,298.7 580.0,298.7 579.3,298.5 578.6,298.3 577.9,298.5 577.2,298.5 576.5,298.0 575.8,297.8 575.2,298.6 574.5,298.0 573.8,297.6 573.1,298.2 572.4,298.0 571.7,297.4 571.0,297.5 570.3,297.0 569.6,297.5 568.9,296.7 568.2,297.1 567.6,296.5 566.9,296.7 566.2,296.3 565.5,296.9 564.8,296.2 564.1,296.0 563.4,296.7 562.7,295.9 562.0,295.4 561.4,295.2 560.7,295.2 560.0,295.9 559.3,295.5 558.6,295.5 558.0,294.7 557.3,294.3 556.6,294.7 555.9,294.3 555.2,294.2 554.6,294.2 553.9,293.8 553.2,293.6 552.6,293.2 551.9,293.0 551.2,293.3 550.6,292.7 549.9,292.3 549.3,292.3 548.6,291.7 547.9,291.5 547.3,291.2 546.6,291.2 546.0,290.7 545.4,290.3 544.7,290.2 544.1,289.7 543.4,290.0 542.8,289.3 542.2,289.0 541.5,288.6 540.9,288.6 540.3,288.2 539.6,288.5 539.0,287.4 538.3,287.6 537.7,287.4 537.1,287.6 536.4,287.5 535.8,286.3 535.1,285.9 534.5,285.6 533.8,285.8 533.1,285.2 532.5,285.4 531.8,285.3 531.2,284.9 530.5,284.8 529.9,284.2 529.2,284.1 528.6,283.5 527.9,283.3 527.3,283.6 526.6,282.6 525.9,282.3 525.3,282.6 524.6,282.3 524.0,281.7 523.3,281.5 522.7,281.7 522.0,281.3 521.4,281.0 520.7,280.4 520.1,280.2 519.4,280.1 518.8,279.5 518.2,279.3 517.5,279.3 516.9,279.1 516.2,279.2 515.6,278.0 515.0,278.0 514.3,278.1 513.7,277.6 513.1,277.4 512.4,277.3 511.8,277.0 511.2,276.2 510.5,276.1 509.9,275.3 509.3,275.2 508.7,274.7 508.0,274.4 507.4,274.1 506.8,274.3 506.2,273.7 505.5,273.1 504.9,273.0 504.3,272.4 503.7,272.5 503.1,271.8 502.5,271.9 501.9,272.1 501.3,270.7 500.7,270.3 500.1,270.4 499.5,270.0 498.9,269.4 498.4,268.9 497.8,268.4 497.2,268.0 496.6,268.0 496.1,267.4 495.5,266.9 495.0,266.5 494.4,266.8 493.9,265.4 493.4,264.9 492.8,264.6 492.3,264.2 491.8,263.9 491.2,263.2 490.7,263.0 490.2,262.8 489.7,261.9 489.2,261.4 488.7,261.2 488.2,260.2 487.7,259.9 487.2,259.4 486.7,259.2 486.2,259.1 485.7,257.9 485.2,258.8 484.7,257.1 484.2,256.5 483.7,255.7 483.2,255.5 482.7,255.7 482.3,254.2 481.8,253.8 481.3,254.0 480.8,253.3 480.4,252.2 479.9,252.1 479.4,251.2 479.0,251.5 478.5,250.2 478.0,251.1 477.6,249.4 477.1,248.7 476.7,247.9 476.3,247.6 475.8,247.3 475.4,246.4 475.0,246.1 474.5,245.2 474.1,245.0 473.7,244.0 473.3,244.1 472.9,243.7 472.5,242.4 472.1,242.6 471.7,241.2 471.3,240.6 470.9,240.1 470.6,239.8 470.2,239.2 469.8,238.2 469.4,237.8 469.1,237.7 468.7,236.5 468.3,236.2 468.0,235.6 467.6,234.8 467.3,234.8 466.9,234.1 466.6,232.8 466.2,232.3 465.9,232.0 465.6,231.0 465.2,230.7 464.9,230.0 464.6,229.5 464.3,228.6 463.9,228.4 463.6,227.3 463.3,227.7 463.0,226.2 462.7,225.9 462.3,224.9 462.0,224.6 461.7,223.5 461.4,223.1 461.1,222.5 460.7,222.4 460.4,221.9 460.1,221.1 459.8,220.3 459.5,219.4 459.1,219.1 458.8,218.5 458.5,217.5 458.2,216.9 457.9,216.5 457.6,215.9 457.2,215.3 456.9,214.8 456.6,214.0 456.3,213.1 456.0,212.9 455.7,212.4 455.4,212.2 455.1,211.4 454.8,210.0 454.5,209.9 454.2,208.6 453.8,208.2 453.5,207.3 453.2,206.8 452.9,206.4 452.6,206.0 452.3,204.8 452.0,204.3 451.7,204.3 451.4,203.8 451.1,202.3 450.8,201.9 450.5,201.4 450.2,200.7 449.9,200.0 449.6,199.1 449.3,198.4 449.1,198.0 448.8,197.8 448.5,196.8 448.2,195.9 447.9,195.9 447.6,195.0 447.3,194.3 447.0,194.1 446.7,193.2 446.4,192.6 446.1,192.2 445.8,191.1 445.5,190.4 445.2,190.0 444.9,189.2 444.6,188.8 444.3,188.6 444.0,187.3 443.7,187.4 443.5,186.2 443.2,185.2 442.9,184.8 442.7,184.0 442.4,183.5 442.2,182.9 441.9,182.9 441.6,181.7 441.4,181.2 441.1,180.9 440.9,179.2 440.6,178.7 440.4,178.0 440.1,177.3 439.9,177.0 439.6,176.1 439.4,175.3 439.1,175.3 438.9,174.7 438.7,173.5 438.4,172.8 438.2,172.6 438.0,171.6 437.8,171.3 437.5,170.2 437.3,170.0 437.1,168.8 436.9,168.0 436.7,167.6 436.5,167.2 436.3,166.1 436.1,165.7 435.9,165.3 435.7,164.3 435.5,164.0 435.2,162.9 435.0,162.3 434.8,162.4 434.6,161.4 434.4,160.6 434.2,159.5 434.0,158.7 433.8,158.2 433.6,157.7 433.4,156.8 433.1,156.4 432.9,155.7 432.7,154.7 432.4,154.1 432.2,153.6 431.9,153.5 431.7,152.7 431.4,151.5 431.2,151.6 430.9,150.4 430.6,149.8 430.4,149.4 430.1,149.0 429.9,147.5 429.6,146.8 429.4,146.3 429.1,145.8 428.9,145.2 428.7,144.6 428.4,143.8 428.2,143.0 427.9,142.6 427.6,142.5 427.4,141.1 427.1,140.3 426.9,139.9 426.6,139.5 426.3,138.4 426.1,138.2 425.8,137.4 425.5,137.1 425.2,135.8 425.0,135.5 424.7,134.7 424.4,134.4 424.1,133.9 423.9,133.1 423.6,132.2 423.3,131.8 423.0,131.1 422.7,130.1 422.3,129.5 422.0,129.1 421.6,129.3 421.2,127.9 420.8,127.2 420.2,127.3 419.5,127.5 418.8,127.6 418.1,127.6 417.4,128.2 416.7,127.9 416.0,128.1 415.3,128.1 414.7,127.9 414.0,128.7 413.3,128.0 412.6,128.2 411.9,128.3 411.2,128.6 410.5,128.7 409.8,129.5 409.1,129.3 408.5,128.9 407.8,129.9 407.1,129.3 406.4,129.6 405.7,129.9 405.0,129.7 404.3,129.8 403.6,129.9 402.9,130.3 402.3,130.4 401.6,130.9 400.9,130.4 400.2,130.4 399.5,130.6 398.8,130.7 398.1,130.8 397.4,130.7 396.7,130.8 396.0,131.0 395.3,130.9 394.6,131.0 393.9,131.2 393.2,131.4 392.5,131.1 391.8,131.5 391.1,131.1 390.4,131.8 389.7,131.3 389.0,131.9 388.3,131.4 387.6,131.6 386.9,131.7 386.2,131.7 385.5,131.7 384.8,132.0 384.1,131.9 383.5,131.9 382.8,132.4 382.1,132.4 381.4,132.3 380.7,132.8 380.0,132.6 379.3,132.9 378.6,133.0 378.0,132.9 377.3,133.5 376.6,133.8 375.9,133.6 375.2,133.7 374.5,134.0 373.9,133.8 373.2,134.5 372.5,134.2 371.8,135.0 371.1,134.5 370.4,134.7 369.8,135.1 369.1,136.0 368.4,135.1 367.7,136.1 367.0,135.4 366.3,136.2 365.7,136.2 365.0,136.2 364.3,136.3 363.6,136.2 362.9,137.1 362.3,137.7 361.6,137.7 360.9,137.1 360.2,137.8 359.6,137.6 358.9,137.8 358.2,137.8 357.5,138.0 356.8,138.1 356.2,139.1 355.5,138.2 354.8,138.9 354.1,138.7 353.4,139.1 352.8,139.0 352.1,139.6 351.4,139.8 350.7,140.4 350.1,140.1 349.4,140.1 348.7,140.4 348.0,140.6 347.4,140.4 346.7,140.5 346.0,140.7 345.3,140.9 344.7,141.1 344.0,141.4 343.3,142.1 342.6,142.3 342.0,142.3 341.3,142.0 340.6,142.4 339.9,142.5 339.3,142.7 338.6,142.9 337.9,143.0 337.2,143.4 336.6,143.8 335.9,143.7 335.2,144.0 334.6,144.5 333.9,144.2 333.2,144.5 332.5,144.7 331.9,145.7 331.2,145.1 330.5,145.9 329.9,145.5 329.2,145.8 328.5,146.6 327.8,146.0 327.2,146.2 326.5,146.7 325.8,147.0 325.2,146.9 324.5,147.1 323.8,147.6 323.2,147.8 322.5,149.1 321.8,148.2 321.2,148.4 320.5,148.4 319.8,148.6 319.2,149.0 318.5,149.3 317.8,149.3 317.2,149.4 316.5,149.5 315.8,150.1 315.2,150.5 314.5,150.4 313.8,150.5 313.2,152.0 312.5,151.0 311.8,151.4 311.2,151.3 310.5,151.8 309.8,151.9 309.2,152.5 308.5,152.5 307.8,152.8 307.2,152.8 306.5,152.8 305.8,153.2 305.2,153.3 304.5,154.1 303.9,154.1 303.2,154.1 302.5,155.0 301.9,155.0 301.2,154.7 300.5,155.4 299.9,155.6 299.2,155.5 298.6,155.8 297.9,155.7 297.2,156.6 296.6,158.0 295.9,156.5 295.3,156.9 294.7,157.2 294.1,158.6 293.5,158.4 293.0,158.6 292.4,159.1 291.8,159.0 291.2,159.9 290.5,159.9 289.9,160.7 289.2,160.5 288.6,160.7 287.9,160.7 287.3,161.3 286.6,161.3 286.0,161.6 285.3,162.5 284.7,162.3 284.0,162.6 283.4,162.5 282.8,163.1 282.1,163.4 281.5,163.8 280.9,164.3 280.2,164.1 279.6,164.5 279.0,165.7 278.4,165.2 277.8,165.4 277.1,166.0 276.5,166.2 275.9,166.6 275.3,167.1 274.7,168.3 274.1,168.1 273.6,168.4 273.0,168.4 272.4,169.0 271.9,169.4 271.3,170.2 270.8,170.4 270.3,170.5 269.8,171.1 269.3,171.6 268.8,172.1 268.3,173.7 267.9,173.2 267.4,174.4 266.9,174.1 266.4,174.9 266.0,175.3 265.5,176.0 265.0,176.2 264.5,176.7 264.0,177.4 263.4,178.0 262.9,178.6 262.3,178.7 261.7,179.4 261.1,180.1 260.5,179.5 259.9,180.4 259.3,180.6 258.7,180.5 258.1,181.7 257.4,182.1 256.8,181.6 256.1,181.8 255.4,182.0 254.7,181.7 254.0,182.4 253.4,182.4 252.8,183.1 252.3,183.2 251.9,184.2 251.4,184.3 251.1,185.3 250.7,186.0 250.4,186.3 250.0,186.5 249.7,187.4 249.4,187.9 249.2,188.8 248.9,189.2 248.6,190.2 248.4,191.3 248.1,192.1 247.9,191.7 247.6,192.3 247.3,193.3 247.1,193.8 246.8,194.7 246.6,195.4 246.4,196.5 246.3,196.4 246.1,197.1 245.9,197.9 245.8,198.9 245.7,199.2 245.5,199.9 245.4,200.5 245.3,201.2 245.2,202.2 245.1,203.3 245.0,203.6 244.9,204.4 244.8,205.2 244.8,205.3 244.7,206.0 244.6,206.9 244.5,207.7 244.5,208.6 244.4,208.8 244.3,209.7 244.3,210.4 244.2,211.0 244.1,211.9 244.1,212.6 244.0,213.5 244.0,214.0 243.9,214.5 243.8,215.6 243.8,216.8 243.7,216.5 243.7,217.7 243.6,218.0 243.6,218.8 243.5,219.7 243.5,220.5 243.4,220.8 243.3,221.7 243.3,222.6 243.2,223.4 243.2,223.7 243.1,224.5 243.1,225.0 243.0,225.7 243.0,226.8 242.9,227.0 242.8,228.0 242.8,228.6 242.7,229.3 242.7,230.6 242.6,231.4 242.6,231.4 242.5,232.3 242.4,232.6 242.4,233.5 242.3,234.1 242.3,235.0 242.2,235.6 242.2,236.6 242.1,237.3 242.0,237.7 242.0,238.7 241.9,238.8 241.9,240.0 241.8,240.4 241.8,241.3 241.7,241.7 241.7,242.3 241.6,243.1 241.5,244.8 241.5,244.5 241.4,245.3 241.4,246.1 241.3,247.0 241.3,247.2 241.2,248.0 241.2,249.3 241.1,250.1 241.1,250.6 241.0,250.8 240.9,251.5 240.9,252.6 240.8,253.4 240.8,253.4 240.7,254.8 240.7,254.9 240.6,255.8 240.6,256.3 240.5,257.0 240.4,257.8 240.4,258.5 240.3,259.7 240.3,260.3 240.2,260.7 240.2,261.4 240.1,262.3 240.1,263.2 240.0,263.8 239.9,264.0 239.9,265.0 239.8,266.1 239.8,266.4 239.7,267.2 239.6,267.3 239.6,268.4 239.5,270.7 239.4,269.9 239.4,270.2 239.3,271.4 239.3,271.6 239.2,272.4 239.1,273.2 239.0,274.0 239.0,274.5 238.9,275.5 238.8,276.3 238.8,276.8 238.7,277.4 238.6,278.2 238.5,279.2 238.4,279.3 238.3,280.5 238.2,281.2 238.2,281.5 238.1,282.3 238.0,282.7 237.9,283.3 237.8,284.5 237.7,284.9 237.5,286.0 237.4,286.4 237.3,286.9 237.2,288.2 237.1,288.7 237.0,289.2 236.8,290.2 236.7,290.5 236.6,291.6 236.4,292.4 236.3,292.5 236.1,293.8 236.0,293.8 235.8,295.1 235.7,295.9 235.5,295.7 235.3,296.8 235.2,297.4 235.0,298.0 234.8,298.4 234.6,299.2 234.5,300.0 234.3,300.8 234.1,301.2 233.9,301.9 233.7,303.1 233.5,303.4 233.3,304.0 233.1,305.0 232.9,306.2 232.8,305.9 232.6,306.7 232.4,307.6 232.2,308.4 232.0,308.8 231.9,309.5 231.7,310.5 231.5,311.5 231.2,311.8 230.9,313.1 230.6,312.8 230.3,313.3 229.9,313.8 229.5,314.6 229.0,315.6 228.6,315.8 228.0,315.8 227.3,315.6 226.6,316.5 225.9,315.7 225.2,315.8 224.5,315.8 223.8,316.2 223.1,315.6 222.4,315.8 221.7,316.1 221.0,316.4 220.3,316.0 219.6,315.7 218.9,315.6 218.2,315.9 217.5,315.9 216.8,316.5 216.1,315.8 215.4,315.6 214.7,316.7 214.0,315.6 213.3,315.9 212.6,315.8 211.9,316.2 211.2,316.4 210.5,315.7 209.8,316.4 209.1,315.9 208.4,315.7 207.7,315.9 207.0,315.6 206.3,315.6 205.6,315.8 204.9,316.6 204.2,316.4 203.5,315.9 202.8,315.8 202.1,316.5 201.4,316.0 200.7,316.0 200.0,315.9 199.3,315.8 198.6,315.7 197.9,316.6 197.2,315.7 196.5,316.0 195.8,315.7 195.1,316.0 194.4,316.0 193.7,316.8 193.0,315.8 192.3,315.9 191.6,315.7 190.9,316.4 190.2,315.6 189.5,316.0 188.8,315.7 188.1,315.6 187.4,315.9 186.7,316.0 186.0,316.0 185.3,316.7 184.6,315.7 183.9,315.8 183.2,316.3 182.5,316.5 181.8,315.6 181.1,315.7 180.4,316.7 179.7,315.8 179.0,316.0 178.3,316.7 177.6,316.0 176.9,315.8 176.2,316.4 175.5,315.6 174.8,316.6 174.1,316.3 173.4,315.8 172.7,316.5 172.0,315.7 171.3,315.7 170.6,315.9 169.9,316.0 169.2,315.9 168.5,316.1 167.8,316.3 167.1,315.6 166.4,316.2 165.7,316.0 165.0,316.5 164.3,315.6 163.6,316.7 162.9,316.1 162.2,315.8 161.5,315.8 160.8,315.6 160.1,316.2 159.4,316.0 158.7,315.7 158.0,316.5 157.3,315.9 156.6,315.6 155.9,315.6 155.2,315.6 154.5,316.0 153.8,315.7 153.1,315.9 152.4,315.7 151.7,316.2 151.0,316.3 150.3,315.8 149.6,316.3 148.9,315.9 148.2,315.6 147.5,315.6 146.8,315.7 146.1,315.9 145.4,316.2 144.7,315.6 144.0,316.3 143.3,315.9 142.6,315.9 141.9,316.7 141.2,315.6 140.5,316.1 139.8,316.1 139.1,315.8 138.4,315.8 137.7,316.0 137.0,316.0 136.3,316.6 135.6,316.1 134.9,315.6 134.2,315.8 133.5,316.0 132.8,316.6 132.1,315.8 131.4,315.7 130.7,316.1 130.0,315.6 129.3,315.8 128.6,316.5 127.9,315.7 127.2,315.8 126.5,315.8 125.8,315.7 125.1,316.1 124.4,316.5 123.7,316.1 123.0,315.9 122.3,316.5 121.6,316.1 120.9,315.6 120.2,316.3 119.5,316.4 118.8,315.7 118.1,315.7 117.4,315.7 116.7,315.8 116.0,315.6 115.3,316.5 114.6,315.9 113.9,316.0 113.2,316.3 112.5,315.6 111.8,316.0 111.1,316.4 110.4,315.6 109.7,315.8 109.0,316.3 108.3,316.2 107.6,315.6 106.9,315.9 106.2,315.9 105.5,315.7 104.8,315.6 104.1,315.9 103.4,315.8 102.7,316.2 102.0,316.1 101.3,315.7 100.6,315.8 99.9,315.7 99.2,316.5 98.5,315.7 97.8,315.8 97.1,315.6 96.4,316.2 95.7,315.6 95.0,316.0 94.3,315.8 93.6,316.2 92.9,315.9 92.2,315.6 91.5,316.2 90.8,315.6 90.1,316.3 89.4,316.0 88.7,315.9 88.0,315.6 87.3,315.9 86.6,316.3 85.9,315.9 85.2,315.8 84.5,316.1 83.8,315.8 83.1,315.8 82.4,316.1 81.7,315.9 81.0,316.1 80.3,315.7 79.6,315.6 78.9,316.1 78.2,316.3 77.5,316.0 76.8,316.5 76.1,315.7 75.4,316.0 74.7,316.1 74.0,316.6 73.3,316.0 72.6,315.6 71.9,315.7 71.2,316.1 70.5,315.7 69.8,315.6 69.1,315.7 68.4,315.7 67.7,316.1 67.0,316.0 66.3,315.6 65.6,315.9 64.9,315.6 64.2,315.9 63.5,315.6 62.8,315.7 62.1,316.2 61.4,316.1 60.7,316.2 60.0,316.2 59.3,316.0 58.6,316.3 57.9,316.3 57.2,316.0 56.5,315.7 55.8,315.9 55.1,315.7 54.4,315.8 53.7,316.0 53.0,316.4 52.3,316.1 51.6,316.4 50.9,315.7 50.2,316.2 49.5,315.7 48.8,315.7 48.1,315.6 47.4,315.8 46.7,315.6 46.0,315.6 45.3,315.8 44.6,316.1 43.9,315.7 43.2,315.8 42.5,316.3 41.8,316.4 41.1,315.7 40.4,315.8 39.7,315.9 39.0,315.7 38.3,315.8 37.6,316.1 36.9,315.6 36.2,315.6 35.5,316.2 34.8,315.8 34.1,316.0 33.4,316.1 32.7,315.7 32.0,315.8 31.3,315.7 30.6,315.7 29.9,315.6 29.2,315.9 28.5,315.8 27.8,315.6 27.1,315.9 26.4,315.7 25.7,315.6 25.0,315.8 24.3,315.8 23.6,315.8 22.9,316.4 22.2,315.6 21.5,316.1 20.8,315.8 20.1,315.8 19.4,315.9 18.7,316.1 18.0,316.1 17.3,315.8 16.6,316.1 15.9,315.8 15.2,315.9 14.5,315.6 13.8,316.5 13.1,315.8 12.4,315.9 11.7,315.7 11.0,315.9Z" fill="#1ebed2" stroke="none"/><path d="M11.0,313.8 12.5,313.8 14.0,313.8 15.5,313.8 17.0,313.8 18.5,313.8 20.0,313.8 21.5,313.8 23.0,313.8 24.5,313.8 26.0,313.8 27.5,313.8 29.0,313.8 30.5,313.8 32.0,313.8 33.5,313.8 35.0,313.8 36.5,313.8 38.0,313.8 39.5,313.8 41.0,313.8 42.5,313.8 44.0,313.8 45.5,313.8 47.0,313.8 48.5,313.8 50.0,313.8 51.5,313.8 53.0,313.8 54.5,313.8 56.0,313.8 57.5,313.8 59.0,313.8 60.5,313.8 62.0,313.8 63.5,313.8 65.0,313.8 66.5,313.8 68.0,313.8 69.5,313.8 71.0,313.8 72.5,313.8 74.0,313.8 75.5,313.8 77.0,313.8 78.5,313.8 80.0,313.8 81.5,313.8 83.0,313.8 84.5,313.8 86.0,313.8 87.5,313.8 89.0,313.8 90.5,313.8 92.0,313.8 93.5,313.8 95.0,313.8 96.5,313.8 98.0,313.8 99.5,313.8 101.0,313.8 102.5,313.8 104.0,313.8 105.5,313.8 107.0,313.8 108.5,313.8 110.0,313.8 111.5,313.8 113.0,313.8 114.5,313.8 116.0,313.8 117.5,313.8 119.0,313.8 120.5,313.8 122.0,313.8 123.5,313.8 125.0,313.8 126.5,313.8 128.0,313.8 129.5,313.8 131.0,313.8 132.5,313.8 134.0,313.8 135.5,313.8 137.0,313.8 138.5,313.8 140.0,313.8 141.5,313.8 143.0,313.8 144.5,313.8 146.0,313.8 147.5,313.8 149.0,313.8 150.5,313.8 152.0,313.8 153.5,313.8 155.0,313.8 156.5,313.8 158.0,313.8 159.5,313.8 161.0,313.8 162.5,313.8 164.0,313.8 165.5,313.8 167.0,313.8 168.5,313.8 170.0,313.8 171.5,313.8 173.0,313.8 174.5,313.8 176.0,313.8 177.5,313.8 179.0,313.8 180.5,313.8 182.0,313.8 183.5,313.8 185.0,313.8 186.5,313.8 188.0,313.8 189.5,313.8 191.0,313.8 192.5,313.8 194.0,313.8 195.5,313.8 197.0,313.8 198.5,313.8 200.0,313.8 201.5,313.8 203.0,313.8 204.5,313.8 206.0,313.8 207.5,313.8 209.0,313.8 210.5,313.8 212.0,313.8 213.5,313.8 215.0,313.8 216.5,313.8 218.0,313.8 219.5,313.8 221.0,313.8 222.5,313.8 224.0,313.8 225.5,313.8 227.0,313.8 228.4,313.7 229.4,312.6 230.3,311.3 231.0,310.0 231.5,308.6 231.9,307.2 232.3,305.7 232.7,304.3 233.1,302.8 233.5,301.4 233.9,299.9 234.3,298.5 234.7,297.0 235.1,295.6 235.4,294.1 235.8,292.7 236.1,291.2 236.4,289.7 236.7,288.3 237.0,286.8 237.3,285.3 237.5,283.8 237.7,282.4 238.0,280.9 238.2,279.4 238.4,277.9 238.6,276.4 238.7,274.9 238.9,273.4 239.0,271.9 239.2,270.5 239.3,269.0 239.5,267.5 239.6,266.0 239.7,264.5 239.9,263.0 240.0,261.5 240.1,260.0 240.2,258.5 240.4,257.0 240.5,255.5 240.6,254.0 240.7,252.5 240.8,251.0 240.9,249.5 241.1,248.0 241.2,246.5 241.3,245.0 241.4,243.5 241.5,242.1 241.6,240.6 241.8,239.1 241.9,237.6 242.0,236.1 242.1,234.6 242.2,233.1 242.4,231.6 242.5,230.1 242.6,228.6 242.7,227.1 242.9,225.6 243.0,224.1 243.1,222.6 243.2,221.1 243.3,219.6 243.5,218.1 243.6,216.6 243.7,215.1 243.8,213.6 243.9,212.1 244.1,210.7 244.2,209.2 244.3,207.7 244.5,206.2 244.6,204.7 244.8,203.2 245.0,201.7 245.2,200.2 245.4,198.7 245.7,197.3 246.0,195.8 246.3,194.3 246.7,192.9 247.2,191.5 247.8,190.1 248.3,188.7 248.9,187.3 249.5,185.9 250.1,184.6 250.8,183.2 251.7,182.0 252.7,180.9 253.9,180.1 255.4,179.9 256.9,179.5 258.2,178.9 259.6,178.2 260.9,177.4 262.1,176.6 263.3,175.7 264.5,174.8 265.6,173.7 266.6,172.6 267.6,171.5 268.6,170.4 269.6,169.3 270.7,168.3 271.9,167.3 273.1,166.4 274.3,165.6 275.6,164.8 276.9,164.1 278.2,163.3 279.5,162.6 280.9,162.0 282.2,161.3 283.6,160.7 285.0,160.1 286.3,159.5 287.7,159.0 289.1,158.4 290.5,157.8 291.9,157.2 293.1,156.4 294.3,155.5 295.7,154.8 297.1,154.3 298.5,153.7 299.9,153.2 301.3,152.8 302.7,152.3 304.1,151.8 305.6,151.3 307.0,150.8 308.4,150.4 309.8,149.9 311.3,149.4 312.7,149.0 314.1,148.5 315.5,148.1 317.0,147.6 318.4,147.1 319.8,146.7 321.3,146.2 322.7,145.8 324.1,145.3 325.6,144.9 327.0,144.5 328.4,144.0 329.9,143.6 331.3,143.1 332.7,142.7 334.2,142.3 335.6,141.9 337.0,141.4 338.5,141.0 339.9,140.6 341.4,140.2 342.8,139.8 344.3,139.4 345.7,139.0 347.2,138.6 348.6,138.2 350.1,137.9 351.5,137.5 353.0,137.1 354.4,136.7 355.9,136.4 357.3,136.0 358.8,135.6 360.2,135.2 361.7,134.9 363.1,134.5 364.6,134.2 366.1,133.8 367.5,133.5 369.0,133.1 370.4,132.8 371.9,132.5 373.4,132.1 374.8,131.8 376.3,131.5 377.8,131.2 379.2,130.9 380.7,130.6 382.2,130.3 383.7,130.1 385.1,129.8 386.6,129.6 388.1,129.5 389.6,129.3 391.1,129.2 392.6,129.2 394.1,129.1 395.6,129.0 397.1,128.9 398.6,128.8 400.1,128.6 401.6,128.4 403.0,128.1 404.5,127.9 406.0,127.6 407.5,127.3 409.0,127.1 410.4,126.8 411.9,126.5 413.4,126.2 414.8,126.0 416.3,125.7 417.8,125.5 419.3,125.3 420.8,125.2 421.6,126.4 422.4,127.7 423.1,129.0 423.7,130.4 424.3,131.8 424.9,133.2 425.5,134.5 426.1,135.9 426.6,137.3 427.2,138.7 427.8,140.1 428.3,141.5 428.8,142.9 429.4,144.3 429.9,145.7 430.4,147.1 431.0,148.5 431.5,149.9 432.1,151.3 432.6,152.7 433.1,154.1 433.6,155.5 434.0,157.0 434.5,158.4 434.9,159.8 435.4,161.3 435.8,162.7 436.2,164.1 436.7,165.6 437.1,167.0 437.6,168.4 438.1,169.8 438.6,171.2 439.1,172.7 439.6,174.1 440.1,175.5 440.7,176.9 441.2,178.3 441.7,179.7 442.3,181.1 442.9,182.5 443.4,183.8 444.0,185.2 444.6,186.6 445.3,187.9 445.9,189.3 446.6,190.7 447.2,192.0 447.8,193.4 448.5,194.7 449.1,196.1 449.7,197.5 450.4,198.8 451.0,200.2 451.6,201.5 452.3,202.9 452.9,204.2 453.6,205.6 454.2,206.9 454.9,208.3 455.6,209.6 456.2,211.0 456.9,212.3 457.6,213.7 458.2,215.0 458.9,216.3 459.6,217.7 460.3,219.0 461.0,220.3 461.7,221.7 462.3,223.0 463.0,224.3 463.7,225.7 464.4,227.0 465.1,228.3 465.8,229.7 466.5,231.0 467.3,232.3 468.0,233.6 468.8,234.9 469.6,236.1 470.4,237.4 471.2,238.6 472.1,239.9 472.9,241.1 473.8,242.4 474.7,243.6 475.6,244.8 476.5,245.9 477.5,247.1 478.4,248.2 479.4,249.4 480.4,250.5 481.4,251.6 482.5,252.7 483.5,253.8 484.5,254.8 485.6,255.9 486.7,257.0 487.7,258.0 488.8,259.0 489.9,260.1 491.0,261.1 492.1,262.1 493.3,263.1 494.4,264.0 495.6,264.9 496.8,265.8 498.0,266.7 499.3,267.6 500.5,268.4 501.8,269.2 503.1,269.9 504.4,270.7 505.7,271.4 507.1,272.1 508.4,272.8 509.7,273.4 511.1,274.1 512.4,274.7 513.8,275.4 515.1,276.0 516.5,276.6 517.9,277.2 519.3,277.8 520.6,278.4 522.0,279.0 523.4,279.5 524.8,280.1 526.2,280.6 527.6,281.1 529.0,281.7 530.4,282.2 531.8,282.7 533.2,283.3 534.6,283.8 536.0,284.3 537.4,284.9 538.8,285.5 540.2,286.1 541.5,286.7 542.9,287.4 544.3,288.0 545.6,288.6 547.0,289.2 548.4,289.7 549.8,290.3 551.2,290.8 552.7,291.2 554.1,291.7 555.5,292.1 557.0,292.5 558.4,292.8 559.9,293.2 561.4,293.5 562.8,293.8 564.3,294.1 565.8,294.3 567.3,294.6 568.7,294.9 570.2,295.1 571.7,295.3 573.2,295.6 574.7,295.8 576.1,296.0 577.6,296.3 579.1,296.5 580.6,296.7 582.1,296.9 583.6,297.1 585.1,297.3 586.5,297.5 588.0,297.7 589.5,297.9 591.0,298.1 592.5,298.3 594.0,298.5 595.5,298.7 597.0,298.9 598.4,299.0 599.9,299.2 601.4,299.4 602.9,299.6 604.4,299.8 605.9,300.0 607.4,300.2 608.9,300.4 610.3,300.5 611.8,300.7 613.3,300.9 614.8,301.1 616.3,301.3 617.8,301.5 619.3,301.7 620.8,301.8 622.3,302.0 623.7,302.2 625.2,302.4 626.7,302.5 628.2,302.7 629.7,302.9 631.2,303.1 632.7,303.2 634.2,303.4 635.7,303.6 637.2,303.7 638.6,303.9 640.1,304.1 641.6,304.2 643.1,304.4 644.6,304.5 646.1,304.7 647.6,304.8 649.1,305.0 650.6,305.1 652.1,305.3 653.6,305.4 655.1,305.5 656.6,305.7 658.1,305.8 659.5,306.0 661.0,306.1 662.5,306.2 664.0,306.3 665.5,306.5 667.0,306.6 668.5,306.7 670.0,306.8 671.5,306.9 673.0,307.1 674.5,307.2 676.0,307.3 677.5,307.4 679.0,307.5 680.5,307.6 682.0,307.7 683.5,307.8 685.0,307.9 686.5,308.0 688.0,308.1 689.5,308.2 691.0,308.3 692.5,308.4 694.0,308.5 695.4,308.6 696.9,308.7 698.4,308.7 699.9,308.8 701.4,308.9 702.9,309.0 704.4,309.1 705.9,309.2 707.4,309.3 708.9,309.3 710.4,309.4 711.9,309.5 713.4,309.6 714.9,309.7 716.4,309.7 717.9,309.8 719.4,309.9 720.9,309.9 722.4,310.0 723.9,310.0 725.4,310.1 726.9,310.2 728.4,310.2 729.9,310.3 731.4,310.3 732.9,310.4 734.4,310.4 735.9,310.5 737.4,310.6 738.9,310.6 740.4,310.7 741.9,310.7 743.4,310.8 744.9,310.8 746.4,310.9 747.9,310.9 749.4,311.0 750.9,311.0 752.4,311.1 753.9,311.1 755.4,311.2" stroke="#1ebed2" stroke-width="1.1" stroke-opacity="0.8"/>
<path d="M11.0,311.7 11.7,312.0 12.4,311.0 13.1,312.0 13.8,312.0 14.5,311.7 15.2,311.9 15.9,312.0 16.6,311.7 17.3,311.8 18.0,311.2 18.7,312.0 19.4,311.3 20.1,312.0 20.8,311.9 21.5,311.6 22.2,311.3 22.9,311.7 23.6,311.6 24.3,312.0 25.0,311.6 25.7,311.5 26.4,312.0 27.1,312.0 27.8,311.8 28.5,312.0 29.2,311.9 29.9,311.8 30.6,311.8 31.3,312.0 32.0,311.7 32.7,311.3 33.4,311.7 34.1,311.8 34.8,312.0 35.5,311.5 36.2,311.2 36.9,312.0 37.6,310.9 38.3,311.5 39.0,311.8 39.7,310.9 40.4,311.1 41.1,312.0 41.8,312.0 42.5,312.0 43.2,311.6 43.9,311.0 44.6,312.0 45.3,311.6 46.0,311.2 46.7,311.7 47.4,311.9 48.1,311.5 48.8,312.0 49.5,311.7 50.2,311.9 50.9,311.5 51.6,311.6 52.3,312.0 53.0,311.5 53.7,311.7 54.4,311.6 55.1,311.9 55.8,312.0 56.5,311.7 57.2,312.0 57.9,311.3 58.6,311.7 59.3,311.6 60.0,311.6 60.7,311.2 61.4,311.9 62.1,311.7 62.8,311.3 63.5,311.9 64.2,311.2 64.9,311.2 65.6,311.7 66.3,311.1 67.0,311.6 67.7,311.6 68.4,311.5 69.1,311.9 69.8,311.8 70.5,312.0 71.2,311.4 71.9,311.8 72.6,311.7 73.3,311.8 74.0,311.7 74.7,311.7 75.4,311.8 76.1,311.9 76.8,311.7 77.5,311.9 78.2,311.5 78.9,311.1 79.6,311.5 80.3,311.5 81.0,311.5 81.7,311.4 82.4,311.9 83.1,311.7 83.8,311.9 84.5,312.0 85.2,311.8 85.9,311.8 86.6,311.9 87.3,311.4 88.0,311.8 88.7,312.0 89.4,312.0 90.1,311.9 90.8,311.7 91.5,311.8 92.2,312.0 92.9,311.2 93.6,310.9 94.3,311.1 95.0,311.3 95.7,311.1 96.4,311.8 97.1,311.3 97.8,311.8 98.5,311.2 99.2,311.1 99.9,311.6 100.6,310.9 101.3,311.7 102.0,311.7 102.7,311.8 103.4,311.8 104.1,311.4 104.8,311.4 105.5,310.9 106.2,311.8 106.9,312.0 107.6,311.7 108.3,312.0 109.0,311.9 109.7,311.8 110.4,311.4 111.1,311.3 111.8,311.7 112.5,311.9 113.2,311.0 113.9,311.5 114.6,311.1 115.3,311.8 116.0,312.0 116.7,311.4 117.4,312.0 118.1,311.0 118.8,311.9 119.5,311.2 120.2,311.9 120.9,311.5 121.6,311.9 122.3,311.4 123.0,311.8 123.7,311.9 124.4,311.4 125.1,311.1 125.8,311.7 126.5,311.9 127.2,312.0 127.9,311.9 128.6,311.4 129.3,312.0 130.0,311.9 130.7,311.8 131.4,311.5 132.1,312.0 132.8,311.2 133.5,311.6 134.2,311.6 134.9,311.9 135.6,311.8 136.3,311.8 137.0,311.5 137.7,311.2 138.4,311.2 139.1,311.9 139.8,311.9 140.5,311.0 141.2,312.0 141.9,311.8 142.6,312.0 143.3,311.4 144.0,311.8 144.7,311.9 145.4,311.9 146.1,311.9 146.8,311.5 147.5,311.0 148.2,312.0 148.9,311.9 149.6,311.9 150.3,311.1 151.0,311.7 151.7,311.6 152.4,312.0 153.1,311.8 153.8,311.2 154.5,311.8 155.2,311.1 155.9,311.6 156.6,311.9 157.3,312.0 158.0,312.0 158.7,312.0 159.4,311.0 160.1,311.8 160.8,311.5 161.5,311.8 162.2,311.7 162.9,312.0 163.6,311.8 164.3,311.6 165.0,311.2 165.7,312.0 166.4,311.9 167.1,311.9 167.8,312.0 168.5,311.3 169.2,311.8 169.9,311.5 170.6,310.5 171.3,311.9 172.0,311.5 172.7,311.0 173.4,312.0 174.1,311.2 174.8,311.7 175.5,311.8 176.2,311.2 176.9,311.8 177.6,311.5 178.3,311.4 179.0,311.7 179.7,311.5 180.4,310.8 181.1,311.5 181.8,312.0 182.5,311.3 183.2,311.4 183.9,311.8 184.6,311.6 185.3,312.0 186.0,312.0 186.7,311.9 187.4,311.1 188.1,311.5 188.8,311.6 189.5,311.9 190.2,312.0 190.9,311.9 191.6,311.2 192.3,311.8 193.0,312.0 193.7,311.8 194.4,311.3 195.1,311.8 195.8,312.0 196.5,311.9 197.2,312.0 197.9,311.7 198.6,311.8 199.3,311.9 200.0,311.7 200.7,311.9 201.4,312.0 202.1,311.8 202.8,311.2 203.5,311.4 204.2,311.4 204.9,311.6 205.6,312.0 206.3,311.5 207.0,312.0 207.7,311.6 208.4,311.5 209.1,311.9 209.8,312.0 210.5,312.0 211.2,311.5 211.9,311.6 212.6,311.9 213.3,311.3 214.0,311.9 214.7,312.0 215.4,311.1 216.1,311.8 216.8,312.0 217.5,311.4 218.2,312.0 218.9,312.0 219.6,311.9 220.3,311.3 221.0,311.5 221.7,311.8 222.4,311.9 223.1,311.5 223.8,311.9 224.5,311.3 225.2,311.8 225.9,311.6 226.6,311.8 227.3,311.3 228.0,311.1 228.6,311.6 229.0,311.0 229.5,310.6 229.9,309.9 230.3,309.4 230.6,308.9 230.9,308.1 231.2,307.5 231.5,306.7 231.7,305.9 231.9,305.2 232.0,304.7 232.2,302.7 232.4,303.2 232.6,302.9 232.8,302.2 232.9,300.9 233.1,300.2 233.3,300.1 233.5,299.4 233.7,298.9 233.9,298.1 234.1,297.3 234.3,296.7 234.5,296.1 234.6,294.9 234.8,294.6 235.0,294.2 235.2,293.0 235.3,292.2 235.5,291.7 235.7,290.6 235.8,290.4 236.0,289.7 236.1,289.4 236.3,288.2 236.4,288.0 236.5,286.8 236.7,286.6 236.8,285.0 236.9,284.6 237.0,284.3 237.2,283.9 237.3,283.2 237.4,282.4 237.5,281.8 237.6,280.7 237.8,280.2 237.9,279.4 238.0,278.3 238.1,277.8 238.2,277.4 238.3,276.9 238.4,275.7 238.5,275.5 238.6,274.4 238.7,274.3 238.8,273.1 238.9,272.7 239.0,271.1 239.1,271.2 239.2,270.2 239.3,269.9 239.4,269.3 239.5,268.5 239.6,267.8 239.7,266.7 239.8,266.0 239.9,265.6 240.0,264.5 240.1,263.8 240.2,263.8 240.3,263.0 240.3,262.4 240.4,261.6 240.5,261.0 240.6,260.3 240.7,259.7 240.8,258.5 240.9,257.7 241.0,257.0 241.1,256.7 241.2,256.2 241.3,254.8 241.4,254.5 241.5,253.7 241.6,253.3 241.7,252.4 241.8,251.4 241.9,251.3 242.0,250.1 242.1,249.8 242.2,248.5 242.3,248.4 242.4,247.8 242.5,246.9 242.6,246.2 242.7,245.7 242.8,244.7 242.9,244.5 243.0,243.7 243.1,242.6 243.2,242.0 243.3,241.6 243.4,240.9 243.5,240.2 243.6,239.5 243.7,238.1 243.8,237.0 243.9,237.5 244.0,236.7 244.1,235.6 244.2,235.0 244.3,234.6 244.4,233.6 244.5,233.2 244.6,231.8 244.7,231.9 244.8,230.8 244.9,230.3 245.0,229.5 245.2,228.3 245.3,228.4 245.4,227.5 245.5,227.0 245.6,226.0 245.7,225.6 245.9,224.3 246.0,224.4 246.1,223.2 246.3,222.6 246.5,222.2 246.7,220.5 247.0,220.4 247.3,219.8 247.5,219.2 247.8,218.2 248.1,217.8 248.4,217.4 248.8,216.7 249.1,216.5 249.5,216.0 249.9,215.1 250.3,214.8 250.7,214.2 251.2,213.7 251.7,212.8 252.2,212.6 252.8,211.6 253.4,212.0 254.0,211.4 254.6,211.1 255.2,210.8 255.8,209.8 256.4,210.2 257.0,209.3 257.6,209.2 258.1,208.7 258.7,208.4 259.3,208.1 259.9,207.8 260.4,206.5 261.0,207.1 261.6,206.2 262.1,205.8 262.7,205.5 263.2,205.3 263.8,205.0 264.3,204.1 264.9,204.0 265.4,203.6 265.9,203.0 266.4,202.7 266.9,202.1 267.4,201.3 267.9,200.8 268.4,200.5 268.9,199.4 269.4,199.4 269.8,199.0 270.3,197.5 270.8,198.0 271.3,197.5 271.8,197.0 272.3,196.2 272.8,195.4 273.3,195.1 273.9,195.2 274.4,194.2 274.9,193.7 275.4,193.4 276.0,192.1 276.5,192.6 277.0,192.5 277.6,191.6 278.1,191.6 278.7,190.6 279.2,190.8 279.8,189.8 280.4,189.9 280.9,189.5 281.5,188.4 282.1,188.4 282.7,188.0 283.3,188.0 283.9,187.6 284.5,187.3 285.1,186.9 285.7,186.6 286.3,185.9 286.9,185.7 287.5,185.3 288.1,185.2 288.7,184.3 289.3,184.2 289.9,183.8 290.5,183.8 291.1,183.3 291.7,183.0 292.3,182.5 292.9,182.4 293.6,181.4 294.2,180.3 294.8,181.4 295.4,180.3 296.1,180.4 296.7,179.9 297.3,179.9 298.0,179.4 298.6,179.5 299.2,179.1 299.9,178.5 300.5,178.0 301.2,178.3 301.8,178.0 302.4,177.5 303.1,176.7 303.7,177.2 304.3,176.9 305.0,176.7 305.6,176.4 306.3,176.0 306.9,175.5 307.5,174.6 308.2,174.4 308.8,174.9 309.4,174.5 310.1,174.3 310.7,173.7 311.3,173.8 312.0,173.3 312.6,172.7 313.3,173.0 313.9,172.5 314.5,172.1 315.2,171.8 315.8,171.3 316.4,171.3 317.1,171.0 317.7,170.8 318.4,170.7 319.0,170.3 319.7,169.7 320.3,169.5 321.0,169.2 321.6,169.3 322.2,168.7 322.9,168.3 323.5,168.3 324.2,168.3 324.8,167.2 325.5,166.7 326.1,167.1 326.8,166.9 327.4,166.2 328.1,165.8 328.7,166.2 329.4,165.8 330.0,165.1 330.7,164.5 331.3,165.3 332.0,164.9 332.6,164.5 333.2,164.2 333.9,163.5 334.5,163.2 335.2,163.1 335.8,163.4 336.5,162.8 337.1,162.3 337.8,161.9 338.4,162.1 339.1,162.1 339.7,161.7 340.4,161.2 341.1,161.3 341.7,160.1 342.4,160.7 343.0,160.7 343.7,160.1 344.4,160.1 345.0,159.9 345.7,159.6 346.3,159.3 347.0,158.8 347.7,158.8 348.3,158.1 349.0,158.5 349.7,157.7 350.3,157.2 351.0,157.2 351.6,157.3 352.3,157.4 353.0,157.0 353.6,156.5 354.3,156.8 355.0,156.4 355.6,156.1 356.3,155.7 357.0,155.6 357.6,155.8 358.3,154.7 359.0,155.0 359.6,154.9 360.3,154.7 360.9,154.5 361.6,154.1 362.3,154.2 362.9,153.5 363.6,152.6 364.3,153.4 364.9,153.2 365.6,152.4 366.3,152.3 366.9,152.4 367.6,152.0 368.3,152.0 368.9,151.9 369.6,151.8 370.3,151.5 370.9,151.1 371.6,151.2 372.3,150.6 373.0,150.8 373.6,149.6 374.3,150.2 375.0,150.3 375.6,149.6 376.3,149.2 377.0,148.8 377.6,148.5 378.3,148.9 379.0,148.3 379.6,148.8 380.3,148.0 381.0,148.4 381.7,148.1 382.3,147.8 383.0,147.4 383.7,147.2 384.4,147.3 385.0,147.0 385.7,147.0 386.4,146.5 387.1,146.3 387.8,146.3 388.4,146.2 389.1,145.9 389.8,145.5 390.5,145.5 391.2,145.1 391.9,145.7 392.5,145.2 393.2,144.6 393.9,145.3 394.6,145.1 395.3,144.3 396.0,143.8 396.6,144.6 397.3,144.1 398.0,143.9 398.7,144.0 399.4,143.6 400.1,143.2 400.7,143.6 401.4,143.6 402.1,143.2 402.8,143.1 403.4,142.7 404.1,142.5 404.8,142.1 405.5,142.3 406.2,141.6 406.8,142.2 407.5,141.2 408.2,141.5 408.9,141.0 409.5,140.3 410.2,141.1 410.9,140.5 411.6,140.5 412.2,139.6 412.9,140.2 413.6,139.6 414.3,139.8 414.9,139.3 415.6,139.0 416.3,139.3 417.0,139.4 417.7,139.0 418.3,139.0 419.0,138.7 419.7,137.8 420.2,138.6 420.7,139.0 421.3,139.2 421.9,139.4 422.5,140.5 422.9,140.7 423.3,141.4 423.7,142.1 424.1,142.4 424.4,143.3 424.6,143.8 424.9,143.8 425.2,144.9 425.4,145.8 425.7,145.3 425.9,146.8 426.1,147.5 426.4,148.6 426.6,149.2 426.9,149.7 427.1,150.7 427.3,150.5 427.6,151.8 427.8,152.2 428.1,152.5 428.4,153.8 428.7,154.4 429.0,155.0 429.3,155.3 429.6,156.3 429.9,156.7 430.2,157.6 430.5,157.9 430.9,158.6 431.2,158.9 431.5,160.0 431.9,160.7 432.2,161.0 432.5,162.0 432.8,162.3 433.2,163.0 433.5,163.4 433.8,164.0 434.1,164.9 434.4,165.5 434.7,165.9 435.0,166.4 435.3,167.6 435.6,168.0 435.9,168.2 436.2,169.5 436.5,170.0 436.8,170.5 437.1,171.5 437.5,171.8 437.8,172.0 438.1,173.0 438.4,173.1 438.8,174.0 439.1,174.8 439.5,175.7 439.8,175.8 440.2,176.6 440.6,177.6 441.0,177.8 441.4,178.7 441.7,179.0 442.1,179.4 442.5,180.2 442.9,180.5 443.2,181.5 443.6,182.1 444.0,182.2 444.3,183.0 444.7,183.9 445.0,184.1 445.4,184.7 445.7,185.8 446.0,186.3 446.3,186.3 446.6,187.7 447.0,187.9 447.3,188.9 447.6,189.4 447.9,190.0 448.3,190.3 448.6,191.5 449.0,191.8 449.3,192.3 449.7,192.9 450.1,193.8 450.4,194.4 450.8,195.0 451.2,195.6 451.5,196.2 451.9,196.4 452.3,197.1 452.7,197.9 453.0,198.1 453.4,198.6 453.8,199.4 454.2,199.9 454.6,200.6 454.9,201.5 455.3,201.9 455.7,202.4 456.1,202.5 456.5,203.4 456.9,204.2 457.3,205.0 457.7,205.5 458.1,205.7 458.5,206.4 458.8,206.9 459.2,207.8 459.6,208.5 460.0,208.4 460.4,209.3 460.8,210.2 461.2,210.8 461.6,211.3 462.0,211.2 462.4,212.6 462.8,213.0 463.2,212.9 463.6,214.1 464.0,214.6 464.4,214.8 464.8,215.5 465.2,216.5 465.6,217.0 466.0,217.7 466.5,218.2 466.9,218.4 467.3,219.0 467.7,219.8 468.2,220.5 468.6,220.2 469.1,221.2 469.5,221.9 470.0,222.1 470.5,222.5 470.9,223.1 471.4,223.8 471.9,224.0 472.4,225.1 472.8,225.4 473.3,225.2 473.8,226.5 474.3,226.4 474.8,227.6 475.3,228.2 475.8,228.3 476.4,228.7 476.9,229.5 477.4,229.8 477.9,230.3 478.4,230.3 479.0,231.4 479.5,230.9 480.0,232.0 480.5,232.7 481.1,233.0 481.6,233.4 482.1,234.0 482.7,234.5 483.2,234.2 483.8,235.3 484.3,235.4 484.8,236.3 485.4,236.6 485.9,237.1 486.5,236.8 487.0,238.0 487.6,238.5 488.1,238.7 488.7,239.3 489.2,239.8 489.8,240.0 490.4,240.6 490.9,241.1 491.5,240.4 492.0,241.9 492.6,242.1 493.2,242.4 493.7,243.1 494.3,243.4 494.9,243.8 495.4,243.9 496.0,244.8 496.6,244.5 497.2,245.3 497.7,245.6 498.3,246.3 498.9,246.5 499.5,247.2 500.1,247.4 500.6,247.9 501.2,248.1 501.8,248.4 502.4,249.1 503.0,249.5 503.5,250.0 504.1,249.3 504.7,250.6 505.3,250.4 505.9,250.8 506.5,251.1 507.1,251.4 507.7,252.2 508.3,252.7 508.9,252.9 509.5,253.6 510.1,253.8 510.7,254.0 511.3,254.5 511.9,254.9 512.5,254.6 513.1,255.8 513.7,255.1 514.3,255.1 514.9,256.2 515.6,257.1 516.2,257.0 516.8,257.7 517.4,257.8 518.1,258.4 518.7,258.3 519.3,258.6 520.0,259.2 520.6,259.6 521.2,259.8 521.9,260.1 522.5,260.2 523.2,260.7 523.8,260.7 524.5,260.6 525.1,261.1 525.8,260.9 526.4,261.9 527.1,261.6 527.7,261.9 528.4,262.6 529.0,261.5 529.7,263.1 530.3,263.2 531.0,263.6 531.7,263.4 532.3,263.9 533.0,264.4 533.6,263.7 534.3,264.4 534.9,265.1 535.6,265.1 536.3,265.2 536.9,265.6 537.6,266.0 538.2,265.5 538.9,265.7 539.5,266.8 540.2,267.1 540.8,267.3 541.5,266.6 542.1,268.0 542.7,267.6 543.4,268.3 544.0,268.8 544.7,269.0 545.3,269.1 546.0,269.4 546.6,269.5 547.3,269.6 547.9,270.2 548.6,270.0 549.2,270.6 549.9,270.7 550.6,271.3 551.2,271.1 551.9,271.8 552.5,271.8 553.2,272.0 553.9,272.5 554.5,272.2 555.2,272.7 555.9,273.0 556.6,272.6 557.2,273.4 557.9,273.1 558.6,273.5 559.3,273.8 559.9,274.0 560.6,273.9 561.3,274.5 562.0,274.1 562.6,274.3 563.3,274.6 564.0,274.8 564.7,274.6 565.4,274.9 566.0,275.6 566.7,275.3 567.4,276.0 568.1,275.7 568.8,276.4 569.4,276.5 570.1,276.5 570.8,276.6 571.5,276.3 572.2,276.9 572.9,276.9 573.5,277.5 574.2,277.7 574.9,276.7 575.6,276.9 576.3,277.8 577.0,277.4 577.6,278.3 578.3,278.5 579.0,276.9 579.7,278.7 580.4,278.2 581.1,278.6 581.7,279.1 582.4,279.3 583.1,278.8 583.8,279.7 584.5,279.8 585.2,279.8 585.8,279.5 586.5,280.0 587.2,280.4 587.9,280.4 588.6,280.4 589.3,280.8 590.0,281.0 590.6,281.2 591.3,281.1 592.0,281.5 592.7,281.6 593.4,281.1 594.1,281.4 594.7,282.0 595.4,281.5 596.1,282.3 596.8,282.2 597.5,282.3 598.2,282.5 598.9,282.6 599.5,282.7 600.2,282.9 600.9,283.4 601.6,282.2 602.3,282.6 603.0,283.8 603.7,283.8 604.3,283.6 605.0,284.0 605.7,283.1 606.4,283.9 607.1,284.1 607.8,284.8 608.5,284.2 609.1,284.5 609.8,285.0 610.5,284.9 611.2,285.1 611.9,285.3 612.6,285.5 613.3,285.7 613.9,286.0 614.6,286.1 615.3,286.0 616.0,286.1 616.7,286.5 617.4,286.6 618.1,286.8 618.8,286.6 619.4,286.3 620.1,287.0 620.8,287.1 621.5,287.5 622.2,287.1 622.9,286.7 623.6,287.0 624.2,288.0 624.9,287.6 625.6,288.3 626.3,287.4 627.0,288.4 627.7,288.1 628.4,288.6 629.1,288.4 629.7,288.4 630.4,289.2 631.1,289.3 631.8,288.5 632.5,289.5 633.2,289.2 633.9,289.6 634.6,289.7 635.2,289.7 635.9,290.0 636.6,289.6 637.3,290.3 638.0,290.4 638.7,290.5 639.4,290.9 640.1,291.0 640.8,291.0 641.4,291.0 642.1,291.1 642.8,291.4 643.5,291.0 644.2,291.8 644.9,291.2 645.6,292.1 646.3,292.1 647.0,291.8 647.6,292.0 648.3,291.6 649.0,292.0 649.7,292.1 650.4,292.3 651.1,292.9 651.8,293.1 652.5,292.9 653.2,293.3 653.9,292.8 654.6,293.3 655.2,293.5 655.9,293.5 656.6,293.7 657.3,293.8 658.0,293.2 658.7,293.7 659.4,294.3 660.1,294.3 660.8,294.2 661.5,294.5 662.2,294.5 662.9,294.2 663.5,294.4 664.2,294.5 664.9,295.0 665.6,295.0 666.3,295.1 667.0,295.3 667.7,295.4 668.4,295.4 669.1,295.2 669.8,295.8 670.5,295.5 671.2,295.5 671.9,295.6 672.6,295.9 673.3,295.9 673.9,296.4 674.6,296.5 675.3,296.3 676.0,296.4 676.7,296.1 677.4,296.2 678.1,296.5 678.8,297.0 679.5,296.9 680.2,297.1 680.9,296.5 681.6,296.8 682.3,296.9 683.0,297.1 683.7,297.3 684.4,297.1 685.1,297.1 685.8,297.7 686.5,297.8 687.1,297.9 687.8,298.1 688.5,297.7 689.2,297.8 689.9,298.0 690.6,298.0 691.3,298.2 692.0,297.9 692.7,297.5 693.4,298.2 694.1,298.7 694.8,298.4 695.5,298.7 696.2,299.0 696.9,298.6 697.6,298.4 698.3,299.2 699.0,299.2 699.7,298.9 700.4,299.0 701.1,299.2 701.8,299.5 702.5,299.6 703.1,299.7 703.8,299.8 704.5,299.9 705.2,299.3 705.9,300.0 706.6,299.7 707.3,300.2 708.0,299.6 708.7,300.1 709.4,300.5 710.1,300.4 710.8,300.5 711.5,300.6 712.2,300.4 712.9,300.7 713.6,300.5 714.3,300.5 715.0,300.6 715.7,300.7 716.4,301.0 717.1,301.1 717.8,300.9 718.5,300.8 719.2,301.4 719.9,300.6 720.6,301.4 721.3,301.3 721.9,301.1 722.6,301.5 723.3,301.5 724.0,301.7 724.7,301.9 725.4,301.7 726.1,301.5 726.8,301.9 727.5,302.2 728.2,301.7 728.9,302.1 729.6,302.3 730.3,302.3 731.0,302.3 731.7,302.6 732.4,302.0 733.1,302.7 733.8,302.7 734.5,302.7 735.2,301.7 735.9,302.2 736.6,302.8 737.3,302.8 738.0,302.8 738.7,303.2 739.4,303.2 740.1,303.3 740.8,303.0 741.5,303.1 742.2,303.3 742.9,303.5 743.6,302.6 744.3,303.7 745.0,303.2 745.7,303.5 746.4,303.8 747.0,303.2 747.7,303.6 748.4,303.5 749.1,303.5 749.8,304.0 750.5,303.1 751.2,304.0 751.9,303.8 752.6,304.2 753.3,304.4 754.0,303.8 754.7,304.0 755.4,303.9 755.4,308.6 754.7,309.0 754.0,308.3 753.3,309.0 752.6,308.6 751.9,308.2 751.2,308.0 750.5,308.1 749.8,308.0 749.1,308.4 748.4,308.0 747.7,307.8 747.0,307.8 746.4,307.5 745.7,307.7 745.0,307.6 744.3,307.3 743.6,307.9 742.9,307.6 742.2,307.1 741.5,307.1 740.8,307.1 740.1,307.1 739.4,307.3 738.7,307.1 738.0,307.8 737.3,307.1 736.6,306.6 735.9,307.0 735.2,306.5 734.5,306.4 733.8,306.8 733.1,306.5 732.4,307.5 731.7,306.1 731.0,306.5 730.3,306.3 729.6,306.3 728.9,306.1 728.2,306.5 727.5,306.0 726.8,306.1 726.1,305.8 725.4,305.7 724.7,306.1 724.0,305.5 723.3,305.4 722.6,305.7 721.9,305.8 721.3,305.5 720.6,305.2 719.9,305.3 719.2,305.8 718.5,305.5 717.8,305.3 717.1,305.1 716.4,305.0 715.7,304.8 715.0,304.8 714.3,304.8 713.6,304.5 712.9,304.4 712.2,304.5 711.5,304.3 710.8,304.3 710.1,304.9 709.4,304.3 708.7,304.2 708.0,304.9 707.3,304.1 706.6,304.1 705.9,304.1 705.2,303.8 704.5,303.6 703.8,304.0 703.1,303.4 702.5,303.9 701.8,303.4 701.1,303.1 700.4,303.4 699.7,303.0 699.0,303.2 698.3,303.0 697.6,303.5 696.9,302.8 696.2,303.3 695.5,303.0 694.8,303.6 694.1,302.7 693.4,302.5 692.7,302.3 692.0,302.4 691.3,302.0 690.6,302.1 689.9,302.4 689.2,302.3 688.5,301.8 687.8,301.7 687.1,301.5 686.5,303.1 685.8,301.9 685.1,301.9 684.4,301.7 683.7,301.3 683.0,301.5 682.3,301.0 681.6,301.0 680.9,301.8 680.2,301.0 679.5,301.0 678.8,300.8 678.1,300.5 677.4,300.5 676.7,300.9 676.0,300.4 675.3,300.7 674.6,300.1 673.9,300.3 673.3,300.3 672.6,300.0 671.9,299.7 671.2,299.7 670.5,299.7 669.8,299.4 669.1,299.5 668.4,299.3 667.7,299.1 667.0,299.3 666.3,298.9 665.6,299.0 664.9,299.4 664.2,298.6 663.5,298.6 662.9,299.7 662.2,298.6 661.5,298.4 660.8,298.2 660.1,298.7 659.4,298.2 658.7,298.4 658.0,298.2 657.3,297.8 656.6,298.5 655.9,297.6 655.2,297.4 654.6,297.6 653.9,297.5 653.2,298.2 652.5,296.8 651.8,296.7 651.1,296.7 650.4,296.9 649.7,296.4 649.0,296.6 648.3,296.8 647.6,296.3 647.0,295.9 646.3,295.8 645.6,295.6 644.9,295.7 644.2,295.6 643.5,295.6 642.8,295.2 642.1,295.2 641.4,295.3 640.8,294.8 640.1,294.9 639.4,294.8 638.7,294.3 638.0,294.4 637.3,294.1 636.6,294.0 635.9,294.2 635.2,294.0 634.6,293.9 633.9,293.5 633.2,293.6 632.5,293.2 631.8,293.4 631.1,293.8 630.4,293.0 629.7,292.9 629.1,293.7 628.4,292.4 627.7,292.7 627.0,292.2 626.3,292.3 625.6,293.0 624.9,291.9 624.2,291.8 623.6,291.6 622.9,291.4 622.2,291.2 621.5,291.8 620.8,291.5 620.1,291.6 619.4,291.1 618.8,290.9 618.1,290.5 617.4,291.2 616.7,290.2 616.0,290.2 615.3,290.6 614.6,289.9 613.9,289.7 613.3,290.3 612.6,289.3 611.9,289.2 611.2,289.4 610.5,289.2 609.8,288.8 609.1,288.8 608.5,289.1 607.8,288.4 607.1,288.5 606.4,289.0 605.7,288.7 605.0,288.0 604.3,287.8 603.7,287.8 603.0,287.6 602.3,287.3 601.6,287.3 600.9,287.9 600.2,287.4 599.5,286.7 598.9,286.6 598.2,287.1 597.5,286.3 596.8,286.5 596.1,285.9 595.4,286.0 594.7,285.7 594.1,286.1 593.4,286.0 592.7,286.2 592.0,286.2 591.3,285.0 590.6,285.4 590.0,285.3 589.3,285.5 588.6,285.2 587.9,284.8 587.2,284.3 586.5,283.9 585.8,284.3 585.2,284.3 584.5,283.8 583.8,283.3 583.1,283.6 582.4,283.3 581.7,283.0 581.1,283.0 580.4,282.6 579.7,282.4 579.0,283.2 578.3,282.4 577.6,282.1 577.0,282.7 576.3,281.9 575.6,282.1 574.9,281.5 574.2,281.7 573.5,281.2 572.9,281.3 572.2,280.7 571.5,281.2 570.8,280.8 570.1,280.5 569.4,280.3 568.8,280.0 568.1,280.3 567.4,279.7 566.7,280.1 566.0,279.6 565.4,279.2 564.7,279.5 564.0,278.8 563.3,279.0 562.6,278.5 562.0,278.6 561.3,278.7 560.6,278.2 559.9,278.0 559.3,278.0 558.6,277.6 557.9,278.0 557.2,277.4 556.6,277.5 555.9,277.0 555.2,277.0 554.5,276.2 553.9,276.4 553.2,276.5 552.5,276.0 551.9,275.9 551.2,275.7 550.6,275.0 549.9,275.1 549.2,274.5 548.6,274.6 547.9,274.4 547.3,274.3 546.6,274.0 546.0,273.4 545.3,272.9 544.7,273.0 544.0,272.8 543.4,272.7 542.7,272.5 542.1,272.1 541.5,271.6 540.8,271.6 540.2,271.6 539.5,271.1 538.9,270.5 538.2,270.4 537.6,270.2 536.9,269.9 536.3,269.3 535.6,269.3 534.9,269.3 534.3,269.5 533.6,268.3 533.0,268.1 532.3,267.8 531.7,267.5 531.0,267.4 530.3,267.1 529.7,267.3 529.0,266.7 528.4,266.6 527.7,266.4 527.1,266.0 526.4,265.5 525.8,265.5 525.1,265.5 524.5,265.0 523.8,264.9 523.2,264.7 522.5,264.4 521.9,264.2 521.2,264.0 520.6,263.4 520.0,262.8 519.3,263.5 518.7,262.6 518.1,262.3 517.4,261.7 516.8,262.3 516.2,261.2 515.6,261.2 514.9,260.5 514.3,260.2 513.7,259.8 513.1,260.8 512.5,259.8 511.9,259.1 511.3,258.4 510.7,258.4 510.1,257.6 509.5,257.4 508.9,257.3 508.3,257.2 507.7,256.4 507.1,256.4 506.5,255.7 505.9,255.7 505.3,254.8 504.7,254.3 504.1,254.2 503.5,254.6 503.0,253.8 502.4,253.3 501.8,252.8 501.2,253.0 500.6,252.2 500.1,251.7 499.5,251.0 498.9,250.9 498.3,250.9 497.7,250.0 497.2,249.5 496.6,249.2 496.0,248.6 495.4,248.1 494.9,248.0 494.3,247.3 493.7,247.0 493.2,246.5 492.6,246.0 492.0,245.7 491.5,245.5 490.9,245.2 490.4,245.0 489.8,244.7 489.2,243.6 488.7,243.4 488.1,243.0 487.6,243.3 487.0,241.9 486.5,241.6 485.9,241.2 485.4,241.0 484.8,240.4 484.3,240.2 483.8,239.3 483.2,239.3 482.7,238.5 482.1,238.2 481.6,237.5 481.1,237.3 480.5,237.1 480.0,236.1 479.5,235.7 479.0,235.7 478.4,234.6 477.9,234.8 477.4,233.7 476.9,234.0 476.4,233.6 475.8,232.9 475.3,232.2 474.8,231.3 474.3,230.9 473.8,230.2 473.3,230.5 472.8,230.4 472.4,228.8 471.9,229.0 471.4,228.3 470.9,227.2 470.5,227.3 470.0,226.7 469.5,226.9 469.1,225.2 468.6,224.9 468.2,224.1 467.7,224.1 467.3,223.8 466.9,222.8 466.5,222.8 466.0,221.4 465.6,220.9 465.2,220.8 464.8,219.9 464.4,219.1 464.0,218.6 463.6,218.4 463.2,217.8 462.8,216.7 462.4,216.6 462.0,215.7 461.6,215.0 461.2,214.4 460.8,214.3 460.4,214.5 460.0,212.7 459.6,212.2 459.2,212.0 458.8,211.5 458.5,210.4 458.1,209.8 457.7,209.7 457.3,208.8 456.9,209.2 456.5,207.5 456.1,208.2 455.7,206.9 455.3,205.9 454.9,205.7 454.6,204.5 454.2,204.2 453.8,203.7 453.4,202.9 453.0,202.6 452.7,202.1 452.3,201.9 451.9,201.0 451.5,200.2 451.2,199.7 450.8,199.1 450.4,198.2 450.1,197.8 449.7,197.2 449.3,196.7 449.0,195.6 448.6,195.1 448.3,194.8 447.9,193.9 447.6,193.5 447.3,192.8 447.0,192.3 446.6,191.6 446.3,191.0 446.0,190.5 445.7,189.7 445.4,189.1 445.0,188.6 444.7,188.2 444.3,187.7 444.0,186.7 443.6,186.0 443.2,185.2 442.9,184.7 442.5,184.6 442.1,183.5 441.7,183.1 441.4,183.1 441.0,181.9 440.6,181.3 440.2,181.4 439.8,180.4 439.5,179.7 439.1,178.9 438.8,178.2 438.4,177.8 438.1,177.6 437.8,176.6 437.5,175.9 437.1,175.2 436.8,174.4 436.5,174.8 436.2,173.2 435.9,172.8 435.6,172.7 435.3,171.5 435.0,171.2 434.7,170.6 434.4,169.6 434.1,169.1 433.8,168.4 433.5,167.4 433.2,167.4 432.8,167.0 432.5,165.8 432.2,165.4 431.9,164.5 431.5,164.1 431.2,163.5 430.9,163.2 430.5,162.1 430.2,161.5 429.9,161.1 429.6,160.7 429.3,160.1 429.0,158.9 428.7,158.4 428.4,157.6 428.1,156.8 427.8,156.8 427.6,155.8 427.3,155.2 427.1,154.9 426.9,154.4 426.6,153.1 426.4,152.6 426.1,152.2 425.9,151.2 425.7,150.3 425.4,150.3 425.2,149.0 424.9,148.6 424.6,148.3 424.4,147.0 424.1,146.7 423.7,145.8 423.3,145.4 422.9,144.7 422.5,144.1 421.9,143.9 421.3,143.9 420.7,142.9 420.2,142.5 419.7,142.8 419.0,143.2 418.3,142.9 417.7,142.9 417.0,143.1 416.3,143.6 415.6,144.0 414.9,144.4 414.3,143.8 413.6,144.1 412.9,144.9 412.2,144.9 411.6,144.5 410.9,144.9 410.2,145.4 409.5,145.5 408.9,145.6 408.2,145.5 407.5,145.9 406.8,145.7 406.2,146.5 405.5,146.4 404.8,146.2 404.1,146.8 403.4,146.9 402.8,147.8 402.1,147.0 401.4,147.5 400.7,147.6 400.1,147.7 399.4,147.7 398.7,147.9 398.0,147.9 397.3,148.5 396.6,148.4 396.0,148.9 395.3,148.9 394.6,149.7 393.9,149.7 393.2,149.0 392.5,149.8 391.9,149.4 391.2,149.5 390.5,149.7 389.8,149.8 389.1,150.6 388.4,150.6 387.8,150.9 387.1,151.1 386.4,151.4 385.7,151.2 385.0,150.9 384.4,151.7 383.7,151.8 383.0,151.7 382.3,152.1 381.7,151.8 381.0,152.2 380.3,152.5 379.6,152.7 379.0,153.1 378.3,152.8 377.6,153.9 377.0,154.0 376.3,153.4 375.6,154.6 375.0,153.9 374.3,154.5 373.6,154.4 373.0,155.6 372.3,154.9 371.6,154.8 370.9,155.1 370.3,155.4 369.6,155.7 368.9,155.8 368.3,156.6 367.6,156.4 366.9,156.5 366.3,156.7 365.6,156.8 364.9,157.8 364.3,157.5 363.6,157.7 362.9,157.6 362.3,157.9 361.6,158.4 360.9,158.4 360.3,159.2 359.6,158.8 359.0,158.9 358.3,159.3 357.6,159.6 357.0,159.9 356.3,159.9 355.6,160.6 355.0,160.5 354.3,160.6 353.6,160.7 353.0,160.9 352.3,161.6 351.6,161.5 351.0,161.6 350.3,161.8 349.7,162.0 349.0,162.4 348.3,162.5 347.7,162.7 347.0,162.9 346.3,163.6 345.7,163.6 345.0,163.7 344.4,164.6 343.7,164.4 343.0,165.2 342.4,164.9 341.7,165.0 341.1,165.0 340.4,165.6 339.7,166.0 339.1,166.0 338.4,166.0 337.8,166.6 337.1,166.9 336.5,166.9 335.8,167.4 335.2,167.4 334.5,167.9 333.9,168.1 333.2,168.1 332.6,168.4 332.0,169.1 331.3,168.9 330.7,169.3 330.0,169.7 329.4,170.1 328.7,170.2 328.1,170.4 327.4,170.6 326.8,171.1 326.1,171.7 325.5,171.7 324.8,172.3 324.2,172.2 323.5,172.4 322.9,173.1 322.2,172.8 321.6,173.1 321.0,173.2 320.3,173.7 319.7,173.9 319.0,174.4 318.4,174.8 317.7,174.7 317.1,174.8 316.4,175.7 315.8,175.3 315.2,176.1 314.5,176.4 313.9,176.6 313.3,176.9 312.6,177.1 312.0,177.3 311.3,177.4 310.7,178.1 310.1,178.4 309.4,179.1 308.8,178.6 308.2,179.3 307.5,179.9 306.9,179.7 306.3,179.9 305.6,180.1 305.0,180.3 304.3,180.8 303.7,181.1 303.1,181.6 302.4,181.8 301.8,182.3 301.2,183.1 300.5,182.3 299.9,182.8 299.2,183.0 298.6,184.1 298.0,184.3 297.3,183.9 296.7,184.2 296.1,184.5 295.4,185.3 294.8,185.1 294.2,185.5 293.6,185.9 292.9,186.2 292.3,186.7 291.7,187.0 291.1,187.0 290.5,187.6 289.9,188.0 289.3,188.1 288.7,188.7 288.1,189.0 287.5,189.2 286.9,189.9 286.3,190.0 285.7,190.5 285.1,191.4 284.5,191.2 283.9,191.7 283.3,192.2 282.7,192.2 282.1,192.8 281.5,192.9 280.9,193.5 280.4,193.7 279.8,194.0 279.2,194.8 278.7,195.2 278.1,195.4 277.6,196.3 277.0,196.5 276.5,196.5 276.0,197.1 275.4,198.8 274.9,198.2 274.4,198.7 273.9,199.0 273.3,199.5 272.8,200.4 272.3,200.5 271.8,201.2 271.3,201.4 270.8,201.8 270.3,202.4 269.8,202.8 269.4,203.5 268.9,204.0 268.4,204.3 267.9,204.9 267.4,205.9 266.9,206.0 266.4,206.7 265.9,207.3 265.4,207.7 264.9,208.3 264.3,208.3 263.8,208.9 263.2,209.3 262.7,209.4 262.1,210.2 261.6,210.5 261.0,210.7 260.4,211.4 259.9,211.5 259.3,211.9 258.7,213.0 258.1,213.2 257.6,213.2 257.0,214.2 256.4,214.6 255.8,214.4 255.2,215.0 254.6,215.0 254.0,216.4 253.4,216.2 252.8,216.2 252.2,216.7 251.7,216.9 251.2,217.8 250.7,217.9 250.3,218.6 249.9,219.6 249.5,219.9 249.1,220.4 248.8,221.1 248.4,222.3 248.1,223.2 247.8,222.7 247.5,224.5 247.3,224.1 247.0,224.8 246.7,225.6 246.5,226.4 246.3,226.7 246.1,227.3 246.0,228.0 245.9,228.7 245.7,229.4 245.6,230.1 245.5,230.9 245.4,231.8 245.3,232.4 245.2,233.4 245.0,233.7 244.9,234.3 244.8,235.1 244.7,235.6 244.6,236.8 244.5,237.0 244.4,238.7 244.3,238.5 244.2,239.0 244.1,240.0 244.0,240.4 243.9,241.5 243.8,242.0 243.7,242.5 243.6,243.3 243.5,243.9 243.4,245.1 243.3,245.4 243.2,246.4 243.1,246.6 243.0,247.9 242.9,248.2 242.8,249.3 242.7,249.4 242.6,250.2 242.5,251.6 242.4,251.5 242.3,252.2 242.2,253.3 242.1,254.4 242.0,254.2 241.9,255.0 241.8,255.6 241.7,257.3 241.6,257.3 241.5,258.5 241.4,258.5 241.3,259.1 241.2,260.0 241.1,260.5 241.0,261.7 240.9,262.3 240.8,262.9 240.7,263.5 240.6,264.4 240.5,265.4 240.4,265.4 240.3,266.5 240.3,267.2 240.2,267.5 240.1,268.1 240.0,269.0 239.9,269.7 239.8,270.9 239.7,270.9 239.6,272.7 239.5,272.3 239.4,273.5 239.3,274.2 239.2,275.0 239.1,275.3 239.0,276.0 238.9,276.4 238.8,277.1 238.7,278.3 238.6,278.6 238.5,279.8 238.4,280.9 238.3,281.3 238.2,281.3 238.1,282.3 238.0,283.0 237.9,283.4 237.8,284.2 237.6,285.6 237.5,285.5 237.4,286.2 237.3,287.1 237.2,288.0 237.0,289.0 236.9,289.1 236.8,289.5 236.7,290.5 236.5,291.2 236.4,291.8 236.3,292.9 236.1,293.1 236.0,294.4 235.8,294.4 235.7,295.7 235.5,295.8 235.3,296.5 235.2,297.1 235.0,298.0 234.8,299.1 234.6,299.9 234.5,299.8 234.3,300.7 234.1,301.4 233.9,302.3 233.7,303.8 233.5,303.3 233.3,304.4 233.1,304.9 232.9,305.4 232.8,306.3 232.6,306.8 232.4,307.7 232.2,308.1 232.0,308.7 231.9,309.4 231.7,310.0 231.5,311.1 231.2,311.5 230.9,312.3 230.6,312.6 230.3,313.5 229.9,314.4 229.5,314.9 229.0,315.0 228.6,316.7 228.0,316.4 227.3,315.6 226.6,315.7 225.9,315.6 225.2,315.6 224.5,315.8 223.8,316.0 223.1,315.9 222.4,315.8 221.7,315.6 221.0,316.3 220.3,315.7 219.6,316.0 218.9,315.6 218.2,315.7 217.5,315.6 216.8,316.6 216.1,316.3 215.4,315.8 214.7,316.2 214.0,316.0 213.3,316.1 212.6,315.6 211.9,315.8 211.2,315.6 210.5,316.5 209.8,315.8 209.1,315.6 208.4,316.1 207.7,316.2 207.0,315.8 206.3,315.6 205.6,315.9 204.9,315.8 204.2,316.2 203.5,315.7 202.8,316.0 202.1,315.8 201.4,316.3 200.7,315.9 200.0,316.0 199.3,315.6 198.6,315.8 197.9,315.9 197.2,316.0 196.5,315.6 195.8,315.6 195.1,316.1 194.4,316.1 193.7,315.9 193.0,315.8 192.3,315.7 191.6,315.7 190.9,316.1 190.2,316.3 189.5,315.6 188.8,315.9 188.1,316.0 187.4,316.4 186.7,315.7 186.0,316.1 185.3,316.1 184.6,315.7 183.9,315.8 183.2,316.5 182.5,315.9 181.8,315.9 181.1,315.9 180.4,316.0 179.7,316.1 179.0,315.6 178.3,315.9 177.6,316.0 176.9,315.9 176.2,315.8 175.5,315.6 174.8,316.1 174.1,315.7 173.4,316.4 172.7,315.8 172.0,316.2 171.3,316.2 170.6,316.2 169.9,315.7 169.2,315.8 168.5,315.9 167.8,315.8 167.1,316.2 166.4,316.0 165.7,316.2 165.0,315.6 164.3,316.2 163.6,316.0 162.9,316.2 162.2,315.8 161.5,316.5 160.8,315.6 160.1,315.7 159.4,315.7 158.7,315.9 158.0,315.6 157.3,316.4 156.6,315.7 155.9,316.1 155.2,316.0 154.5,316.5 153.8,315.8 153.1,316.2 152.4,316.3 151.7,315.7 151.0,316.0 150.3,315.7 149.6,315.7 148.9,316.4 148.2,315.6 147.5,315.6 146.8,315.6 146.1,315.8 145.4,316.3 144.7,316.0 144.0,315.6 143.3,316.1 142.6,315.6 141.9,316.1 141.2,316.4 140.5,316.0 139.8,315.7 139.1,315.9 138.4,315.6 137.7,315.6 137.0,315.8 136.3,315.7 135.6,315.7 134.9,316.0 134.2,315.6 133.5,315.7 132.8,316.3 132.1,315.9 131.4,315.9 130.7,316.6 130.0,315.8 129.3,316.0 128.6,316.1 127.9,316.2 127.2,315.9 126.5,316.1 125.8,315.7 125.1,316.0 124.4,316.4 123.7,316.1 123.0,315.9 122.3,315.6 121.6,316.5 120.9,316.2 120.2,316.0 119.5,315.8 118.8,315.7 118.1,316.3 117.4,315.9 116.7,315.9 116.0,315.6 115.3,315.9 114.6,315.6 113.9,316.2 113.2,315.7 112.5,315.9 111.8,316.3 111.1,315.7 110.4,315.7 109.7,316.0 109.0,315.9 108.3,315.8 107.6,315.7 106.9,316.2 106.2,316.1 105.5,316.2 104.8,316.3 104.1,315.8 103.4,316.0 102.7,315.7 102.0,315.9 101.3,316.8 100.6,316.2 99.9,315.7 99.2,316.5 98.5,315.6 97.8,315.6 97.1,316.3 96.4,315.8 95.7,315.9 95.0,315.6 94.3,315.7 93.6,316.1 92.9,316.0 92.2,315.6 91.5,316.1 90.8,316.1 90.1,316.2 89.4,316.1 88.7,315.9 88.0,316.0 87.3,315.9 86.6,315.6 85.9,316.1 85.2,316.0 84.5,315.8 83.8,315.8 83.1,316.0 82.4,315.7 81.7,315.7 81.0,315.9 80.3,315.7 79.6,316.1 78.9,316.1 78.2,315.8 77.5,316.1 76.8,316.2 76.1,315.8 75.4,316.1 74.7,316.6 74.0,316.7 73.3,315.7 72.6,316.0 71.9,315.6 71.2,315.8 70.5,315.7 69.8,315.6 69.1,315.8 68.4,315.9 67.7,315.6 67.0,316.1 66.3,316.1 65.6,316.0 64.9,315.9 64.2,316.5 63.5,315.6 62.8,316.2 62.1,316.8 61.4,316.3 60.7,315.6 60.0,316.6 59.3,315.8 58.6,316.0 57.9,316.4 57.2,315.9 56.5,315.6 55.8,316.0 55.1,315.6 54.4,315.8 53.7,316.4 53.0,316.3 52.3,315.7 51.6,315.7 50.9,316.1 50.2,315.7 49.5,315.8 48.8,315.7 48.1,316.3 47.4,316.5 46.7,316.0 46.0,315.8 45.3,315.7 44.6,316.2 43.9,316.0 43.2,316.1 42.5,315.9 41.8,316.3 41.1,315.7 40.4,315.7 39.7,315.9 39.0,315.6 38.3,315.8 37.6,316.3 36.9,315.8 36.2,316.1 35.5,316.3 34.8,316.1 34.1,316.0 33.4,315.8 32.7,315.6 32.0,315.6 31.3,315.6 30.6,315.7 29.9,316.3 29.2,315.6 28.5,315.6 27.8,315.9 27.1,315.8 26.4,315.6 25.7,315.8 25.0,316.0 24.3,315.8 23.6,315.9 22.9,315.8 22.2,316.2 21.5,316.3 20.8,315.7 20.1,316.9 19.4,316.0 18.7,316.0 18.0,316.1 17.3,315.8 16.6,315.8 15.9,315.9 15.2,315.6 14.5,316.0 13.8,316.3 13.1,316.1 12.4,315.7 11.7,315.7 11.0,315.7Z" fill="#e6305a" stroke="none"/><path d="M11.0,313.8 12.5,313.8 14.0,313.8 15.5,313.8 17.0,313.8 18.5,313.8 20.0,313.8 21.5,313.8 23.0,313.8 24.5,313.8 26.0,313.8 27.5,313.8 29.0,313.8 30.5,313.8 32.0,313.8 33.5,313.8 35.0,313.8 36.5,313.8 38.0,313.8 39.5,313.8 41.0,313.8 42.5,313.8 44.0,313.8 45.5,313.8 47.0,313.8 48.5,313.8 50.0,313.8 51.5,313.8 53.0,313.8 54.5,313.8 56.0,313.8 57.5,313.8 59.0,313.8 60.5,313.8 62.0,313.8 63.5,313.8 65.0,313.8 66.5,313.8 68.0,313.8 69.5,313.8 71.0,313.8 72.5,313.8 74.0,313.8 75.5,313.8 77.0,313.8 78.5,313.8 80.0,313.8 81.5,313.8 83.0,313.8 84.5,313.8 86.0,313.8 87.5,313.8 89.0,313.8 90.5,313.8 92.0,313.8 93.5,313.8 95.0,313.8 96.5,313.8 98.0,313.8 99.5,313.8 101.0,313.8 102.5,313.8 104.0,313.8 105.5,313.8 107.0,313.8 108.5,313.8 110.0,313.8 111.5,313.8 113.0,313.8 114.5,313.8 116.0,313.8 117.5,313.8 119.0,313.8 120.5,313.8 122.0,313.8 123.5,313.8 125.0,313.8 126.5,313.8 128.0,313.8 129.5,313.8 131.0,313.8 132.5,313.8 134.0,313.8 135.5,313.8 137.0,313.8 138.5,313.8 140.0,313.8 141.5,313.8 143.0,313.8 144.5,313.8 146.0,313.8 147.5,313.8 149.0,313.8 150.5,313.8 152.0,313.8 153.5,313.8 155.0,313.8 156.5,313.8 158.0,313.8 159.5,313.8 161.0,313.8 162.5,313.8 164.0,313.8 165.5,313.8 167.0,313.8 168.5,313.8 170.0,313.8 171.5,313.8 173.0,313.8 174.5,313.8 176.0,313.8 177.5,313.8 179.0,313.8 180.5,313.8 182.0,313.8 183.5,313.8 185.0,313.8 186.5,313.8 188.0,313.8 189.5,313.8 191.0,313.8 192.5,313.8 194.0,313.8 195.5,313.8 197.0,313.8 198.5,313.8 200.0,313.8 201.5,313.8 203.0,313.8 204.5,313.8 206.0,313.8 207.5,313.8 209.0,313.8 210.5,313.8 212.0,313.8 213.5,313.8 215.0,313.8 216.5,313.8 218.0,313.8 219.5,313.8 221.0,313.8 222.5,313.8 224.0,313.8 225.5,313.8 227.0,313.8 228.4,313.7 229.4,312.6 230.3,311.3 231.0,310.0 231.5,308.6 231.9,307.2 232.3,305.7 232.7,304.3 233.1,302.8 233.5,301.4 233.9,299.9 234.3,298.5 234.7,297.0 235.1,295.6 235.4,294.1 235.8,292.7 236.1,291.2 236.4,289.7 236.7,288.3 237.0,286.8 237.2,285.3 237.5,283.8 237.7,282.4 238.0,280.9 238.2,279.4 238.4,277.9 238.6,276.4 238.9,274.9 239.1,273.5 239.3,272.0 239.5,270.5 239.7,269.0 239.9,267.5 240.1,266.0 240.3,264.5 240.5,263.1 240.7,261.6 240.9,260.1 241.1,258.6 241.4,257.1 241.6,255.6 241.8,254.1 242.0,252.7 242.2,251.2 242.4,249.7 242.6,248.2 242.8,246.7 243.0,245.2 243.2,243.8 243.5,242.3 243.7,240.8 243.9,239.3 244.1,237.8 244.3,236.3 244.5,234.8 244.8,233.4 245.0,231.9 245.3,230.4 245.5,228.9 245.8,227.4 246.0,226.0 246.4,224.5 246.9,223.1 247.5,221.7 248.1,220.3 248.8,219.0 249.6,217.7 250.4,216.5 251.4,215.4 252.6,214.4 253.8,213.6 255.1,212.9 256.4,212.1 257.7,211.3 258.9,210.4 260.1,209.5 261.3,208.6 262.5,207.7 263.7,206.8 264.9,205.9 266.0,204.9 267.1,203.8 268.1,202.8 269.2,201.7 270.2,200.6 271.2,199.5 272.3,198.5 273.4,197.5 274.5,196.5 275.7,195.5 276.8,194.5 278.0,193.6 279.1,192.6 280.4,191.8 281.6,190.9 282.9,190.1 284.1,189.3 285.4,188.5 286.7,187.8 288.0,187.0 289.3,186.2 290.6,185.5 291.9,184.7 293.2,184.0 294.5,183.3 295.9,182.7 297.2,182.0 298.6,181.4 300.0,180.8 301.3,180.2 302.7,179.6 304.1,178.9 305.4,178.3 306.8,177.7 308.2,177.1 309.5,176.4 310.9,175.8 312.2,175.2 313.6,174.6 315.0,173.9 316.4,173.3 317.7,172.7 319.1,172.2 320.5,171.6 321.9,171.0 323.3,170.4 324.7,169.9 326.0,169.3 327.4,168.7 328.8,168.2 330.2,167.6 331.6,167.0 333.0,166.4 334.4,165.8 335.7,165.3 337.1,164.7 338.5,164.2 339.9,163.6 341.3,163.1 342.7,162.6 344.2,162.1 345.6,161.6 347.0,161.1 348.4,160.6 349.8,160.2 351.3,159.7 352.7,159.2 354.1,158.7 355.5,158.3 357.0,157.8 358.4,157.3 359.8,156.8 361.2,156.4 362.7,155.9 364.1,155.5 365.5,155.0 366.9,154.5 368.4,154.1 369.8,153.6 371.2,153.2 372.7,152.7 374.1,152.3 375.5,151.8 377.0,151.4 378.4,151.0 379.8,150.5 381.3,150.1 382.7,149.7 384.2,149.3 385.6,149.0 387.1,148.6 388.5,148.3 390.0,147.9 391.5,147.6 392.9,147.3 394.4,147.0 395.9,146.7 397.3,146.3 398.8,146.0 400.3,145.6 401.7,145.3 403.2,144.9 404.6,144.5 406.1,144.1 407.5,143.7 409.0,143.4 410.4,143.0 411.9,142.6 413.3,142.2 414.8,141.8 416.2,141.4 417.7,141.1 419.1,140.7 420.3,140.9 421.6,141.6 422.7,142.6 423.6,143.8 424.3,145.2 424.9,146.5 425.5,147.9 426.0,149.3 426.5,150.8 427.0,152.2 427.5,153.6 428.1,155.0 428.7,156.3 429.3,157.7 430.0,159.0 430.7,160.4 431.4,161.7 432.1,163.0 432.8,164.3 433.5,165.7 434.1,167.0 434.8,168.4 435.4,169.7 436.1,171.1 436.7,172.4 437.4,173.8 438.1,175.1 438.8,176.4 439.6,177.7 440.4,179.0 441.2,180.2 442.0,181.5 442.8,182.8 443.6,184.0 444.4,185.3 445.1,186.6 445.8,187.9 446.5,189.3 447.2,190.6 447.9,191.9 448.6,193.2 449.4,194.5 450.2,195.8 450.9,197.1 451.7,198.4 452.5,199.6 453.4,200.9 454.2,202.2 455.0,203.4 455.8,204.7 456.7,205.9 457.5,207.2 458.3,208.4 459.2,209.6 460.0,210.9 460.9,212.1 461.7,213.4 462.5,214.6 463.4,215.8 464.3,217.1 465.1,218.3 466.0,219.5 466.9,220.7 467.9,221.9 468.8,223.0 469.8,224.2 470.8,225.3 471.8,226.4 472.8,227.5 473.9,228.5 475.0,229.6 476.1,230.6 477.2,231.6 478.3,232.6 479.4,233.6 480.5,234.6 481.7,235.6 482.8,236.5 484.0,237.5 485.2,238.4 486.3,239.4 487.5,240.3 488.7,241.2 489.9,242.1 491.1,243.0 492.3,243.9 493.5,244.8 494.7,245.7 495.9,246.6 497.2,247.4 498.4,248.3 499.6,249.1 500.9,250.0 502.1,250.8 503.4,251.6 504.6,252.4 505.9,253.2 507.2,254.1 508.4,254.8 509.7,255.6 511.0,256.4 512.3,257.1 513.6,257.9 514.9,258.6 516.3,259.3 517.6,259.9 519.0,260.6 520.3,261.2 521.7,261.8 523.1,262.4 524.5,263.0 525.9,263.5 527.3,264.1 528.7,264.6 530.1,265.1 531.5,265.7 532.9,266.2 534.3,266.7 535.7,267.2 537.1,267.8 538.5,268.3 539.9,268.9 541.3,269.4 542.6,270.0 544.0,270.6 545.4,271.2 546.8,271.7 548.2,272.3 549.6,272.8 551.0,273.3 552.4,273.8 553.9,274.2 555.3,274.7 556.7,275.1 558.2,275.5 559.6,275.9 561.1,276.3 562.5,276.6 564.0,277.0 565.5,277.4 566.9,277.7 568.4,278.1 569.8,278.4 571.3,278.8 572.8,279.1 574.2,279.4 575.7,279.8 577.1,280.1 578.6,280.4 580.1,280.7 581.5,281.1 583.0,281.4 584.5,281.7 585.9,282.0 587.4,282.3 588.9,282.6 590.3,282.9 591.8,283.3 593.3,283.6 594.7,283.9 596.2,284.2 597.7,284.5 599.2,284.8 600.6,285.1 602.1,285.4 603.6,285.7 605.0,286.0 606.5,286.3 608.0,286.6 609.4,286.9 610.9,287.2 612.4,287.5 613.9,287.8 615.3,288.1 616.8,288.4 618.3,288.7 619.7,289.0 621.2,289.2 622.7,289.5 624.1,289.8 625.6,290.1 627.1,290.4 628.6,290.7 630.0,291.0 631.5,291.2 633.0,291.5 634.5,291.8 635.9,292.1 637.4,292.4 638.9,292.6 640.4,292.9 641.8,293.2 643.3,293.4 644.8,293.7 646.3,293.9 647.7,294.2 649.2,294.5 650.7,294.7 652.2,294.9 653.7,295.2 655.1,295.4 656.6,295.7 658.1,295.9 659.6,296.1 661.1,296.4 662.6,296.6 664.0,296.8 665.5,297.0 667.0,297.2 668.5,297.4 670.0,297.6 671.5,297.8 673.0,298.0 674.4,298.2 675.9,298.4 677.4,298.6 678.9,298.8 680.4,299.0 681.9,299.2 683.4,299.3 684.9,299.5 686.4,299.7 687.8,299.9 689.3,300.0 690.8,300.2 692.3,300.4 693.8,300.5 695.3,300.7 696.8,300.9 698.3,301.0 699.8,301.2 701.3,301.4 702.7,301.5 704.2,301.7 705.7,301.8 707.2,302.0 708.7,302.2 710.2,302.3 711.7,302.5 713.2,302.6 714.7,302.8 716.2,302.9 717.7,303.1 719.2,303.2 720.7,303.4 722.1,303.5 723.6,303.7 725.1,303.8 726.6,303.9 728.1,304.1 729.6,304.2 731.1,304.3 732.6,304.5 734.1,304.6 735.6,304.7 737.1,304.9 738.6,305.0 740.1,305.1 741.6,305.3 743.1,305.4 744.6,305.5 746.1,305.6 747.5,305.8 749.0,305.9 750.5,306.0 752.0,306.2 753.5,306.3 755.0,306.4" stroke="#e6305a" stroke-width="1.1" stroke-opacity="0.8"/>
<path d="M11.0,311.8 11.7,311.8 12.4,311.6 13.1,311.9 13.8,311.8 14.5,311.9 15.2,311.5 15.9,312.0 16.6,312.0 17.3,311.5 18.0,311.5 18.7,311.8 19.4,311.7 20.1,311.8 20.8,311.7 21.5,311.9 22.2,311.4 22.9,311.7 23.6,311.4 24.3,311.3 25.0,311.6 25.7,311.8 26.4,311.3 27.1,310.9 27.8,311.4 28.5,311.4 29.2,311.8 29.9,311.9 30.6,311.6 31.3,311.9 32.0,311.7 32.7,311.0 33.4,312.0 34.1,312.0 34.8,311.7 35.5,311.6 36.2,312.0 36.9,311.9 37.6,311.7 38.3,311.3 39.0,311.9 39.7,311.6 40.4,311.7 41.1,311.1 41.8,312.0 42.5,311.2 43.2,311.6 43.9,311.5 44.6,311.5 45.3,311.3 46.0,312.0 46.7,311.7 47.4,311.5 48.1,311.9 48.8,311.7 49.5,311.5 50.2,311.4 50.9,312.0 51.6,311.9 52.3,311.7 53.0,310.8 53.7,311.2 54.4,311.6 55.1,312.0 55.8,311.5 56.5,311.9 57.2,311.3 57.9,312.0 58.6,312.0 59.3,311.6 60.0,311.5 60.7,311.7 61.4,311.9 62.1,311.0 62.8,311.4 63.5,311.9 64.2,311.7 64.9,311.9 65.6,311.7 66.3,312.0 67.0,311.9 67.7,311.9 68.4,311.8 69.1,312.0 69.8,311.3 70.5,311.9 71.2,311.7 71.9,311.9 72.6,311.7 73.3,311.9 74.0,311.8 74.7,311.5 75.4,310.9 76.1,311.8 76.8,312.0 77.5,312.0 78.2,311.4 78.9,311.8 79.6,311.5 80.3,311.6 81.0,312.0 81.7,311.7 82.4,311.6 83.1,311.2 83.8,311.5 84.5,312.0 85.2,312.0 85.9,312.0 86.6,311.9 87.3,311.8 88.0,311.7 88.7,311.7 89.4,311.7 90.1,311.9 90.8,311.8 91.5,311.9 92.2,311.1 92.9,311.7 93.6,312.0 94.3,312.0 95.0,311.8 95.7,311.9 96.4,311.7 97.1,311.1 97.8,311.8 98.5,311.6 99.2,311.2 99.9,311.8 100.6,312.0 101.3,311.7 102.0,311.5 102.7,311.9 103.4,311.5 104.1,311.4 104.8,311.6 105.5,311.6 106.2,311.5 106.9,312.0 107.6,310.8 108.3,311.2 109.0,311.8 109.7,311.9 110.4,311.6 111.1,312.0 111.8,312.0 112.5,311.7 113.2,312.0 113.9,311.3 114.6,311.7 115.3,311.4 116.0,311.5 116.7,312.0 117.4,312.0 118.1,312.0 118.8,312.0 119.5,311.2 120.2,311.6 120.9,311.7 121.6,312.0 122.3,310.8 123.0,311.9 123.7,311.4 124.4,311.0 125.1,311.3 125.8,311.8 126.5,311.7 127.2,311.3 127.9,311.5 128.6,311.9 129.3,311.8 130.0,311.9 130.7,311.7 131.4,311.6 132.1,311.6 132.8,311.6 133.5,311.3 134.2,311.6 134.9,311.4 135.6,311.4 136.3,311.2 137.0,311.5 137.7,311.7 138.4,311.9 139.1,311.0 139.8,311.2 140.5,311.8 141.2,311.7 141.9,311.2 142.6,311.6 143.3,311.9 144.0,312.0 144.7,311.4 145.4,311.6 146.1,311.6 146.8,311.5 147.5,311.8 148.2,311.9 148.9,311.9 149.6,311.9 150.3,311.7 151.0,311.9 151.7,311.2 152.4,311.7 153.1,311.6 153.8,311.9 154.5,311.8 155.2,311.9 155.9,311.1 156.6,312.0 157.3,311.4 158.0,311.5 158.7,311.7 159.4,311.5 160.1,311.7 160.8,311.6 161.5,312.0 162.2,311.3 162.9,311.7 163.6,311.2 164.3,311.9 165.0,311.4 165.7,312.0 166.4,312.0 167.1,311.1 167.8,311.7 168.5,311.7 169.2,311.4 169.9,312.0 170.6,311.7 171.3,311.9 172.0,311.6 172.7,312.0 173.4,311.5 174.1,312.0 174.8,312.0 175.5,311.8 176.2,311.7 176.9,311.9 177.6,311.8 178.3,311.7 179.0,311.9 179.7,311.8 180.4,312.0 181.1,312.0 181.8,312.0 182.5,312.0 183.2,312.0 183.9,311.3 184.6,311.5 185.3,311.8 186.0,311.9 186.7,311.9 187.4,312.0 188.1,311.9 188.8,311.7 189.5,311.4 190.2,310.9 190.9,312.0 191.6,311.5 192.3,311.6 193.0,311.8 193.7,311.9 194.4,311.9 195.1,311.7 195.8,311.9 196.5,312.0 197.2,310.9 197.9,312.0 198.6,312.0 199.3,310.8 200.0,311.7 200.7,312.0 201.4,312.0 202.1,311.9 202.8,311.8 203.5,311.5 204.2,311.8 204.9,311.8 205.6,311.0 206.3,311.2 207.0,311.8 207.7,311.8 208.4,311.9 209.1,311.8 209.8,311.7 210.5,311.6 211.2,311.1 211.9,311.6 212.6,311.3 213.3,311.2 214.0,311.6 214.7,312.0 215.4,311.8 216.1,311.9 216.8,311.3 217.5,312.0 218.2,311.8 218.9,312.0 219.6,311.8 220.3,311.8 221.0,312.0 221.7,311.5 222.4,312.0 223.1,311.4 223.8,311.6 224.5,311.8 225.2,311.6 225.9,312.0 226.6,311.5 227.3,311.0 228.0,312.1 228.6,311.0 229.0,310.5 229.5,310.6 229.9,309.5 230.3,309.5 230.6,307.8 230.9,307.6 231.2,307.4 231.5,307.0 231.7,306.2 231.9,305.5 232.0,304.5 232.2,304.0 232.4,303.3 232.6,302.5 232.8,302.2 232.9,300.1 233.1,299.9 233.3,299.9 233.5,299.3 233.7,298.5 233.9,298.1 234.1,296.7 234.3,296.7 234.5,296.2 234.6,294.5 234.8,293.9 235.0,294.1 235.2,292.7 235.3,292.5 235.5,292.1 235.7,291.3 235.8,290.8 236.0,289.8 236.1,289.4 236.2,288.2 236.4,287.9 236.5,286.7 236.6,286.4 236.8,285.4 236.9,285.0 237.0,284.4 237.1,283.8 237.3,282.7 237.4,282.5 237.5,280.9 237.6,281.0 237.8,279.1 237.9,279.7 238.0,278.9 238.1,277.7 238.2,277.7 238.4,276.9 238.5,275.4 238.6,275.5 238.7,274.1 238.8,273.6 238.9,273.3 239.1,272.5 239.2,271.6 239.3,271.5 239.4,270.8 239.4,270.0 239.5,268.8 239.6,268.6 239.7,267.6 239.8,266.6 239.8,266.5 239.9,265.1 240.0,264.5 240.0,264.5 240.1,263.8 240.2,263.0 240.3,261.8 240.4,261.7 240.5,260.9 240.6,260.2 240.7,259.2 240.8,257.8 240.9,258.0 241.0,256.6 241.1,256.6 241.2,256.2 241.3,255.5 241.4,254.3 241.6,254.2 241.7,252.8 241.8,251.8 241.9,252.1 242.1,250.8 242.2,250.6 242.3,249.4 242.5,249.2 242.7,248.0 242.9,247.8 243.1,247.1 243.3,246.4 243.5,245.4 243.8,245.3 244.0,244.3 244.4,243.2 244.7,243.3 245.1,242.6 245.4,242.0 245.8,241.0 246.2,240.7 246.7,240.3 247.1,239.7 247.6,239.1 248.0,238.7 248.5,238.5 249.0,238.0 249.6,237.6 250.1,237.0 250.6,236.6 251.1,235.9 251.6,234.9 252.2,234.9 252.8,234.6 253.4,234.0 253.9,233.9 254.5,233.5 255.0,233.2 255.5,231.8 256.0,231.6 256.5,231.4 256.9,230.4 257.4,230.2 257.8,229.9 258.3,229.1 258.8,228.9 259.3,228.5 259.8,227.1 260.3,226.2 260.8,226.8 261.3,226.7 261.8,225.9 262.3,225.2 262.9,224.8 263.4,223.7 263.9,224.2 264.4,223.2 264.9,223.0 265.4,222.7 265.9,221.9 266.4,221.7 266.9,220.8 267.5,220.6 268.0,219.8 268.5,219.7 269.0,218.7 269.6,218.6 270.1,217.8 270.6,218.1 271.1,217.0 271.7,217.1 272.2,216.3 272.7,215.8 273.3,215.2 273.8,215.4 274.3,214.9 274.9,214.4 275.4,213.8 275.9,213.4 276.5,212.6 277.0,212.6 277.6,211.8 278.1,211.7 278.7,211.2 279.3,210.7 279.8,210.4 280.4,209.6 281.0,209.7 281.6,209.4 282.2,208.7 282.8,208.1 283.4,206.8 284.0,208.0 284.6,207.1 285.2,206.8 285.8,205.7 286.4,206.5 287.0,205.6 287.7,204.8 288.3,205.3 288.9,204.9 289.5,204.7 290.1,204.6 290.7,203.4 291.3,203.9 291.9,203.3 292.5,202.9 293.1,202.6 293.7,200.8 294.3,202.0 294.9,201.5 295.5,201.4 296.1,200.7 296.7,200.6 297.3,199.6 297.9,199.8 298.5,199.1 299.1,199.1 299.7,197.6 300.3,197.6 300.9,197.8 301.5,197.5 302.1,197.3 302.7,196.4 303.3,196.1 303.9,196.2 304.5,196.0 305.1,195.0 305.7,194.8 306.4,194.8 307.0,194.2 307.6,194.1 308.3,193.7 308.9,193.4 309.5,192.3 310.2,193.0 310.8,192.9 311.4,192.2 312.1,191.2 312.7,191.5 313.3,191.0 314.0,191.4 314.6,191.0 315.3,190.7 315.9,190.0 316.5,190.1 317.1,189.4 317.8,189.5 318.4,189.4 319.0,188.3 319.7,187.9 320.3,188.2 320.9,187.8 321.5,187.6 322.1,187.4 322.8,185.5 323.4,186.6 324.0,186.1 324.6,186.0 325.3,185.3 325.9,185.4 326.5,184.9 327.2,183.6 327.8,184.4 328.4,184.3 329.1,184.1 329.7,183.8 330.4,183.5 331.0,183.1 331.7,183.0 332.3,182.3 333.0,182.2 333.6,182.2 334.3,181.4 334.9,181.7 335.6,181.1 336.3,180.5 336.9,180.8 337.6,180.8 338.2,180.5 338.9,179.9 339.6,179.9 340.2,179.5 340.9,179.4 341.6,178.9 342.2,179.0 342.9,178.9 343.5,178.2 344.2,178.5 344.9,178.3 345.5,177.1 346.2,177.3 346.8,177.4 347.5,177.4 348.2,177.0 348.8,176.4 349.5,176.7 350.2,176.5 350.8,175.8 351.5,175.5 352.2,175.2 352.8,175.7 353.5,174.9 354.1,174.7 354.8,174.8 355.5,174.2 356.1,174.5 356.8,173.6 357.5,173.9 358.1,173.6 358.8,172.9 359.5,172.7 360.1,173.1 360.8,172.5 361.4,172.4 362.1,171.9 362.8,171.4 363.4,171.7 364.1,171.1 364.8,171.2 365.4,171.4 366.1,171.1 366.8,170.5 367.4,170.2 368.1,170.5 368.7,170.1 369.4,169.2 370.1,169.0 370.7,168.3 371.4,169.3 372.1,169.1 372.7,168.6 373.4,168.0 374.1,168.4 374.7,168.2 375.4,167.9 376.0,167.1 376.7,167.2 377.4,167.1 378.0,167.1 378.7,166.8 379.4,166.4 380.0,166.1 380.7,165.8 381.4,165.8 382.0,165.8 382.7,165.5 383.3,165.3 384.0,165.0 384.7,164.8 385.3,164.4 386.0,164.3 386.7,163.6 387.3,163.5 388.0,163.4 388.6,163.5 389.3,163.4 390.0,162.9 390.6,161.6 391.3,162.6 392.0,162.3 392.6,161.6 393.3,161.4 394.0,161.4 394.6,161.4 395.3,160.9 395.9,160.5 396.6,160.7 397.3,160.1 397.9,160.1 398.6,160.2 399.2,160.0 399.9,158.9 400.6,159.2 401.2,159.1 401.9,158.5 402.5,158.8 403.2,158.5 403.9,158.1 404.5,157.6 405.2,157.5 405.8,157.1 406.5,157.2 407.1,157.0 407.8,156.8 408.5,156.5 409.1,156.2 409.8,155.2 410.4,155.0 411.1,155.1 411.7,155.3 412.4,155.2 413.1,154.7 413.7,154.6 414.4,153.9 415.0,153.5 415.7,154.0 416.4,153.0 417.0,153.2 417.7,152.9 418.4,151.5 419.1,152.3 419.7,153.0 420.2,153.5 420.8,153.9 421.5,154.1 422.0,154.3 422.5,154.7 423.0,154.8 423.4,156.3 423.8,156.4 424.1,156.6 424.4,158.0 424.7,158.1 425.0,158.7 425.2,158.9 425.5,160.4 425.8,160.7 426.0,161.9 426.3,162.6 426.6,163.2 426.9,163.4 427.2,164.1 427.5,163.8 427.8,165.1 428.1,166.1 428.4,166.7 428.8,166.9 429.1,168.1 429.5,168.1 429.9,168.8 430.2,170.0 430.6,170.2 430.9,170.5 431.3,171.7 431.7,172.2 432.0,172.2 432.4,173.4 432.8,173.5 433.1,174.7 433.5,175.3 433.9,175.9 434.3,176.4 434.6,176.9 435.0,177.4 435.4,178.3 435.8,178.6 436.2,179.4 436.5,180.1 436.9,180.6 437.3,181.2 437.7,181.7 438.1,181.6 438.5,183.0 438.9,183.3 439.3,184.0 439.7,184.4 440.1,185.2 440.6,185.7 441.1,186.2 441.5,186.8 442.1,187.1 442.6,187.5 443.1,187.4 443.6,188.2 444.1,187.9 444.6,189.3 445.0,189.7 445.4,190.2 445.8,191.3 446.2,191.4 446.6,192.5 447.0,193.1 447.4,192.9 447.8,193.9 448.2,194.6 448.6,195.0 449.0,195.2 449.4,196.4 449.8,197.0 450.2,197.6 450.6,197.9 451.0,198.0 451.4,199.1 451.9,199.3 452.3,200.4 452.8,201.0 453.2,201.5 453.7,202.0 454.2,202.4 454.7,202.7 455.1,203.2 455.6,203.3 456.1,204.6 456.6,205.0 457.1,205.3 457.6,205.3 458.1,206.3 458.6,206.8 459.1,207.3 459.6,207.7 460.1,208.6 460.6,209.1 461.1,209.1 461.6,209.9 462.1,210.0 462.6,210.9 463.1,211.2 463.7,211.9 464.2,212.3 464.7,212.8 465.2,213.3 465.8,213.3 466.3,213.5 466.8,214.1 467.4,214.8 467.9,215.5 468.5,215.3 469.0,216.4 469.5,216.5 470.1,215.9 470.6,217.3 471.2,217.7 471.7,218.2 472.3,218.5 472.8,218.5 473.4,219.8 473.9,220.0 474.5,220.2 475.0,220.9 475.6,221.4 476.1,221.6 476.7,222.4 477.2,222.8 477.8,222.7 478.3,222.8 478.9,224.1 479.4,224.4 479.9,224.8 480.5,225.6 481.0,225.4 481.6,226.4 482.1,226.8 482.7,227.4 483.2,227.8 483.8,228.2 484.3,228.6 484.9,228.3 485.4,229.2 486.0,229.7 486.5,230.2 487.1,230.6 487.7,231.1 488.2,231.2 488.8,231.4 489.3,232.4 489.9,232.8 490.5,233.2 491.0,233.7 491.6,233.2 492.1,234.5 492.7,235.0 493.3,234.7 493.8,235.8 494.4,235.5 494.9,236.5 495.5,236.8 496.1,237.4 496.6,237.5 497.2,237.9 497.8,238.6 498.3,238.6 498.9,239.2 499.5,239.6 500.0,239.9 500.6,240.7 501.2,240.8 501.8,241.4 502.4,241.5 503.0,241.5 503.6,242.1 504.2,242.1 504.8,243.2 505.4,243.0 506.0,244.1 506.6,244.4 507.2,244.6 507.8,244.1 508.4,245.4 509.0,245.8 509.6,245.7 510.3,246.4 510.9,246.3 511.5,246.7 512.1,247.3 512.8,247.2 513.4,247.9 514.0,248.0 514.7,247.4 515.3,248.5 515.9,249.1 516.5,248.9 517.2,249.3 517.8,249.6 518.5,250.2 519.1,250.4 519.7,250.5 520.4,251.2 521.0,250.9 521.7,251.1 522.3,252.0 522.9,252.1 523.6,252.5 524.2,252.0 524.9,252.8 525.5,253.4 526.2,253.3 526.8,253.4 527.5,253.9 528.1,253.9 528.8,254.8 529.4,254.9 530.1,255.1 530.7,255.6 531.4,255.7 532.0,255.7 532.7,256.2 533.3,256.2 534.0,256.3 534.6,257.1 535.3,257.2 535.9,257.6 536.6,257.8 537.3,257.8 537.9,258.2 538.6,258.1 539.2,258.5 539.9,258.4 540.5,259.0 541.2,259.1 541.9,259.6 542.5,259.9 543.2,259.8 543.8,260.3 544.5,260.1 545.2,260.5 545.8,261.0 546.5,261.2 547.2,260.7 547.8,261.6 548.5,261.7 549.2,261.6 549.8,261.4 550.5,262.4 551.2,262.3 551.9,262.4 552.5,262.6 553.2,262.9 553.9,262.9 554.5,263.4 555.2,263.7 555.9,263.4 556.6,264.0 557.2,264.2 557.9,264.2 558.6,264.5 559.3,264.5 559.9,265.0 560.6,265.3 561.3,265.3 562.0,265.4 562.7,265.6 563.3,265.9 564.0,265.7 564.7,266.3 565.4,266.5 566.0,266.3 566.7,266.6 567.4,266.2 568.1,266.6 568.8,267.1 569.4,267.2 570.1,267.5 570.8,267.8 571.5,267.6 572.2,267.9 572.8,268.4 573.5,268.3 574.2,268.7 574.9,268.5 575.6,269.0 576.3,268.7 576.9,268.7 577.6,269.0 578.3,269.4 579.0,269.0 579.7,269.8 580.4,270.1 581.0,269.4 581.7,269.3 582.4,269.9 583.1,270.5 583.8,270.9 584.4,270.7 585.1,270.5 585.8,271.2 586.5,271.0 587.2,271.4 587.9,271.5 588.5,271.2 589.2,271.2 589.9,272.2 590.6,272.3 591.3,271.8 592.0,272.7 592.6,272.2 593.3,272.9 594.0,272.5 594.7,273.1 595.4,273.2 596.1,273.4 596.7,273.7 597.4,273.5 598.1,273.6 598.8,274.1 599.5,274.0 600.2,274.3 600.8,274.6 601.5,274.3 602.2,274.3 602.9,274.9 603.6,275.0 604.3,275.2 605.0,275.5 605.6,275.5 606.3,275.6 607.0,275.8 607.7,276.2 608.4,274.9 609.1,275.9 609.7,276.3 610.4,276.3 611.1,275.5 611.8,276.6 612.5,277.0 613.2,277.3 613.8,277.5 614.5,277.5 615.2,277.7 615.9,277.9 616.6,278.2 617.3,278.1 617.9,278.1 618.6,277.9 619.3,278.4 620.0,278.9 620.7,278.9 621.4,278.1 622.0,278.6 622.7,278.7 623.4,279.3 624.1,279.5 624.8,279.7 625.5,280.0 626.1,279.2 626.8,280.3 627.5,280.5 628.2,280.4 628.9,280.8 629.6,280.9 630.3,281.0 630.9,281.0 631.6,281.1 632.3,280.7 633.0,281.4 633.7,281.3 634.4,282.0 635.0,281.5 635.7,282.1 636.4,282.2 637.1,282.5 637.8,282.7 638.5,282.8 639.2,282.7 639.8,283.2 640.5,283.2 641.2,283.1 641.9,283.6 642.6,283.1 643.3,283.8 644.0,284.0 644.6,283.8 645.3,283.7 646.0,284.3 646.7,284.2 647.4,284.4 648.1,284.7 648.8,284.5 649.4,284.5 650.1,285.1 650.8,285.3 651.5,285.3 652.2,285.6 652.9,285.3 653.6,285.8 654.3,285.5 655.0,285.6 655.6,285.6 656.3,286.1 657.0,285.5 657.7,286.2 658.4,286.4 659.1,285.2 659.8,287.0 660.5,286.6 661.2,287.0 661.9,286.5 662.5,287.4 663.2,287.3 663.9,287.2 664.6,287.7 665.3,287.1 666.0,287.7 666.7,288.0 667.4,287.3 668.1,288.1 668.8,287.8 669.5,288.1 670.2,288.3 670.9,288.5 671.5,288.3 672.2,287.9 672.9,288.4 673.6,289.0 674.3,287.9 675.0,289.2 675.7,289.0 676.4,289.1 677.1,289.0 677.8,289.2 678.5,288.8 679.2,289.7 679.9,288.9 680.6,289.0 681.3,290.0 682.0,290.0 682.6,289.9 683.3,290.1 684.0,289.9 684.7,289.7 685.4,290.5 686.1,289.8 686.8,290.0 687.5,290.1 688.2,290.3 688.9,290.7 689.6,290.7 690.3,290.7 691.0,290.3 691.7,290.9 692.4,290.6 693.1,291.1 693.8,291.0 694.5,291.2 695.2,291.0 695.9,291.0 696.6,291.6 697.2,291.9 697.9,291.8 698.6,292.0 699.3,292.2 700.0,292.3 700.7,292.3 701.4,292.1 702.1,292.3 702.8,292.6 703.5,292.5 704.2,292.6 704.9,292.4 705.6,292.7 706.3,292.2 707.0,293.1 707.7,293.0 708.4,292.9 709.1,293.2 709.8,293.3 710.5,293.5 711.2,293.3 711.9,293.1 712.5,293.7 713.2,293.7 713.9,293.6 714.6,293.4 715.3,293.9 716.0,293.2 716.7,294.2 717.4,293.4 718.1,293.8 718.8,293.9 719.5,294.2 720.2,294.3 720.9,294.4 721.6,294.8 722.3,294.0 723.0,294.7 723.7,294.9 724.4,294.2 725.1,294.7 725.8,294.7 726.5,295.0 727.2,294.9 727.8,295.0 728.5,295.2 729.2,295.5 729.9,295.3 730.6,295.8 731.3,295.6 732.0,295.7 732.7,295.2 733.4,295.7 734.1,294.9 734.8,296.1 735.5,295.4 736.2,296.2 736.9,296.1 737.6,295.9 738.3,296.1 739.0,296.6 739.7,296.7 740.4,296.0 741.1,296.7 741.8,296.7 742.5,296.2 743.2,296.9 743.9,297.2 744.5,296.8 745.2,297.2 745.9,296.9 746.6,296.8 747.3,297.6 748.0,297.4 748.7,297.4 749.4,297.2 750.1,297.8 750.8,297.3 751.5,296.9 752.2,297.1 752.9,297.5 753.6,297.5 754.3,298.2 755.0,297.8 755.7,298.1 755.7,302.9 755.0,302.2 754.3,301.9 753.6,302.5 752.9,302.2 752.2,301.8 751.5,302.4 750.8,301.9 750.1,301.7 749.4,301.4 748.7,301.6 748.0,301.4 747.3,301.7 746.6,301.5 745.9,301.4 745.2,301.1 744.5,301.6 743.9,301.2 743.2,300.8 742.5,300.7 741.8,300.7 741.1,301.2 740.4,300.6 739.7,300.5 739.0,300.4 738.3,300.2 737.6,300.4 736.9,300.5 736.2,299.9 735.5,300.0 734.8,300.0 734.1,299.9 733.4,299.7 732.7,300.1 732.0,299.8 731.3,299.8 730.6,299.5 729.9,300.0 729.2,299.8 728.5,299.2 727.8,299.2 727.2,299.0 726.5,298.9 725.8,299.3 725.1,299.1 724.4,299.0 723.7,298.8 723.0,298.6 722.3,298.5 721.6,299.6 720.9,298.6 720.2,298.3 719.5,298.4 718.8,298.0 718.1,299.0 717.4,298.5 716.7,297.9 716.0,298.2 715.3,297.9 714.6,298.2 713.9,297.6 713.2,298.0 712.5,297.5 711.9,297.6 711.2,297.8 710.5,297.9 709.8,297.2 709.1,296.9 708.4,296.8 707.7,296.9 707.0,297.2 706.3,296.8 705.6,296.5 704.9,296.9 704.2,296.3 703.5,297.5 702.8,296.6 702.1,296.7 701.4,296.5 700.7,296.0 700.0,295.9 699.3,296.3 698.6,296.1 697.9,295.8 697.2,295.7 696.6,295.5 695.9,296.1 695.2,295.4 694.5,296.2 693.8,295.7 693.1,295.3 692.4,295.9 691.7,295.1 691.0,295.1 690.3,294.9 689.6,295.1 688.9,295.3 688.2,295.4 687.5,294.6 686.8,294.7 686.1,294.2 685.4,295.4 684.7,294.1 684.0,294.4 683.3,294.3 682.6,294.4 682.0,294.3 681.3,293.9 680.6,293.6 679.9,294.3 679.2,293.4 678.5,293.8 677.8,294.2 677.1,293.1 676.4,293.0 675.7,293.4 675.0,293.3 674.3,293.0 673.6,293.2 672.9,292.5 672.2,292.9 671.5,292.6 670.9,292.2 670.2,292.9 669.5,292.1 668.8,292.0 668.1,292.1 667.4,292.7 666.7,291.7 666.0,292.0 665.3,291.5 664.6,291.7 663.9,292.2 663.2,291.1 662.5,291.8 661.9,291.4 661.2,291.5 660.5,290.9 659.8,291.2 659.1,290.8 658.4,290.6 657.7,290.9 657.0,290.9 656.3,290.1 655.6,289.9 655.0,289.8 654.3,289.7 653.6,289.7 652.9,289.5 652.2,289.8 651.5,289.0 650.8,289.6 650.1,289.1 649.4,289.3 648.8,288.6 648.1,288.8 647.4,288.3 646.7,288.3 646.0,288.1 645.3,288.2 644.6,288.3 644.0,287.6 643.3,287.6 642.6,287.5 641.9,287.5 641.2,287.5 640.5,287.8 639.8,286.8 639.2,286.8 638.5,287.1 637.8,286.6 637.1,287.2 636.4,286.1 635.7,286.0 635.0,285.8 634.4,286.5 633.7,286.3 633.0,285.8 632.3,285.8 631.6,285.3 630.9,285.4 630.3,285.6 629.6,285.3 628.9,284.6 628.2,284.5 627.5,284.7 626.8,284.9 626.1,283.9 625.5,284.5 624.8,284.2 624.1,283.6 623.4,284.6 622.7,284.2 622.0,283.8 621.4,282.9 620.7,283.5 620.0,283.1 619.3,282.6 618.6,282.2 617.9,282.0 617.3,282.0 616.6,281.7 615.9,282.0 615.2,281.5 614.5,281.8 613.8,281.2 613.2,281.6 612.5,281.1 611.8,281.5 611.1,281.3 610.4,280.6 609.7,280.5 609.1,280.3 608.4,280.4 607.7,279.8 607.0,280.1 606.3,279.8 605.6,280.1 605.0,280.5 604.3,279.0 603.6,279.1 602.9,279.1 602.2,279.6 601.5,278.9 600.8,278.8 600.2,278.2 599.5,278.1 598.8,278.2 598.1,278.1 597.4,278.0 596.7,277.4 596.1,277.4 595.4,277.3 594.7,277.2 594.0,276.9 593.3,277.3 592.6,276.5 592.0,276.4 591.3,276.5 590.6,276.1 589.9,275.9 589.2,276.1 588.5,275.9 587.9,276.3 587.2,275.8 586.5,276.4 585.8,275.3 585.1,274.9 584.4,274.9 583.8,275.0 583.1,274.9 582.4,275.1 581.7,274.8 581.0,274.1 580.4,273.9 579.7,274.3 579.0,273.7 578.3,273.7 577.6,273.4 576.9,273.0 576.3,273.2 575.6,273.5 574.9,272.9 574.2,272.7 573.5,274.1 572.8,272.3 572.2,271.9 571.5,272.1 570.8,272.1 570.1,271.8 569.4,271.4 568.8,271.0 568.1,271.0 567.4,271.0 566.7,271.3 566.0,270.6 565.4,270.3 564.7,270.0 564.0,270.6 563.3,269.7 562.7,269.7 562.0,270.4 561.3,269.8 560.6,269.1 559.9,268.7 559.3,269.3 558.6,268.9 557.9,268.9 557.2,268.1 556.6,268.8 555.9,267.7 555.2,268.0 554.5,267.4 553.9,267.4 553.2,267.1 552.5,266.7 551.9,267.1 551.2,266.4 550.5,266.1 549.8,265.9 549.2,266.2 548.5,265.7 547.8,265.7 547.2,265.7 546.5,265.0 545.8,265.1 545.2,264.6 544.5,264.5 543.8,264.0 543.2,264.6 542.5,263.9 541.9,263.5 541.2,263.1 540.5,262.9 539.9,263.1 539.2,262.5 538.6,262.4 537.9,262.0 537.3,261.6 536.6,262.1 535.9,261.4 535.3,261.7 534.6,260.9 534.0,261.4 533.3,260.8 532.7,260.1 532.0,260.4 531.4,260.1 530.7,259.2 530.1,258.9 529.4,259.5 528.8,258.9 528.1,258.4 527.5,258.0 526.8,257.6 526.2,259.1 525.5,257.3 524.9,257.6 524.2,256.7 523.6,256.9 522.9,256.3 522.3,255.9 521.7,255.7 521.0,255.8 520.4,254.9 519.7,254.7 519.1,254.3 518.5,254.3 517.8,254.1 517.2,253.5 516.5,253.7 515.9,253.7 515.3,252.7 514.7,252.6 514.0,252.8 513.4,251.6 512.8,251.9 512.1,251.1 511.5,250.6 510.9,250.5 510.3,250.0 509.6,250.3 509.0,249.9 508.4,249.1 507.8,248.7 507.2,248.5 506.6,249.1 506.0,248.2 505.4,248.0 504.8,247.9 504.2,246.9 503.6,246.4 503.0,246.7 502.4,246.8 501.8,245.3 501.2,245.5 500.6,245.0 500.0,244.4 499.5,243.6 498.9,243.7 498.3,243.0 497.8,242.4 497.2,242.5 496.6,241.5 496.1,241.7 495.5,241.2 494.9,240.5 494.4,240.5 493.8,240.5 493.3,239.1 492.7,239.0 492.1,239.2 491.6,238.3 491.0,237.6 490.5,237.5 489.9,237.6 489.3,236.8 488.8,235.7 488.2,235.4 487.7,234.8 487.1,234.7 486.5,234.4 486.0,233.6 485.4,233.7 484.9,232.7 484.3,232.7 483.8,231.8 483.2,231.3 482.7,231.9 482.1,231.2 481.6,230.3 481.0,229.9 480.5,229.3 479.9,229.5 479.4,228.9 478.9,228.3 478.3,228.2 477.8,227.5 477.2,226.6 476.7,226.5 476.1,226.3 475.6,225.5 475.0,224.9 474.5,224.4 473.9,224.2 473.4,223.9 472.8,224.0 472.3,223.0 471.7,222.4 471.2,221.9 470.6,221.6 470.1,221.4 469.5,220.8 469.0,220.4 468.5,219.9 467.9,219.1 467.4,218.7 466.8,218.2 466.3,218.1 465.8,217.4 465.2,216.8 464.7,217.3 464.2,216.4 463.7,215.6 463.1,215.4 462.6,214.6 462.1,214.1 461.6,213.8 461.1,213.1 460.6,212.6 460.1,212.4 459.6,212.0 459.1,211.4 458.6,211.3 458.1,210.4 457.6,210.3 457.1,209.3 456.6,208.9 456.1,208.2 455.6,207.9 455.1,207.8 454.7,206.7 454.2,206.5 453.7,206.0 453.2,206.0 452.8,205.0 452.3,204.1 451.9,204.1 451.4,203.1 451.0,202.8 450.6,201.9 450.2,201.4 449.8,201.5 449.4,200.1 449.0,200.4 448.6,199.7 448.2,198.9 447.8,198.1 447.4,198.2 447.0,196.8 446.6,196.1 446.2,195.7 445.8,195.8 445.4,194.4 445.0,194.0 444.6,194.0 444.1,192.7 443.6,192.9 443.1,192.1 442.6,192.1 442.1,191.2 441.5,190.7 441.1,190.5 440.6,189.3 440.1,189.1 439.7,188.3 439.3,188.0 438.9,187.3 438.5,187.1 438.1,186.5 437.7,186.1 437.3,185.5 436.9,184.4 436.5,184.0 436.2,183.3 435.8,183.0 435.4,182.0 435.0,181.4 434.6,180.9 434.3,180.1 433.9,179.9 433.5,179.0 433.1,179.3 432.8,178.0 432.4,177.2 432.0,176.7 431.7,176.0 431.3,176.0 430.9,175.1 430.6,174.4 430.2,174.4 429.9,172.9 429.5,173.1 429.1,172.0 428.8,171.3 428.4,170.6 428.1,170.9 427.8,170.2 427.5,168.7 427.2,168.7 426.9,167.6 426.6,167.0 426.3,166.7 426.0,166.0 425.8,164.9 425.5,164.7 425.2,163.7 425.0,162.9 424.7,162.4 424.4,162.2 424.1,161.3 423.8,160.4 423.4,160.8 423.0,160.2 422.5,158.7 422.0,158.6 421.5,158.1 420.8,158.1 420.2,157.3 419.7,157.2 419.1,156.6 418.4,157.3 417.7,157.6 417.0,158.2 416.4,157.9 415.7,157.9 415.0,158.3 414.4,158.6 413.7,158.5 413.1,159.2 412.4,159.3 411.7,159.0 411.1,159.2 410.4,159.5 409.8,159.9 409.1,160.2 408.5,160.6 407.8,160.5 407.1,160.9 406.5,161.5 405.8,161.8 405.2,162.7 404.5,161.8 403.9,161.9 403.2,162.7 402.5,162.6 401.9,163.0 401.2,163.3 400.6,163.8 399.9,164.0 399.2,163.8 398.6,164.5 397.9,164.5 397.3,164.8 396.6,164.4 395.9,164.9 395.3,165.0 394.6,165.1 394.0,165.5 393.3,165.9 392.6,165.8 392.0,166.4 391.3,166.2 390.6,166.8 390.0,166.9 389.3,167.0 388.6,167.9 388.0,168.1 387.3,168.4 386.7,168.5 386.0,168.4 385.3,168.9 384.7,168.8 384.0,169.1 383.3,169.2 382.7,169.8 382.0,169.6 381.4,169.9 380.7,170.7 380.0,170.9 379.4,170.3 378.7,171.1 378.0,171.1 377.4,171.9 376.7,171.3 376.0,172.4 375.4,171.9 374.7,172.2 374.1,172.3 373.4,172.6 372.7,173.1 372.1,172.9 371.4,173.0 370.7,173.5 370.1,174.0 369.4,173.8 368.7,173.9 368.1,174.2 367.4,175.7 366.8,174.7 366.1,175.2 365.4,175.1 364.8,175.8 364.1,175.5 363.4,175.9 362.8,176.1 362.1,176.7 361.4,176.5 360.8,176.8 360.1,177.6 359.5,177.2 358.8,177.2 358.1,177.7 357.5,177.9 356.8,178.1 356.1,178.1 355.5,178.8 354.8,178.6 354.1,179.5 353.5,179.6 352.8,179.5 352.2,179.8 351.5,179.7 350.8,180.4 350.2,180.3 349.5,180.3 348.8,181.2 348.2,181.1 347.5,181.1 346.8,181.7 346.2,182.3 345.5,182.0 344.9,182.5 344.2,182.2 343.5,182.7 342.9,182.8 342.2,182.9 341.6,183.5 340.9,183.6 340.2,183.6 339.6,183.9 338.9,184.1 338.2,184.6 337.6,184.8 336.9,185.6 336.3,185.2 335.6,185.2 334.9,185.6 334.3,186.1 333.6,186.3 333.0,187.1 332.3,186.6 331.7,186.8 331.0,187.4 330.4,187.6 329.7,187.4 329.1,188.0 328.4,188.2 327.8,188.3 327.2,188.8 326.5,189.4 325.9,189.5 325.3,189.7 324.6,190.3 324.0,190.2 323.4,190.4 322.8,191.8 322.1,191.0 321.5,191.6 320.9,191.9 320.3,192.0 319.7,192.3 319.0,192.8 318.4,193.3 317.8,193.3 317.1,194.7 316.5,194.4 315.9,194.2 315.3,194.9 314.6,194.8 314.0,195.1 313.3,195.9 312.7,195.8 312.1,196.2 311.4,196.2 310.8,197.3 310.2,196.9 309.5,197.3 308.9,197.4 308.3,198.0 307.6,198.4 307.0,198.5 306.4,198.9 305.7,199.1 305.1,199.8 304.5,199.7 303.9,200.1 303.3,200.6 302.7,200.8 302.1,201.4 301.5,201.7 300.9,201.6 300.3,202.7 299.7,202.5 299.1,202.9 298.5,203.4 297.9,203.9 297.3,204.3 296.7,204.3 296.1,205.0 295.5,206.0 294.9,205.6 294.3,205.7 293.7,206.4 293.1,207.3 292.5,207.4 291.9,207.2 291.3,207.8 290.7,208.7 290.1,208.4 289.5,208.6 288.9,209.5 288.3,209.7 287.7,210.2 287.0,210.8 286.4,210.9 285.8,211.0 285.2,211.0 284.6,211.3 284.0,211.6 283.4,212.0 282.8,212.3 282.2,213.8 281.6,214.2 281.0,214.3 280.4,213.8 279.8,214.4 279.3,214.9 278.7,215.2 278.1,215.8 277.6,216.2 277.0,216.6 276.5,217.0 275.9,217.9 275.4,218.3 274.9,219.1 274.3,218.9 273.8,219.4 273.3,219.7 272.7,220.0 272.2,220.3 271.7,221.2 271.1,221.7 270.6,221.8 270.1,222.8 269.6,223.3 269.0,223.5 268.5,224.8 268.0,224.1 267.5,225.4 266.9,225.0 266.4,225.6 265.9,226.0 265.4,227.2 264.9,227.9 264.4,227.5 263.9,228.5 263.4,228.7 262.9,229.0 262.3,229.5 261.8,230.0 261.3,230.7 260.8,230.8 260.3,231.4 259.8,232.0 259.3,233.3 258.8,232.6 258.3,233.2 257.8,234.5 257.4,234.5 256.9,235.0 256.5,236.6 256.0,235.9 255.5,237.2 255.0,237.3 254.5,237.5 253.9,237.6 253.4,238.6 252.8,239.4 252.2,238.8 251.6,239.3 251.1,239.9 250.6,240.2 250.1,241.2 249.6,241.2 249.0,242.1 248.5,242.2 248.0,243.3 247.6,243.8 247.1,243.7 246.7,244.5 246.2,245.3 245.8,245.7 245.4,245.9 245.1,246.5 244.7,247.2 244.4,247.6 244.0,248.3 243.8,249.2 243.5,249.7 243.3,250.4 243.1,251.4 242.9,252.2 242.7,253.3 242.5,253.4 242.3,254.2 242.2,254.4 242.1,255.2 241.9,256.2 241.8,256.3 241.7,258.8 241.6,258.2 241.4,259.7 241.3,259.5 241.2,260.7 241.1,260.5 241.0,262.5 240.9,262.0 240.8,262.6 240.7,263.6 240.6,264.3 240.5,264.7 240.4,265.4 240.3,266.3 240.2,267.7 240.1,267.8 240.0,268.3 240.0,270.1 239.9,269.6 239.8,270.9 239.8,271.0 239.7,271.7 239.6,272.4 239.5,273.4 239.4,274.5 239.4,274.8 239.3,275.2 239.2,276.4 239.1,276.7 238.9,277.5 238.8,277.8 238.7,278.7 238.6,279.6 238.5,280.0 238.4,280.8 238.2,281.5 238.1,282.6 238.0,283.3 237.9,283.4 237.8,284.4 237.6,285.5 237.5,285.7 237.4,286.4 237.3,286.9 237.1,288.1 237.0,288.7 236.9,290.0 236.8,289.9 236.6,290.3 236.5,291.9 236.4,292.5 236.2,293.8 236.1,293.4 236.0,294.2 235.8,294.7 235.7,295.3 235.5,295.9 235.3,296.6 235.2,297.7 235.0,297.8 234.8,298.9 234.6,300.3 234.5,300.9 234.3,301.0 234.1,301.4 233.9,302.5 233.7,302.9 233.5,303.3 233.3,304.1 233.1,304.8 232.9,305.4 232.8,306.2 232.6,306.6 232.4,307.7 232.2,308.3 232.0,309.1 231.9,309.3 231.7,310.4 231.5,311.0 231.2,311.6 230.9,313.0 230.6,313.2 230.3,313.7 229.9,313.9 229.5,314.4 229.0,315.8 228.6,315.5 228.0,316.0 227.3,316.1 226.6,316.0 225.9,316.0 225.2,316.2 224.5,316.6 223.8,315.6 223.1,315.6 222.4,316.1 221.7,316.5 221.0,315.9 220.3,315.7 219.6,315.8 218.9,316.4 218.2,316.3 217.5,315.6 216.8,315.6 216.1,315.8 215.4,316.2 214.7,316.0 214.0,316.4 213.3,316.8 212.6,315.6 211.9,315.8 211.2,315.9 210.5,316.1 209.8,316.0 209.1,316.1 208.4,316.0 207.7,315.9 207.0,316.1 206.3,315.6 205.6,316.2 204.9,316.2 204.2,315.9 203.5,316.2 202.8,315.6 202.1,315.7 201.4,316.0 200.7,315.9 200.0,315.8 199.3,316.1 198.6,315.6 197.9,315.9 197.2,315.7 196.5,315.7 195.8,315.8 195.1,315.6 194.4,315.7 193.7,315.6 193.0,315.6 192.3,316.2 191.6,315.9 190.9,316.7 190.2,316.0 189.5,316.2 188.8,316.0 188.1,315.7 187.4,316.1 186.7,316.1 186.0,315.6 185.3,315.7 184.6,315.7 183.9,315.6 183.2,316.1 182.5,316.0 181.8,315.8 181.1,315.7 180.4,316.2 179.7,315.8 179.0,316.1 178.3,315.8 177.6,315.7 176.9,316.4 176.2,316.3 175.5,315.7 174.8,315.8 174.1,316.0 173.4,315.6 172.7,315.8 172.0,315.6 171.3,316.4 170.6,315.9 169.9,316.2 169.2,315.8 168.5,316.3 167.8,316.5 167.1,316.0 166.4,316.2 165.7,315.9 165.0,315.8 164.3,316.6 163.6,315.8 162.9,316.3 162.2,315.7 161.5,316.7 160.8,315.6 160.1,315.9 159.4,316.1 158.7,315.7 158.0,315.9 157.3,315.9 156.6,315.8 155.9,315.6 155.2,315.9 154.5,315.7 153.8,315.7 153.1,316.1 152.4,315.9 151.7,316.4 151.0,315.9 150.3,315.9 149.6,315.8 148.9,315.8 148.2,316.2 147.5,315.8 146.8,316.1 146.1,316.6 145.4,316.3 144.7,315.9 144.0,316.1 143.3,315.7 142.6,316.5 141.9,316.0 141.2,315.7 140.5,316.1 139.8,315.6 139.1,315.8 138.4,315.8 137.7,316.3 137.0,316.0 136.3,315.8 135.6,315.6 134.9,316.0 134.2,315.6 133.5,316.0 132.8,315.9 132.1,315.6 131.4,316.0 130.7,315.9 130.0,316.2 129.3,316.0 128.6,316.0 127.9,315.7 127.2,316.0 126.5,316.0 125.8,315.8 125.1,315.7 124.4,315.8 123.7,315.6 123.0,315.9 122.3,315.7 121.6,315.7 120.9,315.6 120.2,316.1 119.5,316.5 118.8,315.7 118.1,316.0 117.4,316.1 116.7,316.5 116.0,315.7 115.3,316.5 114.6,315.8 113.9,316.0 113.2,316.1 112.5,316.5 111.8,316.1 111.1,315.9 110.4,315.6 109.7,315.6 109.0,316.1 108.3,316.1 107.6,315.7 106.9,315.9 106.2,316.1 105.5,315.8 104.8,316.6 104.1,316.2 103.4,316.1 102.7,316.1 102.0,315.6 101.3,316.3 100.6,315.7 99.9,316.1 99.2,315.6 98.5,316.6 97.8,315.8 97.1,315.8 96.4,315.9 95.7,315.7 95.0,316.1 94.3,316.1 93.6,315.7 92.9,316.3 92.2,316.3 91.5,316.3 90.8,316.1 90.1,316.4 89.4,316.3 88.7,316.2 88.0,316.1 87.3,315.6 86.6,315.8 85.9,315.8 85.2,315.9 84.5,316.0 83.8,316.1 83.1,316.8 82.4,316.3 81.7,315.7 81.0,315.7 80.3,316.2 79.6,315.7 78.9,315.8 78.2,315.6 77.5,315.6 76.8,316.5 76.1,315.6 75.4,315.8 74.7,316.4 74.0,315.7 73.3,316.3 72.6,315.6 71.9,315.8 71.2,316.1 70.5,316.0 69.8,315.7 69.1,316.3 68.4,315.9 67.7,315.6 67.0,316.5 66.3,316.2 65.6,315.9 64.9,315.6 64.2,316.0 63.5,316.2 62.8,315.6 62.1,315.7 61.4,315.7 60.7,315.7 60.0,316.3 59.3,316.6 58.6,316.0 57.9,315.7 57.2,316.0 56.5,316.1 55.8,315.7 55.1,315.6 54.4,315.8 53.7,315.9 53.0,316.4 52.3,316.3 51.6,316.6 50.9,316.0 50.2,315.6 49.5,316.0 48.8,315.7 48.1,315.8 47.4,316.3 46.7,316.2 46.0,315.7 45.3,315.8 44.6,315.6 43.9,315.8 43.2,315.6 42.5,315.6 41.8,315.8 41.1,315.7 40.4,315.7 39.7,316.4 39.0,315.7 38.3,315.9 37.6,316.0 36.9,316.1 36.2,316.2 35.5,316.1 34.8,316.2 34.1,315.6 33.4,316.4 32.7,316.8 32.0,315.7 31.3,315.7 30.6,315.7 29.9,316.3 29.2,315.6 28.5,315.7 27.8,316.0 27.1,316.1 26.4,315.9 25.7,315.8 25.0,315.8 24.3,316.4 23.6,316.1 22.9,315.9 22.2,315.6 21.5,315.8 20.8,315.6 20.1,315.9 19.4,315.8 18.7,315.6 18.0,315.6 17.3,315.6 16.6,315.9 15.9,315.8 15.2,316.1 14.5,316.5 13.8,315.9 13.1,315.6 12.4,316.0 11.7,315.7 11.0,316.0Z" fill="#82c236" stroke="none"/><path d="M11.0,313.8 12.5,313.8 14.0,313.8 15.5,313.8 17.0,313.8 18.5,313.8 20.0,313.8 21.5,313.8 23.0,313.8 24.5,313.8 26.0,313.8 27.5,313.8 29.0,313.8 30.5,313.8 32.0,313.8 33.5,313.8 35.0,313.8 36.5,313.8 38.0,313.8 39.5,313.8 41.0,313.8 42.5,313.8 44.0,313.8 45.5,313.8 47.0,313.8 48.5,313.8 50.0,313.8 51.5,313.8 53.0,313.8 54.5,313.8 56.0,313.8 57.5,313.8 59.0,313.8 60.5,313.8 62.0,313.8 63.5,313.8 65.0,313.8 66.5,313.8 68.0,313.8 69.5,313.8 71.0,313.8 72.5,313.8 74.0,313.8 75.5,313.8 77.0,313.8 78.5,313.8 80.0,313.8 81.5,313.8 83.0,313.8 84.5,313.8 86.0,313.8 87.5,313.8 89.0,313.8 90.5,313.8 92.0,313.8 93.5,313.8 95.0,313.8 96.5,313.8 98.0,313.8 99.5,313.8 101.0,313.8 102.5,313.8 104.0,313.8 105.5,313.8 107.0,313.8 108.5,313.8 110.0,313.8 111.5,313.8 113.0,313.8 114.5,313.8 116.0,313.8 117.5,313.8 119.0,313.8 120.5,313.8 122.0,313.8 123.5,313.8 125.0,313.8 126.5,313.8 128.0,313.8 129.5,313.8 131.0,313.8 132.5,313.8 134.0,313.8 135.5,313.8 137.0,313.8 138.5,313.8 140.0,313.8 141.5,313.8 143.0,313.8 144.5,313.8 146.0,313.8 147.5,313.8 149.0,313.8 150.5,313.8 152.0,313.8 153.5,313.8 155.0,313.8 156.5,313.8 158.0,313.8 159.5,313.8 161.0,313.8 162.5,313.8 164.0,313.8 165.5,313.8 167.0,313.8 168.5,313.8 170.0,313.8 171.5,313.8 173.0,313.8 174.5,313.8 176.0,313.8 177.5,313.8 179.0,313.8 180.5,313.8 182.0,313.8 183.5,313.8 185.0,313.8 186.5,313.8 188.0,313.8 189.5,313.8 191.0,313.8 192.5,313.8 194.0,313.8 195.5,313.8 197.0,313.8 198.5,313.8 200.0,313.8 201.5,313.8 203.0,313.8 204.5,313.8 206.0,313.8 207.5,313.8 209.0,313.8 210.5,313.8 212.0,313.8 213.5,313.8 215.0,313.8 216.5,313.8 218.0,313.8 219.5,313.8 221.0,313.8 222.5,313.8 224.0,313.8 225.5,313.8 227.0,313.8 228.4,313.7 229.4,312.6 230.3,311.3 231.0,310.0 231.5,308.6 231.9,307.2 232.3,305.7 232.7,304.3 233.1,302.8 233.5,301.4 233.9,299.9 234.3,298.5 234.7,297.0 235.1,295.6 235.4,294.1 235.8,292.7 236.1,291.2 236.4,289.7 236.7,288.3 236.9,286.8 237.2,285.3 237.5,283.8 237.7,282.4 238.0,280.9 238.3,279.4 238.5,277.9 238.8,276.5 239.0,275.0 239.2,273.5 239.4,272.0 239.6,270.5 239.8,269.0 239.9,267.5 240.1,266.0 240.3,264.5 240.4,263.1 240.7,261.6 240.9,260.1 241.1,258.6 241.4,257.1 241.6,255.6 241.9,254.2 242.2,252.7 242.5,251.2 242.9,249.8 243.3,248.4 243.8,247.0 244.5,245.6 245.3,244.3 246.1,243.1 247.0,241.9 248.0,240.8 249.1,239.7 250.2,238.7 251.3,237.7 252.5,236.8 253.8,236.0 254.9,235.0 256.0,234.0 257.0,232.8 258.0,231.7 259.0,230.7 260.1,229.6 261.2,228.6 262.3,227.5 263.4,226.5 264.4,225.5 265.5,224.4 266.6,223.4 267.8,222.4 268.9,221.4 270.0,220.4 271.1,219.4 272.3,218.5 273.4,217.5 274.6,216.5 275.7,215.6 276.9,214.6 278.1,213.7 279.3,212.8 280.5,212.0 281.8,211.1 283.0,210.4 284.3,209.6 285.6,208.9 287.0,208.1 288.3,207.4 289.6,206.7 290.9,206.0 292.2,205.2 293.5,204.4 294.8,203.6 296.0,202.8 297.3,202.1 298.6,201.3 299.8,200.5 301.1,199.7 302.4,198.9 303.7,198.2 305.0,197.5 306.4,196.8 307.7,196.1 309.1,195.5 310.4,194.8 311.8,194.2 313.2,193.6 314.5,193.0 315.9,192.3 317.2,191.7 318.6,191.0 319.9,190.3 321.3,189.7 322.6,189.0 323.9,188.3 325.3,187.6 326.6,187.0 328.0,186.4 329.4,185.8 330.7,185.2 332.1,184.6 333.5,184.1 334.9,183.6 336.4,183.1 337.8,182.6 339.2,182.1 340.6,181.6 342.0,181.1 343.4,180.6 344.9,180.1 346.3,179.6 347.7,179.1 349.1,178.7 350.5,178.2 352.0,177.7 353.4,177.2 354.8,176.7 356.2,176.3 357.7,175.8 359.1,175.3 360.5,174.8 361.9,174.4 363.3,173.9 364.8,173.4 366.2,172.9 367.6,172.4 369.0,172.0 370.4,171.5 371.9,171.0 373.3,170.5 374.7,170.1 376.1,169.6 377.6,169.1 379.0,168.6 380.4,168.2 381.8,167.7 383.2,167.2 384.7,166.7 386.1,166.2 387.5,165.8 388.9,165.3 390.4,164.8 391.8,164.3 393.2,163.8 394.6,163.4 396.0,162.9 397.5,162.4 398.9,161.9 400.3,161.4 401.7,160.9 403.1,160.4 404.5,159.9 405.9,159.3 407.3,158.8 408.7,158.3 410.1,157.8 411.5,157.3 413.0,156.7 414.4,156.2 415.8,155.7 417.2,155.3 418.7,154.9 420.0,155.1 421.3,155.9 422.5,156.8 423.4,158.0 424.1,159.3 424.8,160.7 425.3,162.0 425.9,163.4 426.5,164.8 427.1,166.2 427.8,167.5 428.5,168.8 429.2,170.1 430.0,171.4 430.8,172.7 431.6,174.0 432.4,175.3 433.1,176.5 433.9,177.8 434.8,179.1 435.6,180.3 436.4,181.6 437.2,182.9 438.0,184.1 438.9,185.4 439.8,186.6 440.7,187.7 441.8,188.8 442.9,189.8 444.0,190.8 445.0,191.9 445.8,193.1 446.7,194.4 447.5,195.6 448.4,196.9 449.2,198.1 450.1,199.4 450.9,200.6 451.9,201.7 452.8,202.9 453.8,204.0 454.9,205.1 455.9,206.2 456.9,207.3 458.0,208.3 459.1,209.4 460.1,210.4 461.2,211.5 462.3,212.5 463.4,213.5 464.6,214.5 465.7,215.5 466.8,216.4 468.0,217.4 469.2,218.4 470.3,219.3 471.5,220.2 472.7,221.2 473.9,222.1 475.0,223.0 476.2,223.9 477.4,224.9 478.5,225.8 479.7,226.8 480.9,227.7 482.0,228.7 483.2,229.6 484.4,230.5 485.6,231.4 486.8,232.3 488.0,233.2 489.2,234.1 490.4,235.0 491.6,235.9 492.8,236.8 494.0,237.7 495.2,238.6 496.4,239.5 497.6,240.4 498.8,241.3 500.0,242.1 501.3,243.0 502.5,243.8 503.8,244.6 505.1,245.4 506.4,246.1 507.7,246.9 509.0,247.6 510.4,248.3 511.7,248.9 513.0,249.6 514.4,250.3 515.7,250.9 517.1,251.6 518.5,252.2 519.8,252.8 521.2,253.4 522.6,254.0 523.9,254.6 525.3,255.2 526.7,255.8 528.1,256.3 529.5,256.9 530.9,257.4 532.3,258.0 533.7,258.5 535.1,259.0 536.5,259.6 537.9,260.1 539.3,260.6 540.7,261.1 542.1,261.6 543.6,262.1 545.0,262.6 546.4,263.0 547.8,263.5 549.3,263.9 550.7,264.4 552.1,264.8 553.6,265.2 555.0,265.6 556.5,266.0 557.9,266.4 559.4,266.8 560.8,267.2 562.3,267.6 563.7,268.0 565.2,268.3 566.6,268.7 568.1,269.1 569.5,269.4 571.0,269.8 572.5,270.1 573.9,270.5 575.4,270.8 576.8,271.1 578.3,271.5 579.8,271.8 581.2,272.1 582.7,272.5 584.2,272.8 585.6,273.1 587.1,273.5 588.5,273.8 590.0,274.1 591.5,274.4 592.9,274.8 594.4,275.1 595.9,275.4 597.3,275.7 598.8,276.1 600.3,276.4 601.7,276.7 603.2,277.0 604.7,277.3 606.1,277.7 607.6,278.0 609.1,278.3 610.5,278.6 612.0,278.9 613.5,279.3 614.9,279.6 616.4,279.9 617.8,280.2 619.3,280.5 620.8,280.9 622.2,281.2 623.7,281.5 625.2,281.8 626.6,282.2 628.1,282.5 629.6,282.8 631.0,283.1 632.5,283.4 634.0,283.7 635.4,284.1 636.9,284.4 638.4,284.7 639.8,285.0 641.3,285.3 642.8,285.6 644.2,285.9 645.7,286.2 647.2,286.5 648.7,286.7 650.1,287.0 651.6,287.3 653.1,287.6 654.6,287.9 656.0,288.1 657.5,288.4 659.0,288.6 660.5,288.9 662.0,289.1 663.4,289.3 664.9,289.6 666.4,289.8 667.9,290.0 669.4,290.2 670.9,290.5 672.3,290.7 673.8,290.9 675.3,291.1 676.8,291.3 678.3,291.5 679.8,291.6 681.3,291.8 682.7,292.0 684.2,292.2 685.7,292.4 687.2,292.6 688.7,292.7 690.2,292.9 691.7,293.1 693.2,293.3 694.7,293.4 696.2,293.6 697.6,293.8 699.1,293.9 700.6,294.1 702.1,294.3 703.6,294.5 705.1,294.6 706.6,294.8 708.1,295.0 709.6,295.1 711.1,295.3 712.5,295.5 714.0,295.7 715.5,295.8 717.0,296.0 718.5,296.2 720.0,296.4 721.5,296.5 723.0,296.7 724.5,296.9 726.0,297.0 727.4,297.2 728.9,297.4 730.4,297.5 731.9,297.7 733.4,297.9 734.9,298.0 736.4,298.2 737.9,298.3 739.4,298.5 740.9,298.7 742.4,298.8 743.9,299.0 745.3,299.1 746.8,299.3 748.3,299.5 749.8,299.6 751.3,299.8 752.8,300.0 754.3,300.1 755.8,300.3" stroke="#82c236" stroke-width="1.1" stroke-opacity="0.8"/>
<path d="M11.0,311.9 11.7,312.0 12.4,311.8 13.1,311.9 13.8,311.4 14.5,311.6 15.2,311.5 15.9,312.0 16.6,311.9 17.3,311.9 18.0,311.9 18.7,311.2 19.4,311.8 20.1,311.6 20.8,312.0 21.5,311.8 22.2,312.0 22.9,311.9 23.6,311.9 24.3,311.1 25.0,311.6 25.7,311.8 26.4,311.7 27.1,312.0 27.8,312.0 28.5,311.5 29.2,311.8 29.9,311.7 30.6,311.3 31.3,311.7 32.0,311.8 32.7,311.8 33.4,311.5 34.1,311.9 34.8,311.8 35.5,311.6 36.2,311.5 36.9,312.0 37.6,311.2 38.3,311.1 39.0,311.7 39.7,311.3 40.4,311.8 41.1,311.5 41.8,311.9 42.5,312.0 43.2,312.0 43.9,311.9 44.6,312.0 45.3,311.9 46.0,311.8 46.7,311.7 47.4,311.8 48.1,311.6 48.8,311.9 49.5,311.3 50.2,311.9 50.9,311.3 51.6,311.5 52.3,311.7 53.0,311.8 53.7,311.8 54.4,312.0 55.1,311.0 55.8,312.0 56.5,311.9 57.2,311.8 57.9,311.2 58.6,311.6 59.3,311.8 60.0,311.2 60.7,311.8 61.4,311.8 62.1,311.8 62.8,311.6 63.5,311.7 64.2,311.9 64.9,311.6 65.6,312.0 66.3,311.9 67.0,311.5 67.7,311.7 68.4,311.4 69.1,311.5 69.8,312.0 70.5,311.5 71.2,312.0 71.9,311.4 72.6,310.4 73.3,311.4 74.0,311.4 74.7,311.3 75.4,311.7 76.1,311.9 76.8,311.9 77.5,311.6 78.2,311.8 78.9,311.9 79.6,311.8 80.3,311.9 81.0,311.9 81.7,311.7 82.4,312.0 83.1,311.2 83.8,311.3 84.5,311.2 85.2,312.0 85.9,311.9 86.6,311.8 87.3,311.9 88.0,311.4 88.7,311.5 89.4,312.0 90.1,312.0 90.8,311.8 91.5,311.8 92.2,311.4 92.9,311.7 93.6,311.8 94.3,311.9 95.0,312.0 95.7,312.0 96.4,312.0 97.1,311.8 97.8,312.0 98.5,311.8 99.2,311.4 99.9,311.6 100.6,311.2 101.3,311.8 102.0,311.7 102.7,312.0 103.4,311.9 104.1,311.1 104.8,311.2 105.5,311.7 106.2,311.7 106.9,311.5 107.6,312.0 108.3,311.1 109.0,311.2 109.7,311.7 110.4,311.9 111.1,311.7 111.8,311.4 112.5,312.0 113.2,312.0 113.9,311.8 114.6,311.9 115.3,311.3 116.0,311.6 116.7,311.4 117.4,311.4 118.1,312.0 118.8,311.3 119.5,311.8 120.2,311.5 120.9,311.6 121.6,311.6 122.3,311.1 123.0,311.5 123.7,312.0 124.4,311.7 125.1,311.9 125.8,311.9 126.5,312.0 127.2,311.7 127.9,311.0 128.6,312.0 129.3,312.0 130.0,311.5 130.7,312.0 131.4,312.0 132.1,311.6 132.8,311.5 133.5,311.7 134.2,311.5 134.9,311.7 135.6,312.0 136.3,312.0 137.0,311.2 137.7,312.0 138.4,311.9 139.1,311.6 139.8,312.0 140.5,311.9 141.2,311.6 141.9,312.0 142.6,312.0 143.3,311.4 144.0,312.0 144.7,311.8 145.4,312.0 146.1,311.8 146.8,311.9 147.5,311.0 148.2,311.3 148.9,311.5 149.6,311.8 150.3,312.0 151.0,312.0 151.7,311.5 152.4,311.5 153.1,311.5 153.8,311.9 154.5,311.7 155.2,311.3 155.9,311.4 156.6,311.5 157.3,312.0 158.0,311.8 158.7,312.0 159.4,311.0 160.1,311.9 160.8,312.0 161.5,310.8 162.2,311.4 162.9,312.0 163.6,311.5 164.3,311.9 165.0,311.5 165.7,311.9 166.4,311.9 167.1,311.9 167.8,311.9 168.5,311.9 169.2,311.8 169.9,311.3 170.6,311.8 171.3,311.9 172.0,311.7 172.7,312.0 173.4,311.8 174.1,311.6 174.8,311.3 175.5,311.8 176.2,311.5 176.9,311.0 177.6,311.5 178.3,311.6 179.0,311.4 179.7,311.3 180.4,311.9 181.1,311.8 181.8,311.5 182.5,311.5 183.2,311.9 183.9,311.3 184.6,311.7 185.3,311.9 186.0,311.1 186.7,311.4 187.4,311.8 188.1,311.9 188.8,311.8 189.5,311.9 190.2,311.6 190.9,311.9 191.6,311.4 192.3,311.8 193.0,311.9 193.7,311.6 194.4,311.8 195.1,311.7 195.8,311.8 196.5,311.4 197.2,311.0 197.9,312.0 198.6,311.7 199.3,311.4 200.0,311.6 200.7,311.7 201.4,311.6 202.1,311.7 202.8,311.2 203.5,311.6 204.2,311.6 204.9,310.9 205.6,311.5 206.3,311.4 207.0,311.2 207.7,311.4 208.4,311.4 209.1,311.1 209.8,311.7 210.5,312.0 211.2,311.6 211.9,311.9 212.6,311.7 213.3,311.2 214.0,311.6 214.7,312.0 215.4,311.9 216.1,311.7 216.8,311.6 217.5,311.5 218.2,311.6 218.9,311.8 219.6,312.0 220.3,311.5 221.0,312.0 221.7,311.7 222.4,311.2 223.1,312.0 223.8,312.0 224.5,311.6 225.2,311.9 225.9,311.6 226.6,311.8 227.3,310.8 228.0,311.6 228.6,311.1 229.0,310.5 229.5,310.3 229.9,310.0 230.3,309.3 230.6,308.7 230.9,307.5 231.2,307.3 231.5,306.5 231.7,305.8 231.9,305.6 232.0,304.9 232.2,304.2 232.4,303.4 232.6,302.6 232.8,301.4 232.9,301.6 233.1,300.8 233.3,300.2 233.5,298.8 233.7,298.7 233.9,297.9 234.1,297.3 234.2,296.2 234.4,295.7 234.6,295.4 234.8,294.8 235.0,293.9 235.1,292.8 235.3,292.6 235.5,291.7 235.7,290.5 235.8,290.8 236.0,289.4 236.1,289.1 236.3,288.6 236.4,287.8 236.6,287.1 236.7,286.6 236.8,285.7 237.0,284.6 237.1,284.5 237.2,283.0 237.4,283.2 237.5,282.2 237.7,281.3 237.8,281.0 238.0,280.3 238.1,279.9 238.3,278.8 238.5,277.6 238.6,277.6 238.8,276.7 239.0,275.8 239.1,275.5 239.3,274.9 239.5,274.2 239.6,273.6 239.8,272.7 240.0,272.2 240.1,271.2 240.3,270.8 240.5,269.7 240.7,269.3 240.8,268.4 241.0,267.3 241.2,267.2 241.4,266.5 241.6,265.5 241.8,265.3 242.0,264.6 242.2,263.3 242.4,263.6 242.6,262.7 242.8,262.3 243.0,260.3 243.3,260.9 243.6,259.9 243.9,259.1 244.2,258.9 244.5,257.6 244.9,257.8 245.3,256.8 245.7,256.3 246.1,255.9 246.6,255.4 247.1,255.1 247.5,254.2 248.0,253.8 248.6,252.2 249.1,253.1 249.6,252.6 250.2,252.0 250.7,251.9 251.3,251.4 251.9,250.3 252.4,249.9 253.0,250.1 253.5,249.8 254.1,248.1 254.6,247.9 255.2,248.3 255.7,248.0 256.2,247.2 256.7,246.5 257.2,246.3 257.7,245.9 258.2,245.3 258.7,245.0 259.2,244.1 259.7,243.8 260.2,243.1 260.6,242.7 261.1,242.4 261.6,241.5 262.1,241.3 262.6,240.8 263.0,240.3 263.5,239.7 264.0,239.3 264.5,238.6 265.0,238.5 265.5,237.5 266.0,237.5 266.6,236.6 267.1,236.4 267.6,235.9 268.2,235.7 268.7,234.7 269.3,234.2 269.8,233.5 270.3,233.8 270.8,233.3 271.4,233.0 271.9,232.3 272.4,230.7 272.9,231.1 273.4,231.1 274.0,230.7 274.5,229.7 275.0,229.1 275.5,228.9 276.0,228.6 276.6,228.1 277.1,227.5 277.6,226.8 278.1,226.7 278.6,225.7 279.1,225.5 279.7,224.9 280.2,223.6 280.8,224.2 281.3,224.0 281.9,223.5 282.4,222.7 283.0,222.8 283.5,222.5 284.1,221.6 284.7,221.5 285.2,221.1 285.8,220.6 286.3,219.9 286.9,219.9 287.5,218.9 288.0,218.8 288.6,218.4 289.2,218.0 289.7,217.8 290.3,217.5 290.9,217.0 291.5,216.7 292.0,216.0 292.6,215.7 293.2,214.5 293.8,214.8 294.4,214.5 294.9,213.4 295.5,212.8 296.1,213.6 296.7,213.2 297.3,212.4 297.9,212.0 298.5,212.1 299.1,211.4 299.7,211.2 300.3,210.4 300.9,210.4 301.5,209.3 302.1,209.4 302.7,209.5 303.3,209.3 303.9,208.7 304.6,208.1 305.2,207.9 305.8,207.5 306.4,207.6 307.1,207.0 307.7,206.5 308.3,206.7 309.0,205.9 309.6,205.4 310.2,205.7 310.9,205.5 311.5,205.3 312.2,205.0 312.8,204.0 313.5,204.5 314.1,203.6 314.7,203.9 315.4,203.7 316.0,202.9 316.7,203.2 317.3,202.8 318.0,202.5 318.6,202.2 319.3,201.4 319.9,201.3 320.5,201.5 321.2,201.0 321.8,200.9 322.5,200.5 323.1,200.1 323.8,200.1 324.4,199.4 325.1,199.6 325.7,198.7 326.4,198.9 327.0,198.0 327.7,198.3 328.3,197.8 329.0,198.1 329.6,197.6 330.3,197.7 331.0,196.7 331.6,197.1 332.3,196.0 333.0,196.8 333.6,196.3 334.3,196.3 335.0,196.1 335.6,195.8 336.3,195.6 337.0,194.5 337.6,195.4 338.3,195.0 339.0,194.6 339.6,194.0 340.3,193.6 340.9,193.9 341.6,193.1 342.3,193.0 342.9,193.1 343.6,193.1 344.2,192.5 344.9,192.8 345.6,192.5 346.2,191.8 346.9,191.7 347.5,191.7 348.2,191.6 348.8,191.2 349.5,190.8 350.2,190.0 350.8,189.8 351.5,190.1 352.1,190.0 352.8,189.4 353.4,188.5 354.1,188.6 354.8,189.0 355.4,188.0 356.1,188.6 356.7,188.2 357.4,187.1 358.0,187.4 358.7,187.5 359.4,187.4 360.0,186.5 360.7,186.7 361.3,186.4 362.0,186.3 362.6,185.6 363.3,185.9 363.9,185.7 364.6,184.9 365.2,184.8 365.9,184.6 366.5,184.3 367.2,184.2 367.9,184.1 368.5,183.7 369.2,183.5 369.8,183.2 370.5,182.9 371.1,182.3 371.8,182.4 372.4,182.3 373.1,182.2 373.7,181.4 374.4,180.9 375.0,181.4 375.7,181.0 376.4,180.5 377.0,180.6 377.7,180.3 378.3,179.7 379.0,179.5 379.7,179.2 380.3,179.1 381.0,179.2 381.7,178.8 382.3,178.6 383.0,178.5 383.7,178.2 384.4,178.3 385.0,177.3 385.7,177.4 386.4,177.5 387.1,177.0 387.7,177.0 388.4,176.2 389.1,176.9 389.8,176.9 390.4,176.7 391.1,176.4 391.8,176.4 392.5,176.2 393.2,175.4 393.8,175.1 394.5,175.2 395.2,175.5 395.9,174.9 396.5,174.9 397.2,175.1 397.9,174.0 398.6,174.5 399.2,174.0 399.9,174.1 400.6,173.9 401.2,173.5 401.9,173.5 402.6,173.3 403.2,172.7 403.9,172.8 404.5,172.4 405.2,171.8 405.8,172.1 406.5,171.3 407.1,171.2 407.8,171.2 408.4,170.8 409.1,170.5 409.7,170.3 410.4,169.6 411.0,170.0 411.7,169.2 412.4,169.5 413.0,168.8 413.7,168.8 414.4,169.0 415.1,168.4 415.8,168.4 416.5,168.4 417.2,168.2 417.9,168.3 418.5,168.5 419.2,168.0 419.9,168.5 420.6,168.7 421.2,169.0 421.9,169.0 422.5,169.8 423.1,170.2 423.7,170.6 424.3,170.8 424.9,171.3 425.5,171.4 426.1,172.1 426.6,172.6 427.2,172.8 427.7,172.8 428.2,173.7 428.8,174.4 429.3,174.4 429.8,175.1 430.3,175.9 430.8,176.2 431.3,176.6 431.8,177.3 432.3,177.2 432.8,177.2 433.3,178.4 433.7,179.1 434.2,179.1 434.7,180.4 435.2,180.5 435.7,181.1 436.2,181.8 436.6,182.4 437.1,182.5 437.6,183.1 438.1,183.4 438.5,184.2 439.0,184.1 439.4,185.3 439.9,185.9 440.4,185.8 440.8,186.2 441.3,186.6 441.7,187.5 442.2,188.2 442.6,188.4 443.1,189.7 443.5,190.1 444.0,190.8 444.5,191.2 444.9,191.4 445.4,192.3 445.9,192.4 446.4,193.3 446.9,193.7 447.4,194.0 447.9,194.8 448.4,195.2 448.9,195.9 449.4,195.9 449.9,196.8 450.4,197.2 450.9,197.1 451.4,198.2 451.9,198.4 452.4,198.9 452.9,199.6 453.4,199.8 453.9,200.1 454.4,201.0 454.9,201.4 455.4,201.9 455.9,202.2 456.4,202.9 456.9,203.2 457.4,204.1 457.9,204.6 458.4,204.9 458.9,205.4 459.4,205.8 460.0,206.4 460.5,207.0 461.0,207.5 461.5,207.7 462.0,208.5 462.5,208.3 463.0,209.1 463.5,209.4 464.0,209.5 464.5,210.8 465.1,210.8 465.6,211.2 466.1,211.8 466.6,212.4 467.1,213.1 467.6,213.3 468.1,214.2 468.6,214.5 469.1,214.9 469.6,215.4 470.1,216.1 470.7,216.1 471.2,216.9 471.7,217.0 472.2,217.9 472.7,218.5 473.3,218.3 473.8,218.8 474.3,219.6 474.9,219.9 475.4,220.7 475.9,219.9 476.5,220.9 477.1,220.8 477.6,222.3 478.2,222.7 478.8,222.8 479.3,223.6 479.9,223.9 480.5,224.0 481.1,224.4 481.7,225.2 482.3,225.2 482.9,225.8 483.5,225.4 484.1,226.4 484.7,226.4 485.3,226.7 485.9,227.2 486.5,227.9 487.2,228.2 487.8,227.8 488.4,228.2 489.0,228.9 489.6,229.4 490.3,229.1 490.9,230.1 491.5,229.6 492.2,230.4 492.8,230.5 493.5,230.9 494.1,231.5 494.8,231.2 495.4,231.2 496.1,232.1 496.7,231.7 497.3,232.1 498.0,233.0 498.6,233.5 499.3,233.7 499.9,233.9 500.5,233.5 501.1,234.7 501.7,234.3 502.3,235.5 502.9,235.3 503.5,236.0 504.0,236.6 504.6,237.1 505.2,237.0 505.8,237.9 506.4,237.9 507.0,238.4 507.5,239.0 508.1,239.2 508.7,239.7 509.4,239.8 510.0,240.4 510.6,240.8 511.2,240.8 511.9,241.3 512.5,240.8 513.1,240.7 513.8,241.9 514.4,242.5 515.1,242.6 515.7,242.8 516.4,243.1 517.0,243.3 517.7,243.6 518.3,243.4 519.0,243.9 519.6,244.0 520.3,243.9 520.9,244.4 521.6,244.8 522.3,245.4 522.9,245.1 523.6,245.1 524.2,245.5 524.9,246.4 525.6,246.5 526.2,246.2 526.9,246.3 527.5,246.9 528.2,247.3 528.9,247.8 529.5,247.7 530.2,248.2 530.8,248.5 531.5,248.5 532.2,248.9 532.8,249.1 533.5,249.0 534.2,249.4 534.8,249.7 535.5,250.0 536.1,250.0 536.8,250.3 537.5,250.6 538.1,251.1 538.8,250.9 539.4,251.1 540.1,250.6 540.7,251.6 541.4,251.5 542.0,252.2 542.7,252.3 543.4,252.4 544.0,252.7 544.7,253.2 545.3,253.4 546.0,253.4 546.6,254.0 547.3,254.3 547.9,254.3 548.6,254.7 549.2,255.1 549.9,254.9 550.6,255.1 551.2,255.5 551.9,255.9 552.6,256.2 553.2,256.6 553.9,256.7 554.6,256.6 555.2,257.2 555.9,257.2 556.6,256.8 557.3,257.6 557.9,257.1 558.6,257.3 559.3,257.7 560.0,258.2 560.6,258.2 561.3,257.9 562.0,258.6 562.7,258.4 563.3,259.3 564.0,258.4 564.7,259.4 565.4,259.3 566.1,260.1 566.7,260.1 567.4,260.0 568.1,260.5 568.8,260.7 569.5,260.9 570.1,261.0 570.8,260.1 571.5,261.2 572.2,261.2 572.9,261.7 573.5,261.2 574.2,262.0 574.9,262.2 575.6,261.9 576.3,262.3 576.9,262.4 577.6,262.7 578.3,263.0 579.0,262.2 579.7,263.2 580.4,263.3 581.0,263.4 581.7,263.6 582.4,264.0 583.1,263.1 583.8,264.2 584.4,264.5 585.1,264.0 585.8,264.2 586.5,264.9 587.2,265.0 587.9,264.6 588.5,264.6 589.2,265.3 589.9,265.0 590.6,265.7 591.3,265.7 591.9,265.9 592.6,265.6 593.3,266.3 594.0,266.2 594.7,266.8 595.4,266.9 596.0,266.9 596.7,267.3 597.4,267.0 598.1,266.8 598.8,267.5 599.5,267.6 600.1,267.9 600.8,267.7 601.5,267.8 602.2,268.4 602.9,268.6 603.6,268.7 604.2,268.9 604.9,268.6 605.6,268.4 606.3,269.0 607.0,269.5 607.7,269.3 608.3,269.3 609.0,269.9 609.7,269.9 610.4,270.2 611.1,270.2 611.8,270.5 612.5,269.6 613.1,270.7 613.8,270.8 614.5,271.0 615.2,271.2 615.9,271.1 616.6,271.6 617.2,271.6 617.9,271.9 618.6,271.7 619.3,271.7 620.0,272.1 620.7,272.1 621.3,272.0 622.0,272.7 622.7,272.6 623.4,273.1 624.1,272.6 624.8,273.3 625.5,273.4 626.1,273.2 626.8,273.3 627.5,273.1 628.2,273.2 628.9,274.1 629.6,274.2 630.3,274.1 630.9,274.6 631.6,274.2 632.3,273.8 633.0,274.6 633.7,275.1 634.4,274.5 635.1,275.1 635.7,275.1 636.4,274.8 637.1,275.7 637.8,275.9 638.5,276.2 639.2,275.6 639.9,276.1 640.6,275.5 641.2,276.7 641.9,276.1 642.6,275.6 643.3,276.6 644.0,277.1 644.7,277.3 645.4,277.4 646.0,277.1 646.7,277.3 647.4,277.4 648.1,277.1 648.8,278.1 649.5,277.4 650.2,278.1 650.9,277.6 651.6,278.6 652.2,278.3 652.9,278.9 653.6,278.8 654.3,277.9 655.0,278.8 655.7,279.2 656.4,279.4 657.1,279.1 657.7,279.4 658.4,279.4 659.1,279.9 659.8,280.0 660.5,279.7 661.2,280.4 661.9,280.2 662.6,280.4 663.3,280.7 664.0,280.3 664.6,280.4 665.3,280.8 666.0,281.2 666.7,280.6 667.4,281.4 668.1,280.8 668.8,281.3 669.5,281.7 670.2,281.1 670.9,282.0 671.6,282.1 672.2,281.9 672.9,281.8 673.6,282.1 674.3,281.9 675.0,282.3 675.7,282.6 676.4,281.8 677.1,283.0 677.8,282.5 678.5,283.1 679.2,282.2 679.9,283.5 680.5,283.1 681.2,283.4 681.9,283.7 682.6,283.5 683.3,283.9 684.0,283.5 684.7,283.9 685.4,284.3 686.1,283.8 686.8,284.1 687.5,284.5 688.2,284.4 688.9,284.6 689.5,284.8 690.2,284.9 690.9,284.8 691.6,284.9 692.3,284.8 693.0,285.3 693.7,285.2 694.4,284.8 695.1,285.5 695.8,285.4 696.5,285.0 697.2,285.2 697.9,285.2 698.6,286.0 699.2,286.0 699.9,286.3 700.6,285.2 701.3,286.6 702.0,286.3 702.7,285.9 703.4,286.5 704.1,286.2 704.8,286.5 705.5,286.8 706.2,287.2 706.9,287.2 707.6,286.6 708.3,287.4 709.0,286.5 709.7,287.3 710.3,287.7 711.0,287.5 711.7,287.4 712.4,287.7 713.1,287.6 713.8,287.7 714.5,287.8 715.2,288.0 715.9,287.4 716.6,287.5 717.3,288.0 718.0,288.0 718.7,288.6 719.4,288.8 720.1,288.0 720.8,288.7 721.5,289.1 722.2,288.6 722.9,288.8 723.6,288.7 724.2,289.5 724.9,289.1 725.6,288.8 726.3,289.3 727.0,289.4 727.7,289.6 728.4,289.9 729.1,289.9 729.8,290.1 730.5,289.8 731.2,289.8 731.9,289.8 732.6,290.0 733.3,290.0 734.0,289.5 734.7,289.7 735.4,290.3 736.1,290.5 736.8,290.5 737.5,290.5 738.2,290.3 738.9,290.9 739.6,290.8 740.3,290.9 740.9,291.0 741.6,290.7 742.3,290.9 743.0,290.4 743.7,290.3 744.4,290.9 745.1,291.4 745.8,291.3 746.5,291.8 747.2,291.6 747.9,291.9 748.6,291.2 749.3,292.0 750.0,291.6 750.7,292.0 751.4,291.5 752.1,292.1 752.8,292.4 753.5,292.4 754.2,292.1 754.9,292.5 755.6,292.6 755.6,296.5 754.9,296.4 754.2,296.4 753.5,296.4 752.8,297.2 752.1,296.7 751.4,295.9 750.7,295.9 750.0,295.8 749.3,295.9 748.6,295.7 747.9,296.6 747.2,295.4 746.5,295.8 745.8,295.6 745.1,295.5 744.4,295.3 743.7,295.3 743.0,295.4 742.3,295.4 741.6,295.5 740.9,294.8 740.3,294.8 739.6,295.0 738.9,294.8 738.2,294.7 737.5,294.7 736.8,295.4 736.1,294.6 735.4,294.4 734.7,294.4 734.0,294.6 733.3,294.2 732.6,294.2 731.9,294.4 731.2,294.4 730.5,293.8 729.8,293.8 729.1,293.5 728.4,293.5 727.7,293.4 727.0,293.6 726.3,294.3 725.6,293.3 724.9,293.2 724.2,293.1 723.6,293.1 722.9,293.5 722.2,292.8 721.5,292.9 720.8,292.9 720.1,292.6 719.4,292.4 718.7,292.6 718.0,292.8 717.3,292.3 716.6,292.2 715.9,292.7 715.2,292.1 714.5,291.9 713.8,291.8 713.1,291.9 712.4,291.8 711.7,291.8 711.0,291.6 710.3,291.8 709.7,291.2 709.0,291.2 708.3,291.2 707.6,291.0 706.9,291.0 706.2,291.2 705.5,291.2 704.8,291.0 704.1,291.0 703.4,291.1 702.7,290.8 702.0,290.6 701.3,290.2 700.6,290.4 699.9,290.4 699.2,290.1 698.6,289.8 697.9,289.7 697.2,289.6 696.5,290.0 695.8,290.7 695.1,289.6 694.4,289.6 693.7,289.3 693.0,289.3 692.3,289.0 691.6,289.0 690.9,289.5 690.2,288.6 689.5,288.5 688.9,288.8 688.2,288.4 687.5,288.4 686.8,288.2 686.1,288.1 685.4,287.9 684.7,288.0 684.0,288.1 683.3,288.1 682.6,287.4 681.9,287.6 681.2,287.4 680.5,287.8 679.9,287.1 679.2,286.9 678.5,286.8 677.8,287.0 677.1,286.8 676.4,286.5 675.7,286.7 675.0,286.6 674.3,286.6 673.6,286.1 672.9,286.0 672.2,286.6 671.6,286.1 670.9,285.8 670.2,285.5 669.5,285.9 668.8,285.6 668.1,285.8 667.4,285.1 666.7,285.6 666.0,285.1 665.3,285.6 664.6,284.6 664.0,284.6 663.3,284.8 662.6,284.5 661.9,284.6 661.2,284.6 660.5,284.6 659.8,283.7 659.1,283.8 658.4,283.6 657.7,283.4 657.1,284.1 656.4,283.2 655.7,283.3 655.0,282.9 654.3,282.9 653.6,282.7 652.9,282.6 652.2,282.9 651.6,282.4 650.9,282.4 650.2,282.3 649.5,281.9 648.8,281.8 648.1,281.6 647.4,281.7 646.7,281.9 646.0,281.9 645.4,281.1 644.7,281.5 644.0,281.7 643.3,280.9 642.6,280.6 641.9,281.1 641.2,280.9 640.6,280.3 639.9,280.9 639.2,280.0 638.5,280.2 637.8,280.0 637.1,280.0 636.4,279.3 635.7,279.7 635.1,279.1 634.4,278.9 633.7,279.0 633.0,278.7 632.3,278.7 631.6,278.6 630.9,278.4 630.3,278.3 629.6,278.5 628.9,278.0 628.2,279.0 627.5,277.7 626.8,277.5 626.1,277.6 625.5,277.5 624.8,278.0 624.1,277.2 623.4,277.4 622.7,276.8 622.0,276.4 621.3,276.5 620.7,276.4 620.0,276.3 619.3,276.0 618.6,275.9 617.9,275.8 617.2,276.3 616.6,275.3 615.9,275.1 615.2,275.0 614.5,275.2 613.8,275.5 613.1,275.5 612.5,274.5 611.8,274.2 611.1,274.0 610.4,274.5 609.7,274.0 609.0,273.9 608.3,273.6 607.7,273.6 607.0,273.4 606.3,273.0 605.6,273.5 604.9,273.3 604.2,272.9 603.6,272.8 602.9,272.9 602.2,273.0 601.5,272.0 600.8,272.2 600.1,271.9 599.5,271.8 598.8,271.5 598.1,271.3 597.4,271.9 596.7,271.4 596.0,270.9 595.4,270.7 594.7,270.4 594.0,270.3 593.3,270.4 592.6,270.3 591.9,269.9 591.3,270.1 590.6,269.8 589.9,269.9 589.2,269.5 588.5,269.1 587.9,269.1 587.2,269.1 586.5,268.9 585.8,269.3 585.1,268.5 584.4,268.8 583.8,268.6 583.1,268.5 582.4,267.8 581.7,267.7 581.0,267.3 580.4,267.4 579.7,267.9 579.0,267.9 578.3,267.1 577.6,266.6 576.9,266.7 576.3,266.7 575.6,266.1 574.9,266.0 574.2,265.8 573.5,265.9 572.9,265.4 572.2,266.2 571.5,265.5 570.8,265.4 570.1,264.9 569.5,264.9 568.8,264.5 568.1,264.2 567.4,264.3 566.7,264.1 566.1,263.7 565.4,263.6 564.7,264.7 564.0,263.6 563.3,263.5 562.7,263.1 562.0,262.7 561.3,262.8 560.6,262.8 560.0,262.4 559.3,262.6 558.6,262.1 557.9,261.6 557.3,261.7 556.6,262.0 555.9,261.3 555.2,261.5 554.6,260.5 553.9,260.7 553.2,260.7 552.6,259.9 551.9,260.0 551.2,260.5 550.6,259.3 549.9,259.4 549.2,259.3 548.6,258.6 547.9,258.9 547.3,258.4 546.6,257.9 546.0,258.0 545.3,257.9 544.7,257.2 544.0,257.3 543.4,256.7 542.7,256.6 542.0,256.9 541.4,256.6 540.7,255.7 540.1,255.8 539.4,255.2 538.8,255.8 538.1,255.2 537.5,254.8 536.8,254.2 536.1,254.0 535.5,254.1 534.8,253.6 534.2,253.2 533.5,253.7 532.8,253.8 532.2,252.8 531.5,252.8 530.8,252.4 530.2,252.0 529.5,252.3 528.9,251.6 528.2,251.9 527.5,252.3 526.9,251.3 526.2,251.3 525.6,250.3 524.9,250.2 524.2,250.2 523.6,250.7 522.9,249.4 522.3,249.3 521.6,248.9 520.9,248.7 520.3,248.6 519.6,248.1 519.0,247.9 518.3,248.2 517.7,248.1 517.0,247.4 516.4,247.1 515.7,246.9 515.1,247.0 514.4,246.2 513.8,246.2 513.1,246.4 512.5,245.2 511.9,246.0 511.2,244.7 510.6,244.3 510.0,244.6 509.4,244.1 508.7,243.9 508.1,243.0 507.5,242.6 507.0,242.5 506.4,242.4 505.8,241.5 505.2,241.2 504.6,240.7 504.0,240.4 503.5,240.0 502.9,240.1 502.3,239.3 501.7,238.9 501.1,238.6 500.5,238.2 499.9,238.4 499.3,237.4 498.6,237.1 498.0,238.1 497.3,237.0 496.7,237.1 496.1,236.1 495.4,236.6 494.8,235.6 494.1,235.6 493.5,234.9 492.8,234.8 492.2,234.5 491.5,234.4 490.9,234.2 490.3,233.9 489.6,233.4 489.0,233.0 488.4,233.2 487.8,232.2 487.2,232.3 486.5,231.6 485.9,231.4 485.3,231.3 484.7,230.9 484.1,230.6 483.5,230.1 482.9,229.8 482.3,229.5 481.7,229.0 481.1,228.4 480.5,228.6 479.9,227.7 479.3,227.6 478.8,227.4 478.2,227.1 477.6,226.5 477.1,226.1 476.5,225.4 475.9,224.9 475.4,224.3 474.9,224.0 474.3,223.8 473.8,223.7 473.3,222.5 472.7,222.4 472.2,223.1 471.7,221.3 471.2,220.9 470.7,221.6 470.1,220.6 469.6,219.9 469.1,219.3 468.6,219.1 468.1,218.0 467.6,217.6 467.1,217.1 466.6,217.5 466.1,216.0 465.6,215.4 465.1,215.9 464.5,214.6 464.0,214.4 463.5,214.0 463.0,213.3 462.5,212.9 462.0,212.4 461.5,212.1 461.0,211.4 460.5,211.0 460.0,210.6 459.4,209.6 458.9,209.5 458.4,209.2 457.9,208.5 457.4,207.9 456.9,207.3 456.4,206.9 455.9,206.8 455.4,205.8 454.9,205.8 454.4,205.0 453.9,204.7 453.4,204.2 452.9,203.8 452.4,203.0 451.9,202.9 451.4,201.9 450.9,201.8 450.4,201.5 449.9,200.4 449.4,200.2 448.9,199.4 448.4,199.2 447.9,199.2 447.4,198.5 446.9,198.3 446.4,197.2 445.9,196.5 445.4,196.2 444.9,195.5 444.5,195.2 444.0,194.6 443.5,194.2 443.1,194.1 442.6,193.2 442.2,193.1 441.7,191.9 441.3,191.5 440.8,190.7 440.4,190.2 439.9,190.0 439.4,189.6 439.0,188.7 438.5,188.9 438.1,187.7 437.6,187.5 437.1,186.7 436.6,186.0 436.2,185.7 435.7,185.5 435.2,184.5 434.7,184.0 434.2,183.9 433.7,183.6 433.3,182.5 432.8,182.7 432.3,181.8 431.8,181.2 431.3,180.4 430.8,179.9 430.3,179.7 429.8,178.9 429.3,178.5 428.8,178.1 428.2,178.2 427.7,177.4 427.2,177.1 426.6,176.6 426.1,175.8 425.5,175.7 424.9,175.0 424.3,175.6 423.7,174.6 423.1,174.4 422.5,173.7 421.9,174.5 421.2,173.0 420.6,172.9 419.9,173.3 419.2,172.8 418.5,172.6 417.9,172.2 417.2,172.5 416.5,172.6 415.8,172.7 415.1,172.6 414.4,172.7 413.7,172.8 413.0,173.2 412.4,173.7 411.7,174.3 411.0,173.6 410.4,174.3 409.7,174.5 409.1,174.9 408.4,174.9 407.8,175.7 407.1,175.5 406.5,175.6 405.8,175.9 405.2,176.1 404.5,176.4 403.9,177.3 403.2,176.8 402.6,177.9 401.9,177.4 401.2,177.8 400.6,177.9 399.9,178.2 399.2,178.3 398.6,178.9 397.9,178.8 397.2,179.6 396.5,179.3 395.9,179.7 395.2,179.1 394.5,179.7 393.8,180.1 393.2,180.2 392.5,179.9 391.8,180.2 391.1,180.6 390.4,180.4 389.8,181.4 389.1,180.8 388.4,181.2 387.7,181.2 387.1,181.4 386.4,182.0 385.7,181.8 385.0,182.1 384.4,182.4 383.7,182.5 383.0,182.6 382.3,182.7 381.7,183.0 381.0,183.0 380.3,183.6 379.7,183.6 379.0,183.6 378.3,184.6 377.7,184.3 377.0,184.3 376.4,184.8 375.7,185.3 375.0,185.1 374.4,185.5 373.7,186.2 373.1,185.9 372.4,187.0 371.8,186.5 371.1,187.0 370.5,186.9 369.8,187.0 369.2,187.4 368.5,187.7 367.9,188.1 367.2,188.4 366.5,189.1 365.9,188.6 365.2,189.1 364.6,189.2 363.9,189.7 363.3,190.6 362.6,189.8 362.0,190.2 361.3,191.1 360.7,191.2 360.0,192.0 359.4,191.2 358.7,191.8 358.0,191.7 357.4,192.3 356.7,192.0 356.1,192.6 355.4,192.5 354.8,194.2 354.1,193.2 353.4,193.3 352.8,193.8 352.1,193.7 351.5,194.4 350.8,194.4 350.2,194.4 349.5,194.8 348.8,195.3 348.2,195.4 347.5,195.6 346.9,196.0 346.2,196.0 345.6,196.2 344.9,197.1 344.2,196.9 343.6,196.9 342.9,197.1 342.3,197.6 341.6,198.1 340.9,198.8 340.3,198.0 339.6,198.3 339.0,198.9 338.3,199.6 337.6,199.0 337.0,199.5 336.3,199.5 335.6,200.1 335.0,200.0 334.3,200.7 333.6,200.8 333.0,201.2 332.3,200.8 331.6,201.5 331.0,201.1 330.3,201.9 329.6,202.4 329.0,202.3 328.3,202.0 327.7,202.5 327.0,202.6 326.4,202.8 325.7,203.3 325.1,203.4 324.4,203.7 323.8,204.5 323.1,204.2 322.5,204.5 321.8,204.9 321.2,204.8 320.5,205.5 319.9,205.7 319.3,205.7 318.6,206.2 318.0,206.6 317.3,206.5 316.7,207.4 316.0,207.3 315.4,208.3 314.7,208.1 314.1,209.1 313.5,208.5 312.8,208.9 312.2,209.1 311.5,209.5 310.9,209.9 310.2,209.6 309.6,209.8 309.0,210.9 308.3,210.3 307.7,210.7 307.1,211.5 306.4,211.7 305.8,211.8 305.2,212.2 304.6,212.6 303.9,212.6 303.3,213.5 302.7,213.8 302.1,214.2 301.5,214.0 300.9,214.8 300.3,214.8 299.7,215.5 299.1,215.4 298.5,215.7 297.9,216.2 297.3,216.4 296.7,216.9 296.1,217.7 295.5,217.7 294.9,217.9 294.4,218.7 293.8,218.9 293.2,219.8 292.6,220.1 292.0,220.0 291.5,220.6 290.9,221.2 290.3,221.6 289.7,221.6 289.2,222.6 288.6,222.8 288.0,223.7 287.5,223.2 286.9,224.4 286.3,224.6 285.8,224.6 285.2,225.1 284.7,225.6 284.1,226.2 283.5,226.4 283.0,226.6 282.4,227.3 281.9,227.9 281.3,227.8 280.8,228.3 280.2,228.8 279.7,229.5 279.1,229.6 278.6,230.5 278.1,231.2 277.6,231.2 277.1,231.7 276.6,232.2 276.0,232.7 275.5,232.8 275.0,233.9 274.5,234.4 274.0,234.4 273.4,235.2 272.9,235.2 272.4,236.7 271.9,236.1 271.4,236.7 270.8,237.2 270.3,238.1 269.8,239.1 269.3,238.4 268.7,239.0 268.2,239.5 267.6,239.8 267.1,241.1 266.6,240.7 266.0,242.0 265.5,241.8 265.0,243.0 264.5,243.1 264.0,243.2 263.5,244.2 263.0,244.1 262.6,245.0 262.1,245.4 261.6,246.4 261.1,246.1 260.6,247.0 260.2,247.7 259.7,247.9 259.2,248.1 258.7,248.9 258.2,249.1 257.7,250.0 257.2,250.4 256.7,250.9 256.2,251.8 255.7,252.2 255.2,252.2 254.6,253.5 254.1,253.7 253.5,253.7 253.0,254.6 252.4,254.6 251.9,255.3 251.3,255.8 250.7,255.7 250.2,256.0 249.6,256.4 249.1,257.0 248.6,257.3 248.0,257.8 247.5,259.1 247.1,259.1 246.6,259.2 246.1,259.7 245.7,260.4 245.3,261.3 244.9,262.1 244.5,262.4 244.2,262.8 243.9,263.9 243.6,264.5 243.3,265.0 243.0,265.4 242.8,266.1 242.6,267.4 242.4,267.3 242.2,268.0 242.0,268.9 241.8,269.6 241.6,270.2 241.4,270.6 241.2,271.5 241.0,272.0 240.8,273.1 240.7,273.8 240.5,274.0 240.3,274.8 240.1,275.8 240.0,276.5 239.8,276.6 239.6,277.3 239.5,278.0 239.3,278.7 239.1,279.3 239.0,281.0 238.8,280.9 238.6,281.8 238.5,282.7 238.3,283.0 238.1,283.7 238.0,284.1 237.8,284.9 237.7,285.7 237.5,286.3 237.4,287.5 237.2,288.2 237.1,288.5 237.0,289.0 236.8,290.0 236.7,290.8 236.6,291.4 236.4,291.6 236.3,292.4 236.1,293.9 236.0,293.7 235.8,295.0 235.7,295.1 235.5,295.8 235.3,296.5 235.1,297.4 235.0,298.2 234.8,298.6 234.6,299.6 234.4,300.0 234.2,300.7 234.1,301.7 233.9,302.2 233.7,303.1 233.5,303.4 233.3,303.9 233.1,305.2 232.9,306.1 232.8,306.0 232.6,307.2 232.4,307.9 232.2,308.2 232.0,309.6 231.9,309.4 231.7,310.5 231.5,311.5 231.2,311.7 230.9,312.0 230.6,312.7 230.3,313.4 229.9,313.8 229.5,314.7 229.0,315.1 228.6,315.7 228.0,315.7 227.3,316.0 226.6,316.7 225.9,315.6 225.2,315.7 224.5,315.8 223.8,315.9 223.1,316.2 222.4,315.6 221.7,315.9 221.0,316.5 220.3,316.6 219.6,316.1 218.9,315.7 218.2,315.7 217.5,315.8 216.8,316.1 216.1,315.9 215.4,315.7 214.7,316.1 214.0,316.1 213.3,315.8 212.6,315.9 211.9,315.7 211.2,316.3 210.5,315.7 209.8,315.6 209.1,316.2 208.4,315.8 207.7,315.7 207.0,315.6 206.3,315.7 205.6,316.0 204.9,315.6 204.2,316.3 203.5,315.9 202.8,316.1 202.1,316.0 201.4,315.9 200.7,315.8 200.0,315.9 199.3,316.0 198.6,315.9 197.9,316.5 197.2,315.9 196.5,316.6 195.8,315.7 195.1,316.2 194.4,316.2 193.7,316.1 193.0,315.6 192.3,315.9 191.6,316.1 190.9,315.9 190.2,316.0 189.5,315.6 188.8,316.1 188.1,315.6 187.4,315.7 186.7,316.8 186.0,316.4 185.3,315.8 184.6,315.8 183.9,316.3 183.2,317.0 182.5,316.0 181.8,315.8 181.1,316.1 180.4,316.5 179.7,315.6 179.0,316.1 178.3,315.6 177.6,315.6 176.9,315.8 176.2,315.9 175.5,316.1 174.8,315.8 174.1,315.9 173.4,316.0 172.7,315.9 172.0,315.7 171.3,315.7 170.6,316.1 169.9,316.0 169.2,316.0 168.5,316.0 167.8,316.0 167.1,316.9 166.4,316.0 165.7,316.6 165.0,316.1 164.3,316.4 163.6,315.6 162.9,315.6 162.2,316.2 161.5,315.9 160.8,316.1 160.1,315.9 159.4,316.3 158.7,316.4 158.0,316.0 157.3,316.0 156.6,316.4 155.9,315.8 155.2,315.6 154.5,315.9 153.8,315.9 153.1,315.6 152.4,316.2 151.7,315.7 151.0,315.8 150.3,316.0 149.6,316.0 148.9,315.7 148.2,315.9 147.5,316.3 146.8,315.6 146.1,315.8 145.4,316.8 144.7,315.7 144.0,315.6 143.3,316.2 142.6,316.2 141.9,316.1 141.2,316.1 140.5,315.9 139.8,315.7 139.1,315.6 138.4,315.7 137.7,315.8 137.0,315.9 136.3,315.7 135.6,316.2 134.9,316.4 134.2,315.8 133.5,316.4 132.8,316.3 132.1,315.6 131.4,315.6 130.7,316.0 130.0,315.9 129.3,315.8 128.6,315.9 127.9,315.9 127.2,315.7 126.5,316.1 125.8,315.8 125.1,316.2 124.4,315.8 123.7,315.8 123.0,315.6 122.3,315.9 121.6,316.6 120.9,315.8 120.2,315.7 119.5,315.7 118.8,316.0 118.1,315.6 117.4,315.8 116.7,315.6 116.0,315.6 115.3,315.8 114.6,316.6 113.9,316.3 113.2,316.2 112.5,316.3 111.8,316.0 111.1,316.0 110.4,315.9 109.7,315.6 109.0,316.1 108.3,315.7 107.6,316.3 106.9,315.8 106.2,316.4 105.5,315.9 104.8,316.4 104.1,315.7 103.4,315.6 102.7,316.0 102.0,315.8 101.3,316.0 100.6,315.7 99.9,315.6 99.2,315.8 98.5,316.3 97.8,315.9 97.1,316.0 96.4,316.7 95.7,316.6 95.0,316.5 94.3,315.7 93.6,315.6 92.9,316.6 92.2,315.6 91.5,316.0 90.8,315.8 90.1,316.7 89.4,315.9 88.7,315.6 88.0,316.2 87.3,316.4 86.6,316.1 85.9,316.1 85.2,315.6 84.5,315.6 83.8,315.6 83.1,316.2 82.4,315.9 81.7,315.8 81.0,315.6 80.3,316.2 79.6,315.8 78.9,315.8 78.2,315.6 77.5,316.2 76.8,315.8 76.1,315.6 75.4,316.0 74.7,315.8 74.0,315.6 73.3,316.0 72.6,315.7 71.9,316.3 71.2,315.7 70.5,315.9 69.8,315.7 69.1,315.8 68.4,315.8 67.7,315.8 67.0,316.0 66.3,315.7 65.6,315.6 64.9,315.7 64.2,316.1 63.5,316.3 62.8,315.8 62.1,315.8 61.4,316.4 60.7,316.7 60.0,315.9 59.3,315.7 58.6,315.6 57.9,315.8 57.2,316.6 56.5,315.9 55.8,315.7 55.1,315.9 54.4,316.2 53.7,316.1 53.0,315.7 52.3,315.7 51.6,316.2 50.9,315.7 50.2,315.6 49.5,317.0 48.8,315.9 48.1,316.7 47.4,315.9 46.7,316.2 46.0,315.9 45.3,315.8 44.6,316.4 43.9,315.6 43.2,315.7 42.5,316.5 41.8,316.3 41.1,316.0 40.4,315.6 39.7,315.8 39.0,315.9 38.3,315.8 37.6,316.2 36.9,315.6 36.2,315.7 35.5,316.1 34.8,316.3 34.1,315.9 33.4,315.7 32.7,316.6 32.0,316.1 31.3,316.1 30.6,315.7 29.9,316.5 29.2,315.6 28.5,315.6 27.8,316.7 27.1,315.7 26.4,316.5 25.7,315.7 25.0,315.7 24.3,316.6 23.6,316.6 22.9,316.4 22.2,316.0 21.5,315.6 20.8,316.2 20.1,315.8 19.4,315.8 18.7,315.8 18.0,316.6 17.3,315.9 16.6,316.3 15.9,316.3 15.2,315.6 14.5,315.6 13.8,315.7 13.1,316.0 12.4,315.6 11.7,316.7 11.0,316.6Z" fill="#f58c2a" stroke="none"/><path d="M11.0,313.8 12.5,313.8 14.0,313.8 15.5,313.8 17.0,313.8 18.5,313.8 20.0,313.8 21.5,313.8 23.0,313.8 24.5,313.8 26.0,313.8 27.5,313.8 29.0,313.8 30.5,313.8 32.0,313.8 33.5,313.8 35.0,313.8 36.5,313.8 38.0,313.8 39.5,313.8 41.0,313.8 42.5,313.8 44.0,313.8 45.5,313.8 47.0,313.8 48.5,313.8 50.0,313.8 51.5,313.8 53.0,313.8 54.5,313.8 56.0,313.8 57.5,313.8 59.0,313.8 60.5,313.8 62.0,313.8 63.5,313.8 65.0,313.8 66.5,313.8 68.0,313.8 69.5,313.8 71.0,313.8 72.5,313.8 74.0,313.8 75.5,313.8 77.0,313.8 78.5,313.8 80.0,313.8 81.5,313.8 83.0,313.8 84.5,313.8 86.0,313.8 87.5,313.8 89.0,313.8 90.5,313.8 92.0,313.8 93.5,313.8 95.0,313.8 96.5,313.8 98.0,313.8 99.5,313.8 101.0,313.8 102.5,313.8 104.0,313.8 105.5,313.8 107.0,313.8 108.5,313.8 110.0,313.8 111.5,313.8 113.0,313.8 114.5,313.8 116.0,313.8 117.5,313.8 119.0,313.8 120.5,313.8 122.0,313.8 123.5,313.8 125.0,313.8 126.5,313.8 128.0,313.8 129.5,313.8 131.0,313.8 132.5,313.8 134.0,313.8 135.5,313.8 137.0,313.8 138.5,313.8 140.0,313.8 141.5,313.8 143.0,313.8 144.5,313.8 146.0,313.8 147.5,313.8 149.0,313.8 150.5,313.8 152.0,313.8 153.5,313.8 155.0,313.8 156.5,313.8 158.0,313.8 159.5,313.8 161.0,313.8 162.5,313.8 164.0,313.8 165.5,313.8 167.0,313.8 168.5,313.8 170.0,313.8 171.5,313.8 173.0,313.8 174.5,313.8 176.0,313.8 177.5,313.8 179.0,313.8 180.5,313.8 182.0,313.8 183.5,313.8 185.0,313.8 186.5,313.8 188.0,313.8 189.5,313.8 191.0,313.8 192.5,313.8 194.0,313.8 195.5,313.8 197.0,313.8 198.5,313.8 200.0,313.8 201.5,313.8 203.0,313.8 204.5,313.8 206.0,313.8 207.5,313.8 209.0,313.8 210.5,313.8 212.0,313.8 213.5,313.8 215.0,313.8 216.5,313.8 218.0,313.8 219.5,313.8 221.0,313.8 222.5,313.8 224.0,313.8 225.5,313.8 227.0,313.8 228.4,313.7 229.4,312.6 230.3,311.3 231.0,310.0 231.5,308.6 231.9,307.2 232.3,305.7 232.7,304.3 233.1,302.8 233.5,301.4 233.9,299.9 234.3,298.5 234.7,297.0 235.1,295.6 235.4,294.1 235.8,292.7 236.1,291.2 236.4,289.7 236.7,288.3 237.0,286.8 237.3,285.3 237.6,283.9 238.0,282.4 238.3,280.9 238.7,279.5 239.0,278.0 239.4,276.6 239.7,275.1 240.1,273.7 240.5,272.2 240.8,270.8 241.2,269.3 241.6,267.9 242.0,266.4 242.5,265.0 242.9,263.6 243.5,262.2 244.2,260.8 245.0,259.5 245.8,258.3 246.8,257.2 247.8,256.1 248.9,255.1 250.1,254.1 251.3,253.2 252.5,252.3 253.7,251.4 254.9,250.5 256.0,249.5 257.1,248.5 258.1,247.4 259.2,246.3 260.2,245.2 261.3,244.2 262.3,243.1 263.3,242.0 264.4,240.9 265.5,239.9 266.6,238.9 267.7,237.9 268.9,237.0 270.0,236.0 271.1,235.0 272.3,234.0 273.4,233.0 274.5,232.0 275.6,231.0 276.7,230.0 277.8,228.9 278.9,227.9 280.0,227.0 281.2,226.0 282.4,225.1 283.6,224.2 284.8,223.3 286.0,222.4 287.2,221.5 288.4,220.6 289.7,219.8 290.9,218.9 292.1,218.1 293.4,217.2 294.6,216.4 295.9,215.6 297.1,214.8 298.4,214.0 299.7,213.2 301.0,212.4 302.3,211.7 303.6,210.9 304.9,210.2 306.2,209.6 307.6,208.9 309.0,208.3 310.3,207.7 311.7,207.1 313.1,206.5 314.5,205.9 315.9,205.3 317.2,204.7 318.6,204.1 320.0,203.6 321.4,203.0 322.8,202.4 324.1,201.8 325.5,201.3 326.9,200.7 328.3,200.2 329.7,199.7 331.2,199.2 332.6,198.7 334.0,198.3 335.4,197.8 336.9,197.4 338.3,196.9 339.7,196.4 341.1,195.9 342.5,195.4 344.0,194.9 345.4,194.4 346.8,193.9 348.2,193.3 349.6,192.8 351.0,192.3 352.4,191.8 353.8,191.3 355.2,190.8 356.6,190.2 358.0,189.7 359.4,189.2 360.9,188.7 362.3,188.2 363.7,187.6 365.1,187.1 366.5,186.5 367.9,186.0 369.2,185.4 370.6,184.9 372.0,184.3 373.4,183.8 374.9,183.3 376.3,182.8 377.7,182.3 379.1,181.8 380.5,181.3 382.0,180.9 383.4,180.5 384.8,180.1 386.3,179.7 387.7,179.3 389.2,178.9 390.6,178.5 392.1,178.2 393.5,177.8 395.0,177.4 396.4,177.0 397.9,176.6 399.3,176.2 400.8,175.8 402.2,175.3 403.6,174.8 405.0,174.2 406.4,173.7 407.8,173.1 409.2,172.5 410.6,172.0 412.0,171.5 413.4,171.1 414.9,170.7 416.4,170.5 417.9,170.4 419.3,170.5 420.8,171.0 422.1,171.6 423.5,172.3 424.7,173.1 426.0,173.9 427.2,174.8 428.3,175.8 429.4,176.8 430.5,177.9 431.6,178.9 432.6,180.0 433.7,181.1 434.7,182.1 435.7,183.2 436.8,184.3 437.8,185.4 438.8,186.5 439.8,187.7 440.7,188.8 441.7,190.0 442.7,191.1 443.7,192.2 444.7,193.4 445.7,194.5 446.7,195.5 447.8,196.6 448.9,197.7 449.9,198.7 451.0,199.7 452.1,200.8 453.2,201.8 454.2,202.9 455.3,203.9 456.4,205.0 457.5,206.0 458.6,207.0 459.7,208.1 460.8,209.1 461.8,210.1 462.9,211.1 464.0,212.2 465.1,213.2 466.2,214.2 467.3,215.2 468.4,216.3 469.5,217.3 470.6,218.3 471.7,219.4 472.8,220.4 473.9,221.3 475.1,222.3 476.3,223.2 477.5,224.1 478.7,225.0 479.9,225.8 481.2,226.7 482.5,227.4 483.8,228.2 485.1,229.0 486.4,229.7 487.7,230.4 489.0,231.1 490.3,231.8 491.7,232.4 493.1,233.0 494.5,233.5 495.9,234.1 497.3,234.7 498.6,235.3 500.0,236.0 501.3,236.7 502.5,237.5 503.8,238.3 505.0,239.2 506.3,240.0 507.5,240.8 508.8,241.6 510.2,242.3 511.5,243.0 512.8,243.6 514.2,244.2 515.6,244.8 517.0,245.3 518.4,245.9 519.8,246.4 521.2,246.9 522.6,247.4 524.0,247.9 525.5,248.4 526.9,248.9 528.3,249.4 529.7,249.9 531.1,250.4 532.6,250.9 534.0,251.4 535.4,251.9 536.8,252.4 538.2,252.9 539.6,253.4 541.0,253.9 542.4,254.5 543.8,255.0 545.2,255.5 546.6,256.1 548.0,256.6 549.4,257.1 550.9,257.6 552.3,258.0 553.7,258.5 555.2,258.9 556.6,259.4 558.0,259.8 559.5,260.2 560.9,260.5 562.4,260.9 563.8,261.3 565.3,261.7 566.7,262.0 568.2,262.4 569.7,262.8 571.1,263.1 572.6,263.5 574.0,263.8 575.5,264.2 576.9,264.5 578.4,264.9 579.9,265.2 581.3,265.5 582.8,265.9 584.2,266.2 585.7,266.6 587.2,266.9 588.6,267.2 590.1,267.6 591.6,267.9 593.0,268.2 594.5,268.6 595.9,268.9 597.4,269.2 598.9,269.6 600.3,269.9 601.8,270.2 603.3,270.5 604.7,270.8 606.2,271.2 607.7,271.5 609.1,271.8 610.6,272.1 612.1,272.4 613.5,272.8 615.0,273.1 616.5,273.4 617.9,273.7 619.4,274.0 620.9,274.3 622.3,274.6 623.8,274.9 625.3,275.3 626.7,275.6 628.2,275.9 629.7,276.2 631.1,276.5 632.6,276.8 634.1,277.1 635.5,277.4 637.0,277.7 638.5,278.0 640.0,278.3 641.4,278.5 642.9,278.8 644.4,279.1 645.9,279.4 647.3,279.7 648.8,280.0 650.3,280.2 651.7,280.5 653.2,280.8 654.7,281.1 656.2,281.3 657.7,281.6 659.1,281.8 660.6,282.1 662.1,282.4 663.6,282.6 665.0,282.9 666.5,283.1 668.0,283.4 669.5,283.6 671.0,283.8 672.4,284.1 673.9,284.3 675.4,284.6 676.9,284.8 678.4,285.0 679.9,285.2 681.3,285.5 682.8,285.7 684.3,285.9 685.8,286.1 687.3,286.4 688.8,286.6 690.2,286.8 691.7,287.0 693.2,287.2 694.7,287.4 696.2,287.6 697.7,287.8 699.1,288.0 700.6,288.2 702.1,288.4 703.6,288.6 705.1,288.8 706.6,289.0 708.1,289.2 709.6,289.4 711.0,289.6 712.5,289.8 714.0,290.0 715.5,290.2 717.0,290.4 718.5,290.6 720.0,290.7 721.5,290.9 723.0,291.1 724.4,291.2 725.9,291.4 727.4,291.6 728.9,291.7 730.4,291.9 731.9,292.1 733.4,292.2 734.9,292.4 736.4,292.5 737.9,292.7 739.4,292.9 740.9,293.0 742.3,293.2 743.8,293.3 745.3,293.5 746.8,293.6 748.3,293.8 749.8,293.9 751.3,294.1 752.8,294.3 754.3,294.4 755.8,294.6" stroke="#f58c2a" stroke-width="1.1" stroke-opacity="0.8"/>
</g>
<!-- R5 marker -->
<path d="M11.5 306 H26 L31.8 312.5 L26 320 H11.5 Z" fill="#f59a32"/>
</svg>
<div class="a" style="left:16.6px;top:309px;font-size:6.8px;line-height:7px;color:#201a10;letter-spacing:0.2px;font-weight:bold">R 5</div>

<!-- y labels -->
<div class="a ylab" style="left:693.6px;top:75.3px">1.2 A</div>
<div class="a ylab" style="left:693.6px;top:114.3px">1000 mA</div>
<div class="a ylab" style="left:693.6px;top:153.3px">800 mA</div>
<div class="a ylab" style="left:693.6px;top:192.3px">600 mA</div>
<div class="a ylab" style="left:693.6px;top:231.3px">400 mA</div>
<div class="a ylab" style="left:693.6px;top:270.3px">200 mA</div>
<div class="a ylab" style="left:693.6px;top:309.3px">0 A</div>
<div class="a ylab" style="left:693.6px;top:348.3px">-200 mA</div>
<div class="a ylab" style="left:693.6px;top:387.3px">-400 mA</div>
<!-- x labels -->
<div class="a xlab" style="left:61px;top:423px">-5.2 µs</div>
<div class="a xlab" style="left:136px;top:423px">-2.6 µs</div>
<div class="a xlab" style="left:211px;top:423px">0 s</div>
<div class="a xlab" style="left:285px;top:423px">2.6 µs</div>
<div class="a xlab" style="left:360px;top:423px">5.2 µs</div>
<div class="a xlab" style="left:435px;top:423px">7.8 µs</div>
<div class="a xlab" style="left:509px;top:423px">10.4 µs</div>
<div class="a xlab" style="left:584px;top:423px">13 µs</div>
<div class="a xlab" style="left:659px;top:423px">15.6 µs</div>

<!-- right panel -->
<div class="a" style="left:765px;top:26px;width:88px;height:408px;border:1px solid #464646;border-right:none"></div>
<div id="logo" class="a" style="left:794.5px;top:8.5px;font-size:12.8px;font-weight:bold;color:#f4f4f4;line-height:14px;letter-spacing:-0.75px;white-space:nowrap">Te<span style="position:relative">k<svg style="position:absolute;left:2.4px;top:5.2px" width="6" height="7" viewBox="0 0 6 7"><path d="M3.4 0 H5.8 L2.4 7 H0 Z" fill="#24b4d0"/></svg></span>tronix</div>
<div class="a" style="left:766px;top:26px;width:87px;text-align:center;font-size:9px;font-weight:bold;color:#dedede;line-height:12px">Add New...</div>
<div class="a rbtn" style="left:769px;top:40px">Cursors</div>
<div class="a rbtn" style="left:811px;top:40px">Callout</div>
<div class="a rbtn" style="left:769px;top:67px">Measure</div>
<div class="a rbtn" style="left:811px;top:67px">Search</div>
<div class="a rbtn" style="left:769px;top:94px">Results<br>Table</div>
<div class="a rbtn" style="left:811px;top:94px">Plot</div>
<div class="a" style="left:766px;top:120px;width:87px;height:1px;background:#3c3c3c"></div>
<div class="a rbtn" style="left:769px;top:124px"></div>
<div class="a rbtn" style="left:811px;top:124px">More...</div>
<div class="a" style="left:766px;top:150px;width:87px;height:1px;background:#3c3c3c"></div>

<!-- meas badge -->
<div class="a" style="left:767px;top:156px;width:85px;height:44px;background:#c8c8c8;border-radius:2px;overflow:hidden">
  <div style="height:10px;background:#000;color:#f0e020;font-size:9.2px;line-height:10px;padding-left:3.5px">Meas 1</div>
  <div style="position:absolute;left:68px;top:1.5px;width:13px;height:7px;border-radius:3.5px;background:#f0e020;color:#000;font-size:6px;line-height:7px;text-align:center">1</div>
  <div style="position:absolute;left:4.5px;top:12px;color:#111;font-size:8.8px;line-height:10px;white-space:nowrap">Rise Time</div>
  <div style="position:absolute;left:4.5px;top:24.2px;color:#111;font-size:8.8px;line-height:10px;white-space:nowrap">µ': 513.6 ps</div>
  <div style="position:absolute;left:4.5px;top:34px;color:#111;font-size:8.8px;line-height:10px;font-weight:bold;white-space:nowrap">Low amplitude</div>
</div>
<div class="a" style="left:761px;top:226px;width:2.2px;height:2.2px;background:#8c8c8c;box-shadow:0 3.7px 0 #8c8c8c,0 7.4px 0 #8c8c8c"></div>
<svg class="a" style="left:781px;top:128px" width="16" height="16" viewBox="0 0 16 16">
<rect x="2.5" y="2.5" width="9" height="9" fill="none" stroke="#bdbdbd" stroke-width="1" stroke-dasharray="1.2 1"/>
<circle cx="7" cy="6.5" r="2.2" fill="none" stroke="#d0d0d0" stroke-width="1"/>
<line x1="5.5" y1="8" x2="3.5" y2="10.5" stroke="#d0d0d0" stroke-width="1"/>
<path d="M10 10 L14 12.5 L12.5 13 L13.5 14.5 L12.5 15 L11.5 13.5 L10.5 14.5 Z" fill="#d0d0d0"/>
</svg>

<!-- bottom bar -->
<div class="a" style="left:11.3px;top:437.4px;width:15.5px;height:44px;border-radius:3px;background:linear-gradient(#3a3a3a,#2e2e2e 70%,#262626);border:1px solid #474747"></div>
<svg class="a" style="left:15px;top:455px" width="8" height="10"><path d="M5.5 1.5 L2.5 5 L5.5 8.5" fill="none" stroke="#d8d8d8" stroke-width="1.4"/></svg>
<div class="a badge" style="left:31px;top:437px;width:53px;height:46px"><div class="h" style="background:#f7982e;color:#4a2a0c;height:11px;line-height:11px;font-size:8.4px;font-weight:bold">Ref 5</div><div style="padding-left:4px;padding-top:2.2px;line-height:10.3px;font-size:9.2px">200 mA/div<br>3.125 GS/s<br>VK_10R_...</div></div>
<div class="a" style="left:88.7px;top:437.3px;width:15.3px;height:44px;border-radius:3px;border:1px solid #3a3a3a;background:#2b2b2b"></div>
<svg class="a" style="left:92px;top:455px" width="8" height="10"><path d="M2.5 1.5 L5.5 5 L2.5 8.5" fill="none" stroke="#d8d8d8" stroke-width="1.4"/></svg>
<div class="a ch" style="left:128.3px"><i style="background:#22b4c8"></i><b>2</b></div>
<div class="a ch" style="left:155.1px"><i style="background:#d8344e"></i><b>3</b></div>
<div class="a ch" style="left:181.7px"><i style="background:#84b830"></i><b>4</b></div>
<div class="a ch" style="left:208.0px"><i style="background:#ef8a2c"></i><b>5</b></div>
<div class="a ch" style="left:235.2px"><i style="background:#2a2ab0"></i><b>6</b></div>
<div class="a ch" style="left:261.9px"><i style="background:#c8408c"></i><b>7</b></div>
<div class="a ch" style="left:288.4px"><i style="background:#20b080"></i><b>8</b></div>
<div class="a sep" style="left:317px;width:1.5px;background:#3a3a3a"></div>
<div class="a ch" style="left:323.6px"><i style="background:#e08a30"></i><s>Add<br>New<br>Math</s></div>
<div class="a ch" style="left:350.2px"><i style="background:#6a8cc8"></i><s>Add<br>New<br>Ref</s></div>
<div class="a ch" style="left:376.9px"><i style="background:#a050d8"></i><s>Add<br>New<br>Bus</s></div>
<div class="a sep" style="left:405px;width:1.5px;background:#3a3a3a"></div>
<div class="a ch" style="left:412.2px"><i style="background:#4a4a4a"></i><b style="font-size:9.6px;top:18.3px">DVM</b></div>
<div class="a ch" style="left:442.3px"><i style="background:#4a4a4a"></i><b style="font-size:9.6px;top:18.3px">AFG</b></div>
<div class="a sep" style="left:471px;width:1.5px;background:#3a3a3a"></div>
<div class="a badge" style="left:478px;width:116.5px"><div class="h">Horizontal</div><div style="position:relative;padding-left:4px;padding-top:3px"><span style="letter-spacing:-0.2px">2.6 µs/div<br>SR: 3.125 GS/s<br>RL: 81.25 kpts</span><div style="position:absolute;left:66px;top:3px">26 µs<br>320 ps/pt<br><span style="display:inline-block;width:4.5px;height:6px;border-radius:1.5px;background:#e8924a;vertical-align:-0.5px;margin-right:1.5px;margin-left:0.5px;box-shadow:inset 0 0 0 1.2px #e8924a,inset 0 0 0 3px #5a3010"></span>30.2%</div></div></div>
<div class="a badge" style="left:598px;width:93.5px"><div class="h">Trigger</div><div style="position:relative;padding-left:4px;padding-top:3px"><span style="display:inline-block;width:17.5px;height:9.5px;border-radius:2.5px;background:#f0e020;border:0.5px solid #a09000;text-align:center;font-size:8.5px;line-height:9px;vertical-align:0px">1</span><svg style="display:inline-block;vertical-align:0px;margin-left:5px" width="9" height="9"><path d="M1 8 L3 8 Q5 8 6 4 Q7 1 8.5 1" fill="none" stroke="#7060b0" stroke-width="1"/></svg><span style="margin-left:5px">640 mV</span></div></div>
<div class="a badge" style="left:695px;width:87.5px"><div class="h">Acquisition</div><div style="position:relative;padding-left:4px;padding-top:3px">Auto,<span style="position:absolute;right:5px">Analyze</span><br>High Res: 12 bits<br>0 Acqs</div></div>
<div class="a sep" style="left:788.5px;width:1.5px;background:#3a3a3a"></div>
<div class="a" style="left:795.5px;top:436.5px;width:53.5px;height:21.5px;background:#f2ea00;border-radius:3px;font-weight:bold;font-size:7.3px;color:#111;text-align:center;line-height:19.5px">Ready</div>
<div class="a" style="left:795px;top:462px;width:53.5px;height:20.5px;background:#c8c8c8;border-radius:3px;font-size:9px;color:#151515;text-align:center;line-height:9.7px;padding-top:0.6px">10 Apr 2020<br>7:22:40 AM</div>
</body></html>
